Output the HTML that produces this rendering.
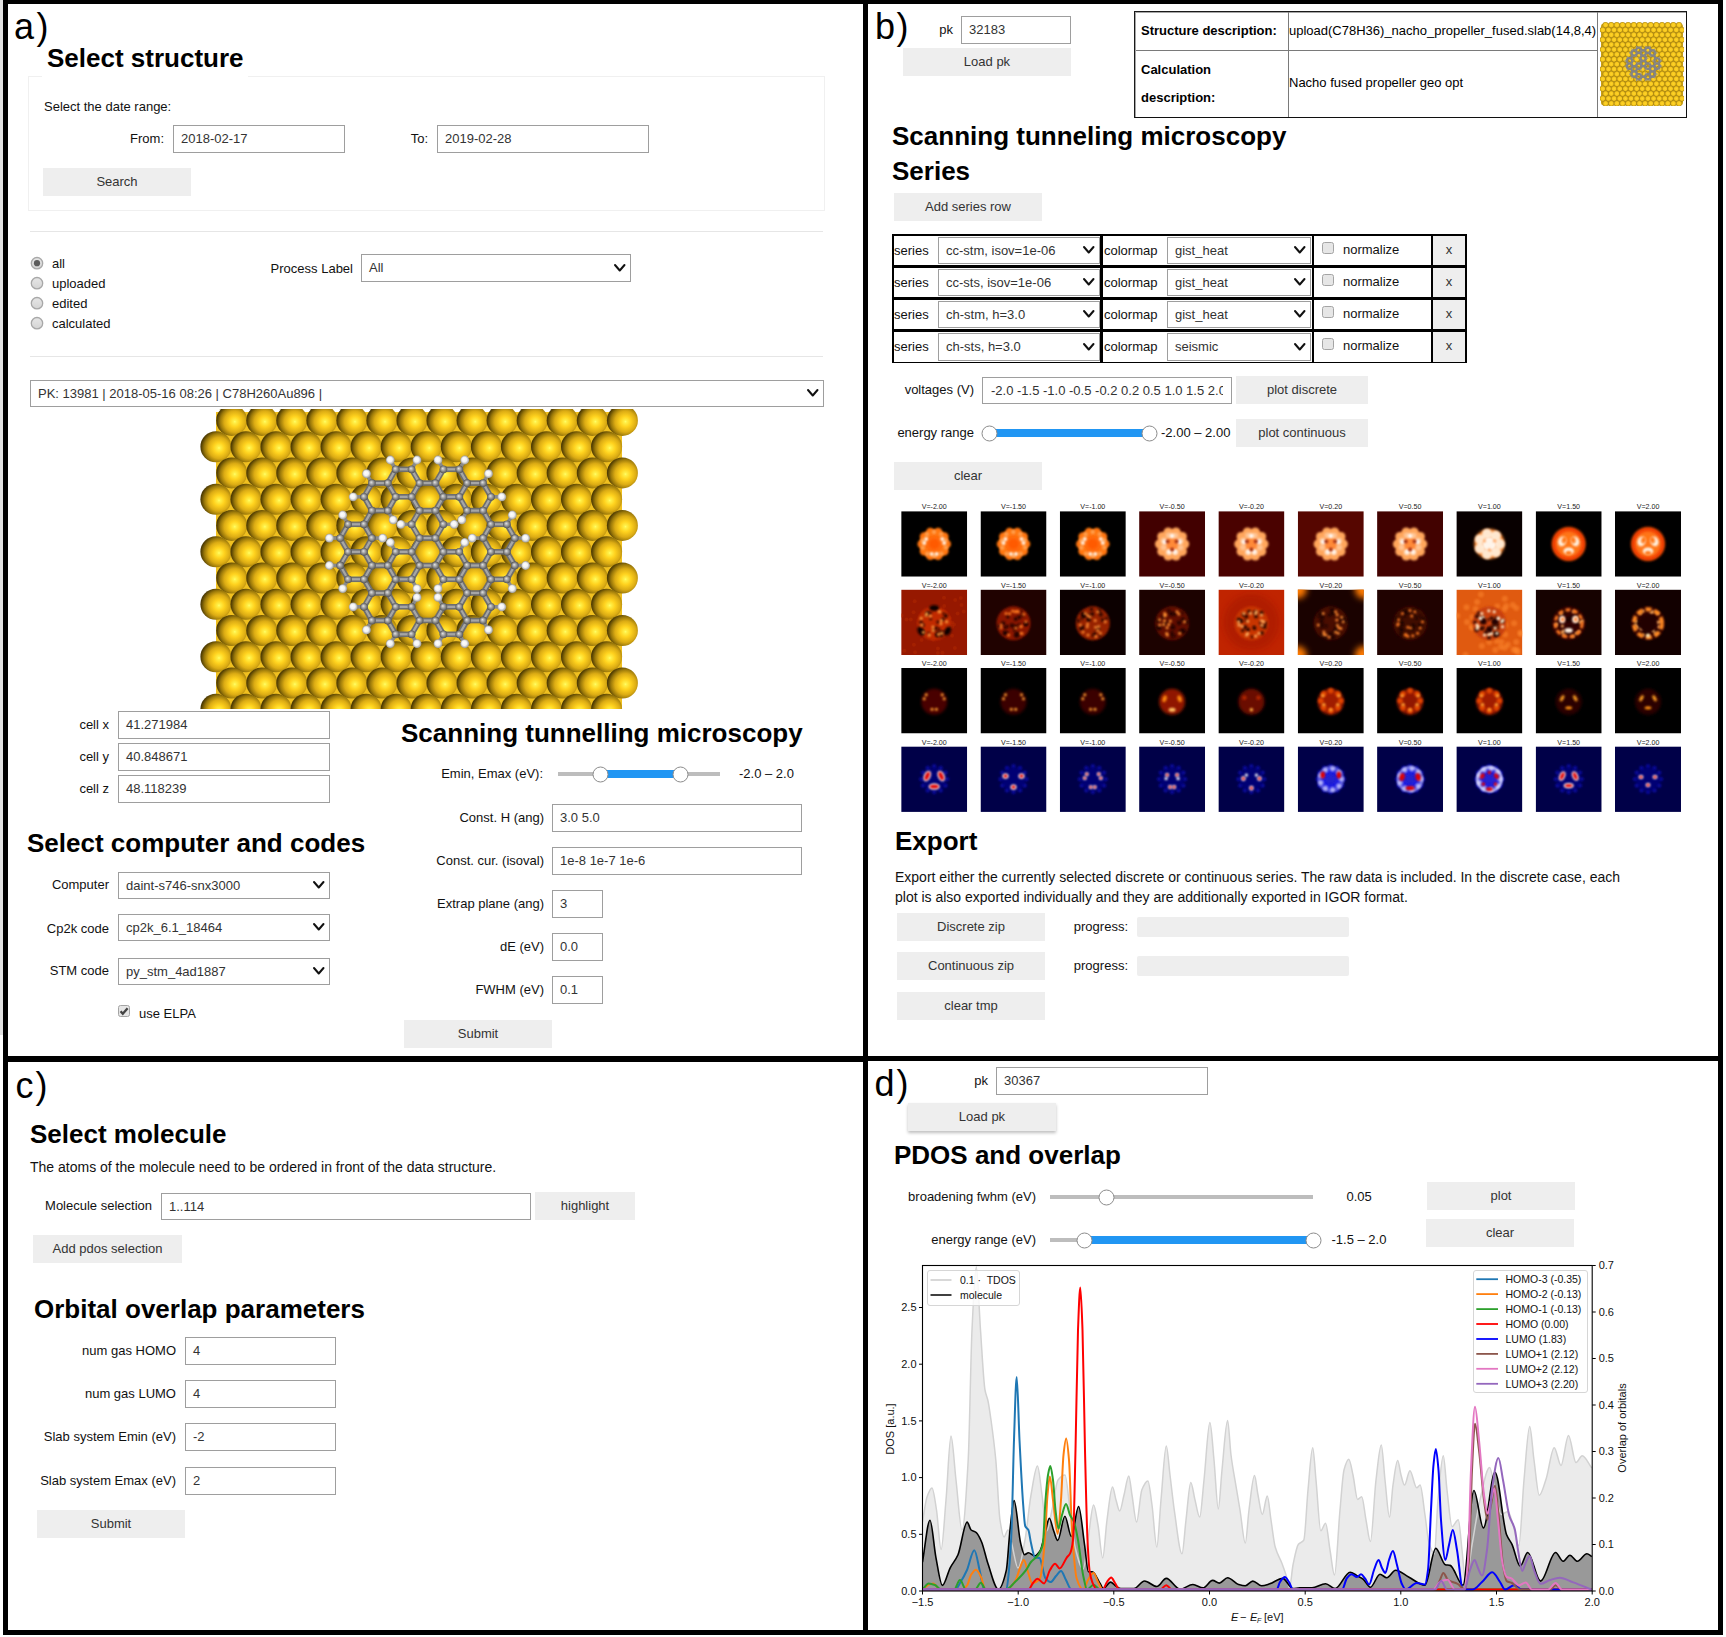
<!DOCTYPE html>
<html><head><meta charset='utf-8'><style>
html,body{margin:0;padding:0;background:#fff;}
body{width:1726px;height:1637px;position:relative;overflow:hidden;font-family:"Liberation Sans", sans-serif;}
.t{position:absolute;white-space:nowrap;line-height:1;color:#222;}
.r{position:absolute;}
</style></head><body>
<div class=t style='top:9px;font-size:36px;color:#000;left:14px;letter-spacing:2.5px;'>a)</div><div class=t style='top:45px;font-size:26px;font-weight:700;color:#000;left:47px;'>Select structure</div><div class=r style='left:28px;top:76px;width:797px;height:135px;border:1px solid #f0f0f0;box-sizing:border-box;'></div><div class=r style='left:42px;top:75px;width:206px;height:3px;background:#fff;'></div><div class=t style='top:100px;font-size:13px;color:#111;left:44px;'>Select the date range:</div><div class=t style='top:132px;font-size:13px;color:#111;right:1562px;'>From:</div><div class=r style='left:173px;top:125px;width:172px;height:28px;background:#fff;border:1px solid #9e9e9e;box-sizing:border-box;'></div><div class=t style='top:132px;font-size:13px;color:#333;left:181px;'>2018-02-17</div><div class=t style='top:132px;font-size:13px;color:#111;right:1298px;'>To:</div><div class=r style='left:437px;top:125px;width:212px;height:28px;background:#fff;border:1px solid #9e9e9e;box-sizing:border-box;'></div><div class=t style='top:132px;font-size:13px;color:#333;left:445px;'>2019-02-28</div><div class=r style='left:43px;top:168px;width:148px;height:28px;background:#eeeeee;'></div><div class=t style='left:43px;width:148px;text-align:center;top:175px;font-size:13px;color:#333'>Search</div><div class=r style='left:30px;top:231px;width:793px;height:1px;background:#e6e6e6;'></div><svg class=r style='left:30px;top:256px' width='14' height='14'><defs><linearGradient id='rg37263' x1='0' y1='0' x2='0' y2='1'><stop offset='0' stop-color='#e6e6e6'/><stop offset='1' stop-color='#d4d4d4'/></linearGradient></defs><circle cx='7' cy='7.2' r='5.7' fill='url(#rg37263)' stroke='#a8a8a8' stroke-width='1.3'/><circle cx='7' cy='7.2' r='3.1' fill='#5c5c5c'/></svg><div class=t style='top:257px;font-size:13px;color:#111;left:52px;'>all</div><svg class=r style='left:30px;top:276px' width='14' height='14'><defs><linearGradient id='rg37283' x1='0' y1='0' x2='0' y2='1'><stop offset='0' stop-color='#e6e6e6'/><stop offset='1' stop-color='#d4d4d4'/></linearGradient></defs><circle cx='7' cy='7.2' r='5.7' fill='url(#rg37283)' stroke='#a8a8a8' stroke-width='1.3'/></svg><div class=t style='top:277px;font-size:13px;color:#111;left:52px;'>uploaded</div><svg class=r style='left:30px;top:296px' width='14' height='14'><defs><linearGradient id='rg37303' x1='0' y1='0' x2='0' y2='1'><stop offset='0' stop-color='#e6e6e6'/><stop offset='1' stop-color='#d4d4d4'/></linearGradient></defs><circle cx='7' cy='7.2' r='5.7' fill='url(#rg37303)' stroke='#a8a8a8' stroke-width='1.3'/></svg><div class=t style='top:297px;font-size:13px;color:#111;left:52px;'>edited</div><svg class=r style='left:30px;top:316px' width='14' height='14'><defs><linearGradient id='rg37323' x1='0' y1='0' x2='0' y2='1'><stop offset='0' stop-color='#e6e6e6'/><stop offset='1' stop-color='#d4d4d4'/></linearGradient></defs><circle cx='7' cy='7.2' r='5.7' fill='url(#rg37323)' stroke='#a8a8a8' stroke-width='1.3'/></svg><div class=t style='top:317px;font-size:13px;color:#111;left:52px;'>calculated</div><div class=t style='top:262px;font-size:13px;color:#111;right:1373px;'>Process Label</div><div class=r style='left:361px;top:254px;width:270px;height:28px;background:#fff;border:1px solid #9e9e9e;box-sizing:border-box;'></div><div class=t style='top:261px;font-size:13px;color:#333;left:369px;'>All</div><svg class=r style='left:613.25px;top:262.95px' width='13.5' height='9.5'><polyline points='2,2 6.75,7.5 11.5,2' fill='none' stroke='#111' stroke-width='2' stroke-linecap='round' stroke-linejoin='round'/></svg><div class=r style='left:30px;top:356px;width:793px;height:1px;background:#e6e6e6;'></div><div class=r style='left:30px;top:380px;width:794px;height:27px;background:#fff;border:1px solid #9e9e9e;box-sizing:border-box;'></div><div class=t style='top:387px;font-size:13px;color:#333;left:38px;'>PK: 13981 | 2018-05-16 08:26 | C78H260Au896 |</div><svg class=r style='left:806.25px;top:388.45px' width='13.5' height='9.5'><polyline points='2,2 6.75,7.5 11.5,2' fill='none' stroke='#111' stroke-width='2' stroke-linecap='round' stroke-linejoin='round'/></svg><svg class=r style='left:198px;top:409px' width='444' height='300' viewBox='198 409 444 300'><defs>
<radialGradient id='au' cx='0.6' cy='0.54' r='0.62' fx='0.6' fy='0.54'>
<stop offset='0' stop-color='#ffff6c'/><stop offset='0.07' stop-color='#fff048'/>
<stop offset='0.28' stop-color='#ffd21e'/><stop offset='0.55' stop-color='#dcac14'/>
<stop offset='0.76' stop-color='#9a780a'/><stop offset='0.9' stop-color='#5e4804'/><stop offset='1' stop-color='#3a2c00'/></radialGradient>
<radialGradient id='cg' cx='0.5' cy='0.5' r='0.5' fx='0.4' fy='0.38'>
<stop offset='0' stop-color='#e4e4e4'/><stop offset='0.6' stop-color='#8e8e8e'/><stop offset='1' stop-color='#555'/></radialGradient>
<radialGradient id='hg' cx='0.5' cy='0.5' r='0.5' fx='0.4' fy='0.38'>
<stop offset='0' stop-color='#ffffff'/><stop offset='0.55' stop-color='#f2f2f2'/><stop offset='1' stop-color='#9a9a9a'/></radialGradient>
</defs><rect x='216' y='412' width='406' height='297' fill='#f0c020'/><ellipse cx='230.9' cy='403' rx='15.5' ry='9' fill='#8a6c06'/><ellipse cx='261.0' cy='403' rx='15.5' ry='9' fill='#8a6c06'/><ellipse cx='291.0' cy='403' rx='15.5' ry='9' fill='#8a6c06'/><ellipse cx='321.1' cy='403' rx='15.5' ry='9' fill='#8a6c06'/><ellipse cx='351.1' cy='403' rx='15.5' ry='9' fill='#8a6c06'/><ellipse cx='381.1' cy='403' rx='15.5' ry='9' fill='#8a6c06'/><ellipse cx='411.2' cy='403' rx='15.5' ry='9' fill='#8a6c06'/><ellipse cx='441.2' cy='403' rx='15.5' ry='9' fill='#8a6c06'/><ellipse cx='471.3' cy='403' rx='15.5' ry='9' fill='#8a6c06'/><ellipse cx='501.4' cy='403' rx='15.5' ry='9' fill='#8a6c06'/><ellipse cx='531.4' cy='403' rx='15.5' ry='9' fill='#8a6c06'/><ellipse cx='561.5' cy='403' rx='15.5' ry='9' fill='#8a6c06'/><ellipse cx='591.5' cy='403' rx='15.5' ry='9' fill='#8a6c06'/><ellipse cx='621.6' cy='403' rx='15.5' ry='9' fill='#8a6c06'/><circle cx='231.7' cy='420.4' r='15.5' fill='url(#au)'/><circle cx='261.8' cy='420.4' r='15.5' fill='url(#au)'/><circle cx='291.8' cy='420.4' r='15.5' fill='url(#au)'/><circle cx='321.9' cy='420.4' r='15.5' fill='url(#au)'/><circle cx='351.9' cy='420.4' r='15.5' fill='url(#au)'/><circle cx='381.9' cy='420.4' r='15.5' fill='url(#au)'/><circle cx='412.0' cy='420.4' r='15.5' fill='url(#au)'/><circle cx='442.0' cy='420.4' r='15.5' fill='url(#au)'/><circle cx='472.1' cy='420.4' r='15.5' fill='url(#au)'/><circle cx='502.1' cy='420.4' r='15.5' fill='url(#au)'/><circle cx='532.2' cy='420.4' r='15.5' fill='url(#au)'/><circle cx='562.2' cy='420.4' r='15.5' fill='url(#au)'/><circle cx='592.3' cy='420.4' r='15.5' fill='url(#au)'/><circle cx='622.4' cy='420.4' r='15.5' fill='url(#au)'/><circle cx='215.9' cy='446.7' r='15.5' fill='url(#au)'/><circle cx='246.0' cy='446.7' r='15.5' fill='url(#au)'/><circle cx='276.0' cy='446.7' r='15.5' fill='url(#au)'/><circle cx='306.1' cy='446.7' r='15.5' fill='url(#au)'/><circle cx='336.1' cy='446.7' r='15.5' fill='url(#au)'/><circle cx='366.1' cy='446.7' r='15.5' fill='url(#au)'/><circle cx='396.2' cy='446.7' r='15.5' fill='url(#au)'/><circle cx='426.2' cy='446.7' r='15.5' fill='url(#au)'/><circle cx='456.3' cy='446.7' r='15.5' fill='url(#au)'/><circle cx='486.4' cy='446.7' r='15.5' fill='url(#au)'/><circle cx='516.4' cy='446.7' r='15.5' fill='url(#au)'/><circle cx='546.5' cy='446.7' r='15.5' fill='url(#au)'/><circle cx='576.5' cy='446.7' r='15.5' fill='url(#au)'/><circle cx='606.6' cy='446.7' r='15.5' fill='url(#au)'/><circle cx='231.7' cy='472.9' r='15.5' fill='url(#au)'/><circle cx='261.8' cy='472.9' r='15.5' fill='url(#au)'/><circle cx='291.8' cy='472.9' r='15.5' fill='url(#au)'/><circle cx='321.9' cy='472.9' r='15.5' fill='url(#au)'/><circle cx='351.9' cy='472.9' r='15.5' fill='url(#au)'/><circle cx='381.9' cy='472.9' r='15.5' fill='url(#au)'/><circle cx='412.0' cy='472.9' r='15.5' fill='url(#au)'/><circle cx='442.0' cy='472.9' r='15.5' fill='url(#au)'/><circle cx='472.1' cy='472.9' r='15.5' fill='url(#au)'/><circle cx='502.1' cy='472.9' r='15.5' fill='url(#au)'/><circle cx='532.2' cy='472.9' r='15.5' fill='url(#au)'/><circle cx='562.2' cy='472.9' r='15.5' fill='url(#au)'/><circle cx='592.3' cy='472.9' r='15.5' fill='url(#au)'/><circle cx='622.4' cy='472.9' r='15.5' fill='url(#au)'/><circle cx='215.9' cy='499.2' r='15.5' fill='url(#au)'/><circle cx='246.0' cy='499.2' r='15.5' fill='url(#au)'/><circle cx='276.0' cy='499.2' r='15.5' fill='url(#au)'/><circle cx='306.1' cy='499.2' r='15.5' fill='url(#au)'/><circle cx='336.1' cy='499.2' r='15.5' fill='url(#au)'/><circle cx='366.1' cy='499.2' r='15.5' fill='url(#au)'/><circle cx='396.2' cy='499.2' r='15.5' fill='url(#au)'/><circle cx='426.2' cy='499.2' r='15.5' fill='url(#au)'/><circle cx='456.3' cy='499.2' r='15.5' fill='url(#au)'/><circle cx='486.4' cy='499.2' r='15.5' fill='url(#au)'/><circle cx='516.4' cy='499.2' r='15.5' fill='url(#au)'/><circle cx='546.5' cy='499.2' r='15.5' fill='url(#au)'/><circle cx='576.5' cy='499.2' r='15.5' fill='url(#au)'/><circle cx='606.6' cy='499.2' r='15.5' fill='url(#au)'/><circle cx='231.7' cy='525.4' r='15.5' fill='url(#au)'/><circle cx='261.8' cy='525.4' r='15.5' fill='url(#au)'/><circle cx='291.8' cy='525.4' r='15.5' fill='url(#au)'/><circle cx='321.9' cy='525.4' r='15.5' fill='url(#au)'/><circle cx='351.9' cy='525.4' r='15.5' fill='url(#au)'/><circle cx='381.9' cy='525.4' r='15.5' fill='url(#au)'/><circle cx='412.0' cy='525.4' r='15.5' fill='url(#au)'/><circle cx='442.0' cy='525.4' r='15.5' fill='url(#au)'/><circle cx='472.1' cy='525.4' r='15.5' fill='url(#au)'/><circle cx='502.1' cy='525.4' r='15.5' fill='url(#au)'/><circle cx='532.2' cy='525.4' r='15.5' fill='url(#au)'/><circle cx='562.2' cy='525.4' r='15.5' fill='url(#au)'/><circle cx='592.3' cy='525.4' r='15.5' fill='url(#au)'/><circle cx='622.4' cy='525.4' r='15.5' fill='url(#au)'/><circle cx='215.9' cy='551.7' r='15.5' fill='url(#au)'/><circle cx='246.0' cy='551.7' r='15.5' fill='url(#au)'/><circle cx='276.0' cy='551.7' r='15.5' fill='url(#au)'/><circle cx='306.1' cy='551.7' r='15.5' fill='url(#au)'/><circle cx='336.1' cy='551.7' r='15.5' fill='url(#au)'/><circle cx='366.1' cy='551.7' r='15.5' fill='url(#au)'/><circle cx='396.2' cy='551.7' r='15.5' fill='url(#au)'/><circle cx='426.2' cy='551.7' r='15.5' fill='url(#au)'/><circle cx='456.3' cy='551.7' r='15.5' fill='url(#au)'/><circle cx='486.4' cy='551.7' r='15.5' fill='url(#au)'/><circle cx='516.4' cy='551.7' r='15.5' fill='url(#au)'/><circle cx='546.5' cy='551.7' r='15.5' fill='url(#au)'/><circle cx='576.5' cy='551.7' r='15.5' fill='url(#au)'/><circle cx='606.6' cy='551.7' r='15.5' fill='url(#au)'/><circle cx='231.7' cy='578.0' r='15.5' fill='url(#au)'/><circle cx='261.8' cy='578.0' r='15.5' fill='url(#au)'/><circle cx='291.8' cy='578.0' r='15.5' fill='url(#au)'/><circle cx='321.9' cy='578.0' r='15.5' fill='url(#au)'/><circle cx='351.9' cy='578.0' r='15.5' fill='url(#au)'/><circle cx='381.9' cy='578.0' r='15.5' fill='url(#au)'/><circle cx='412.0' cy='578.0' r='15.5' fill='url(#au)'/><circle cx='442.0' cy='578.0' r='15.5' fill='url(#au)'/><circle cx='472.1' cy='578.0' r='15.5' fill='url(#au)'/><circle cx='502.1' cy='578.0' r='15.5' fill='url(#au)'/><circle cx='532.2' cy='578.0' r='15.5' fill='url(#au)'/><circle cx='562.2' cy='578.0' r='15.5' fill='url(#au)'/><circle cx='592.3' cy='578.0' r='15.5' fill='url(#au)'/><circle cx='622.4' cy='578.0' r='15.5' fill='url(#au)'/><circle cx='215.9' cy='604.2' r='15.5' fill='url(#au)'/><circle cx='246.0' cy='604.2' r='15.5' fill='url(#au)'/><circle cx='276.0' cy='604.2' r='15.5' fill='url(#au)'/><circle cx='306.1' cy='604.2' r='15.5' fill='url(#au)'/><circle cx='336.1' cy='604.2' r='15.5' fill='url(#au)'/><circle cx='366.1' cy='604.2' r='15.5' fill='url(#au)'/><circle cx='396.2' cy='604.2' r='15.5' fill='url(#au)'/><circle cx='426.2' cy='604.2' r='15.5' fill='url(#au)'/><circle cx='456.3' cy='604.2' r='15.5' fill='url(#au)'/><circle cx='486.4' cy='604.2' r='15.5' fill='url(#au)'/><circle cx='516.4' cy='604.2' r='15.5' fill='url(#au)'/><circle cx='546.5' cy='604.2' r='15.5' fill='url(#au)'/><circle cx='576.5' cy='604.2' r='15.5' fill='url(#au)'/><circle cx='606.6' cy='604.2' r='15.5' fill='url(#au)'/><circle cx='231.7' cy='630.5' r='15.5' fill='url(#au)'/><circle cx='261.8' cy='630.5' r='15.5' fill='url(#au)'/><circle cx='291.8' cy='630.5' r='15.5' fill='url(#au)'/><circle cx='321.9' cy='630.5' r='15.5' fill='url(#au)'/><circle cx='351.9' cy='630.5' r='15.5' fill='url(#au)'/><circle cx='381.9' cy='630.5' r='15.5' fill='url(#au)'/><circle cx='412.0' cy='630.5' r='15.5' fill='url(#au)'/><circle cx='442.0' cy='630.5' r='15.5' fill='url(#au)'/><circle cx='472.1' cy='630.5' r='15.5' fill='url(#au)'/><circle cx='502.1' cy='630.5' r='15.5' fill='url(#au)'/><circle cx='532.2' cy='630.5' r='15.5' fill='url(#au)'/><circle cx='562.2' cy='630.5' r='15.5' fill='url(#au)'/><circle cx='592.3' cy='630.5' r='15.5' fill='url(#au)'/><circle cx='622.4' cy='630.5' r='15.5' fill='url(#au)'/><circle cx='215.9' cy='656.7' r='15.5' fill='url(#au)'/><circle cx='246.0' cy='656.7' r='15.5' fill='url(#au)'/><circle cx='276.0' cy='656.7' r='15.5' fill='url(#au)'/><circle cx='306.1' cy='656.7' r='15.5' fill='url(#au)'/><circle cx='336.1' cy='656.7' r='15.5' fill='url(#au)'/><circle cx='366.1' cy='656.7' r='15.5' fill='url(#au)'/><circle cx='396.2' cy='656.7' r='15.5' fill='url(#au)'/><circle cx='426.2' cy='656.7' r='15.5' fill='url(#au)'/><circle cx='456.3' cy='656.7' r='15.5' fill='url(#au)'/><circle cx='486.4' cy='656.7' r='15.5' fill='url(#au)'/><circle cx='516.4' cy='656.7' r='15.5' fill='url(#au)'/><circle cx='546.5' cy='656.7' r='15.5' fill='url(#au)'/><circle cx='576.5' cy='656.7' r='15.5' fill='url(#au)'/><circle cx='606.6' cy='656.7' r='15.5' fill='url(#au)'/><circle cx='231.7' cy='683.0' r='15.5' fill='url(#au)'/><circle cx='261.8' cy='683.0' r='15.5' fill='url(#au)'/><circle cx='291.8' cy='683.0' r='15.5' fill='url(#au)'/><circle cx='321.9' cy='683.0' r='15.5' fill='url(#au)'/><circle cx='351.9' cy='683.0' r='15.5' fill='url(#au)'/><circle cx='381.9' cy='683.0' r='15.5' fill='url(#au)'/><circle cx='412.0' cy='683.0' r='15.5' fill='url(#au)'/><circle cx='442.0' cy='683.0' r='15.5' fill='url(#au)'/><circle cx='472.1' cy='683.0' r='15.5' fill='url(#au)'/><circle cx='502.1' cy='683.0' r='15.5' fill='url(#au)'/><circle cx='532.2' cy='683.0' r='15.5' fill='url(#au)'/><circle cx='562.2' cy='683.0' r='15.5' fill='url(#au)'/><circle cx='592.3' cy='683.0' r='15.5' fill='url(#au)'/><circle cx='622.4' cy='683.0' r='15.5' fill='url(#au)'/><circle cx='215.9' cy='709.3' r='15.5' fill='url(#au)'/><circle cx='246.0' cy='709.3' r='15.5' fill='url(#au)'/><circle cx='276.0' cy='709.3' r='15.5' fill='url(#au)'/><circle cx='306.1' cy='709.3' r='15.5' fill='url(#au)'/><circle cx='336.1' cy='709.3' r='15.5' fill='url(#au)'/><circle cx='366.1' cy='709.3' r='15.5' fill='url(#au)'/><circle cx='396.2' cy='709.3' r='15.5' fill='url(#au)'/><circle cx='426.2' cy='709.3' r='15.5' fill='url(#au)'/><circle cx='456.3' cy='709.3' r='15.5' fill='url(#au)'/><circle cx='486.4' cy='709.3' r='15.5' fill='url(#au)'/><circle cx='516.4' cy='709.3' r='15.5' fill='url(#au)'/><circle cx='546.5' cy='709.3' r='15.5' fill='url(#au)'/><circle cx='576.5' cy='709.3' r='15.5' fill='url(#au)'/><circle cx='606.6' cy='709.3' r='15.5' fill='url(#au)'/><line x1='395.7' y1='469.3' x2='390.3' y2='460.0' stroke='#8a8a8a' stroke-width='3.6'/><line x1='411.6' y1='469.3' x2='417.0' y2='460.0' stroke='#8a8a8a' stroke-width='3.6'/><line x1='443.4' y1='469.3' x2='438.0' y2='460.0' stroke='#8a8a8a' stroke-width='3.6'/><line x1='459.3' y1='469.3' x2='464.7' y2='460.0' stroke='#8a8a8a' stroke-width='3.6'/><line x1='371.9' y1='483.1' x2='366.5' y2='473.7' stroke='#8a8a8a' stroke-width='3.6'/><line x1='483.1' y1='483.1' x2='488.5' y2='473.7' stroke='#8a8a8a' stroke-width='3.6'/><line x1='364.0' y1='496.8' x2='353.2' y2='496.8' stroke='#8a8a8a' stroke-width='3.6'/><line x1='491.0' y1='496.8' x2='501.8' y2='496.8' stroke='#8a8a8a' stroke-width='3.6'/><line x1='387.8' y1='510.6' x2='393.2' y2='519.9' stroke='#8a8a8a' stroke-width='3.6'/><line x1='467.2' y1='510.6' x2='461.8' y2='519.9' stroke='#8a8a8a' stroke-width='3.6'/><line x1='348.1' y1='524.3' x2='342.7' y2='515.0' stroke='#8a8a8a' stroke-width='3.6'/><line x1='411.6' y1='524.3' x2='400.8' y2='524.3' stroke='#8a8a8a' stroke-width='3.6'/><line x1='443.4' y1='524.3' x2='454.2' y2='524.3' stroke='#8a8a8a' stroke-width='3.6'/><line x1='506.9' y1='524.3' x2='512.3' y2='515.0' stroke='#8a8a8a' stroke-width='3.6'/><line x1='340.2' y1='538.1' x2='329.4' y2='538.1' stroke='#8a8a8a' stroke-width='3.6'/><line x1='371.9' y1='538.1' x2='382.7' y2='538.1' stroke='#8a8a8a' stroke-width='3.6'/><line x1='483.1' y1='538.1' x2='472.3' y2='538.1' stroke='#8a8a8a' stroke-width='3.6'/><line x1='514.8' y1='538.1' x2='525.6' y2='538.1' stroke='#8a8a8a' stroke-width='3.6'/><line x1='395.7' y1='551.8' x2='390.3' y2='542.5' stroke='#8a8a8a' stroke-width='3.6'/><line x1='459.3' y1='551.8' x2='464.7' y2='542.5' stroke='#8a8a8a' stroke-width='3.6'/><line x1='340.2' y1='565.5' x2='329.4' y2='565.5' stroke='#8a8a8a' stroke-width='3.6'/><line x1='514.8' y1='565.5' x2='525.6' y2='565.5' stroke='#8a8a8a' stroke-width='3.6'/><line x1='348.1' y1='579.3' x2='342.7' y2='588.6' stroke='#8a8a8a' stroke-width='3.6'/><line x1='411.6' y1='579.3' x2='417.0' y2='588.6' stroke='#8a8a8a' stroke-width='3.6'/><line x1='443.4' y1='579.3' x2='438.0' y2='588.6' stroke='#8a8a8a' stroke-width='3.6'/><line x1='506.9' y1='579.3' x2='512.3' y2='588.6' stroke='#8a8a8a' stroke-width='3.6'/><line x1='364.0' y1='606.8' x2='353.2' y2='606.8' stroke='#8a8a8a' stroke-width='3.6'/><line x1='411.6' y1='606.8' x2='417.0' y2='597.4' stroke='#8a8a8a' stroke-width='3.6'/><line x1='443.4' y1='606.8' x2='438.0' y2='597.4' stroke='#8a8a8a' stroke-width='3.6'/><line x1='491.0' y1='606.8' x2='501.8' y2='606.8' stroke='#8a8a8a' stroke-width='3.6'/><line x1='371.9' y1='620.5' x2='366.5' y2='629.9' stroke='#8a8a8a' stroke-width='3.6'/><line x1='483.1' y1='620.5' x2='488.5' y2='629.9' stroke='#8a8a8a' stroke-width='3.6'/><line x1='395.7' y1='634.3' x2='390.3' y2='643.6' stroke='#8a8a8a' stroke-width='3.6'/><line x1='411.6' y1='634.3' x2='417.0' y2='643.6' stroke='#8a8a8a' stroke-width='3.6'/><line x1='443.4' y1='634.3' x2='438.0' y2='643.6' stroke='#8a8a8a' stroke-width='3.6'/><line x1='459.3' y1='634.3' x2='464.7' y2='643.6' stroke='#8a8a8a' stroke-width='3.6'/><line x1='395.7' y1='469.3' x2='411.6' y2='469.3' stroke='#6e6e6e' stroke-width='5.6'/><line x1='395.7' y1='469.3' x2='387.8' y2='483.1' stroke='#6e6e6e' stroke-width='5.6'/><line x1='411.6' y1='469.3' x2='419.6' y2='483.1' stroke='#6e6e6e' stroke-width='5.6'/><line x1='443.4' y1='469.3' x2='459.3' y2='469.3' stroke='#6e6e6e' stroke-width='5.6'/><line x1='443.4' y1='469.3' x2='435.4' y2='483.1' stroke='#6e6e6e' stroke-width='5.6'/><line x1='459.3' y1='469.3' x2='467.2' y2='483.1' stroke='#6e6e6e' stroke-width='5.6'/><line x1='371.9' y1='483.1' x2='387.8' y2='483.1' stroke='#6e6e6e' stroke-width='5.6'/><line x1='371.9' y1='483.1' x2='364.0' y2='496.8' stroke='#6e6e6e' stroke-width='5.6'/><line x1='387.8' y1='483.1' x2='395.7' y2='496.8' stroke='#6e6e6e' stroke-width='5.6'/><line x1='419.6' y1='483.1' x2='435.4' y2='483.1' stroke='#6e6e6e' stroke-width='5.6'/><line x1='419.6' y1='483.1' x2='411.6' y2='496.8' stroke='#6e6e6e' stroke-width='5.6'/><line x1='435.4' y1='483.1' x2='443.4' y2='496.8' stroke='#6e6e6e' stroke-width='5.6'/><line x1='467.2' y1='483.1' x2='483.1' y2='483.1' stroke='#6e6e6e' stroke-width='5.6'/><line x1='467.2' y1='483.1' x2='459.3' y2='496.8' stroke='#6e6e6e' stroke-width='5.6'/><line x1='483.1' y1='483.1' x2='491.0' y2='496.8' stroke='#6e6e6e' stroke-width='5.6'/><line x1='364.0' y1='496.8' x2='371.9' y2='510.6' stroke='#6e6e6e' stroke-width='5.6'/><line x1='395.7' y1='496.8' x2='411.6' y2='496.8' stroke='#6e6e6e' stroke-width='5.6'/><line x1='395.7' y1='496.8' x2='387.8' y2='510.6' stroke='#6e6e6e' stroke-width='5.6'/><line x1='411.6' y1='496.8' x2='419.6' y2='510.6' stroke='#6e6e6e' stroke-width='5.6'/><line x1='443.4' y1='496.8' x2='459.3' y2='496.8' stroke='#6e6e6e' stroke-width='5.6'/><line x1='443.4' y1='496.8' x2='435.4' y2='510.6' stroke='#6e6e6e' stroke-width='5.6'/><line x1='459.3' y1='496.8' x2='467.2' y2='510.6' stroke='#6e6e6e' stroke-width='5.6'/><line x1='491.0' y1='496.8' x2='483.1' y2='510.6' stroke='#6e6e6e' stroke-width='5.6'/><line x1='371.9' y1='510.6' x2='387.8' y2='510.6' stroke='#6e6e6e' stroke-width='5.6'/><line x1='371.9' y1='510.6' x2='364.0' y2='524.3' stroke='#6e6e6e' stroke-width='5.6'/><line x1='419.6' y1='510.6' x2='435.4' y2='510.6' stroke='#6e6e6e' stroke-width='5.6'/><line x1='419.6' y1='510.6' x2='411.6' y2='524.3' stroke='#6e6e6e' stroke-width='5.6'/><line x1='435.4' y1='510.6' x2='443.4' y2='524.3' stroke='#6e6e6e' stroke-width='5.6'/><line x1='467.2' y1='510.6' x2='483.1' y2='510.6' stroke='#6e6e6e' stroke-width='5.6'/><line x1='483.1' y1='510.6' x2='491.0' y2='524.3' stroke='#6e6e6e' stroke-width='5.6'/><line x1='348.1' y1='524.3' x2='364.0' y2='524.3' stroke='#6e6e6e' stroke-width='5.6'/><line x1='348.1' y1='524.3' x2='340.2' y2='538.1' stroke='#6e6e6e' stroke-width='5.6'/><line x1='364.0' y1='524.3' x2='371.9' y2='538.1' stroke='#6e6e6e' stroke-width='5.6'/><line x1='411.6' y1='524.3' x2='419.6' y2='538.1' stroke='#6e6e6e' stroke-width='5.6'/><line x1='443.4' y1='524.3' x2='435.4' y2='538.1' stroke='#6e6e6e' stroke-width='5.6'/><line x1='491.0' y1='524.3' x2='506.9' y2='524.3' stroke='#6e6e6e' stroke-width='5.6'/><line x1='491.0' y1='524.3' x2='483.1' y2='538.1' stroke='#6e6e6e' stroke-width='5.6'/><line x1='506.9' y1='524.3' x2='514.8' y2='538.1' stroke='#6e6e6e' stroke-width='5.6'/><line x1='340.2' y1='538.1' x2='348.1' y2='551.8' stroke='#6e6e6e' stroke-width='5.6'/><line x1='371.9' y1='538.1' x2='364.0' y2='551.8' stroke='#6e6e6e' stroke-width='5.6'/><line x1='419.6' y1='538.1' x2='435.4' y2='538.1' stroke='#6e6e6e' stroke-width='5.6'/><line x1='419.6' y1='538.1' x2='411.6' y2='551.8' stroke='#6e6e6e' stroke-width='5.6'/><line x1='435.4' y1='538.1' x2='443.4' y2='551.8' stroke='#6e6e6e' stroke-width='5.6'/><line x1='483.1' y1='538.1' x2='491.0' y2='551.8' stroke='#6e6e6e' stroke-width='5.6'/><line x1='514.8' y1='538.1' x2='506.9' y2='551.8' stroke='#6e6e6e' stroke-width='5.6'/><line x1='348.1' y1='551.8' x2='364.0' y2='551.8' stroke='#6e6e6e' stroke-width='5.6'/><line x1='348.1' y1='551.8' x2='340.2' y2='565.5' stroke='#6e6e6e' stroke-width='5.6'/><line x1='364.0' y1='551.8' x2='371.9' y2='565.5' stroke='#6e6e6e' stroke-width='5.6'/><line x1='395.7' y1='551.8' x2='411.6' y2='551.8' stroke='#6e6e6e' stroke-width='5.6'/><line x1='395.7' y1='551.8' x2='387.8' y2='565.5' stroke='#6e6e6e' stroke-width='5.6'/><line x1='411.6' y1='551.8' x2='419.6' y2='565.5' stroke='#6e6e6e' stroke-width='5.6'/><line x1='443.4' y1='551.8' x2='459.3' y2='551.8' stroke='#6e6e6e' stroke-width='5.6'/><line x1='443.4' y1='551.8' x2='435.4' y2='565.5' stroke='#6e6e6e' stroke-width='5.6'/><line x1='459.3' y1='551.8' x2='467.2' y2='565.5' stroke='#6e6e6e' stroke-width='5.6'/><line x1='491.0' y1='551.8' x2='506.9' y2='551.8' stroke='#6e6e6e' stroke-width='5.6'/><line x1='491.0' y1='551.8' x2='483.1' y2='565.5' stroke='#6e6e6e' stroke-width='5.6'/><line x1='506.9' y1='551.8' x2='514.8' y2='565.5' stroke='#6e6e6e' stroke-width='5.6'/><line x1='340.2' y1='565.5' x2='348.1' y2='579.3' stroke='#6e6e6e' stroke-width='5.6'/><line x1='371.9' y1='565.5' x2='387.8' y2='565.5' stroke='#6e6e6e' stroke-width='5.6'/><line x1='371.9' y1='565.5' x2='364.0' y2='579.3' stroke='#6e6e6e' stroke-width='5.6'/><line x1='387.8' y1='565.5' x2='395.7' y2='579.3' stroke='#6e6e6e' stroke-width='5.6'/><line x1='419.6' y1='565.5' x2='435.4' y2='565.5' stroke='#6e6e6e' stroke-width='5.6'/><line x1='419.6' y1='565.5' x2='411.6' y2='579.3' stroke='#6e6e6e' stroke-width='5.6'/><line x1='435.4' y1='565.5' x2='443.4' y2='579.3' stroke='#6e6e6e' stroke-width='5.6'/><line x1='467.2' y1='565.5' x2='483.1' y2='565.5' stroke='#6e6e6e' stroke-width='5.6'/><line x1='467.2' y1='565.5' x2='459.3' y2='579.3' stroke='#6e6e6e' stroke-width='5.6'/><line x1='483.1' y1='565.5' x2='491.0' y2='579.3' stroke='#6e6e6e' stroke-width='5.6'/><line x1='514.8' y1='565.5' x2='506.9' y2='579.3' stroke='#6e6e6e' stroke-width='5.6'/><line x1='348.1' y1='579.3' x2='364.0' y2='579.3' stroke='#6e6e6e' stroke-width='5.6'/><line x1='364.0' y1='579.3' x2='371.9' y2='593.0' stroke='#6e6e6e' stroke-width='5.6'/><line x1='395.7' y1='579.3' x2='411.6' y2='579.3' stroke='#6e6e6e' stroke-width='5.6'/><line x1='395.7' y1='579.3' x2='387.8' y2='593.0' stroke='#6e6e6e' stroke-width='5.6'/><line x1='443.4' y1='579.3' x2='459.3' y2='579.3' stroke='#6e6e6e' stroke-width='5.6'/><line x1='459.3' y1='579.3' x2='467.2' y2='593.0' stroke='#6e6e6e' stroke-width='5.6'/><line x1='491.0' y1='579.3' x2='506.9' y2='579.3' stroke='#6e6e6e' stroke-width='5.6'/><line x1='491.0' y1='579.3' x2='483.1' y2='593.0' stroke='#6e6e6e' stroke-width='5.6'/><line x1='371.9' y1='593.0' x2='387.8' y2='593.0' stroke='#6e6e6e' stroke-width='5.6'/><line x1='371.9' y1='593.0' x2='364.0' y2='606.8' stroke='#6e6e6e' stroke-width='5.6'/><line x1='387.8' y1='593.0' x2='395.7' y2='606.8' stroke='#6e6e6e' stroke-width='5.6'/><line x1='467.2' y1='593.0' x2='483.1' y2='593.0' stroke='#6e6e6e' stroke-width='5.6'/><line x1='467.2' y1='593.0' x2='459.3' y2='606.8' stroke='#6e6e6e' stroke-width='5.6'/><line x1='483.1' y1='593.0' x2='491.0' y2='606.8' stroke='#6e6e6e' stroke-width='5.6'/><line x1='364.0' y1='606.8' x2='371.9' y2='620.5' stroke='#6e6e6e' stroke-width='5.6'/><line x1='395.7' y1='606.8' x2='411.6' y2='606.8' stroke='#6e6e6e' stroke-width='5.6'/><line x1='395.7' y1='606.8' x2='387.8' y2='620.5' stroke='#6e6e6e' stroke-width='5.6'/><line x1='411.6' y1='606.8' x2='419.6' y2='620.5' stroke='#6e6e6e' stroke-width='5.6'/><line x1='443.4' y1='606.8' x2='459.3' y2='606.8' stroke='#6e6e6e' stroke-width='5.6'/><line x1='443.4' y1='606.8' x2='435.4' y2='620.5' stroke='#6e6e6e' stroke-width='5.6'/><line x1='459.3' y1='606.8' x2='467.2' y2='620.5' stroke='#6e6e6e' stroke-width='5.6'/><line x1='491.0' y1='606.8' x2='483.1' y2='620.5' stroke='#6e6e6e' stroke-width='5.6'/><line x1='371.9' y1='620.5' x2='387.8' y2='620.5' stroke='#6e6e6e' stroke-width='5.6'/><line x1='387.8' y1='620.5' x2='395.7' y2='634.3' stroke='#6e6e6e' stroke-width='5.6'/><line x1='419.6' y1='620.5' x2='435.4' y2='620.5' stroke='#6e6e6e' stroke-width='5.6'/><line x1='419.6' y1='620.5' x2='411.6' y2='634.3' stroke='#6e6e6e' stroke-width='5.6'/><line x1='435.4' y1='620.5' x2='443.4' y2='634.3' stroke='#6e6e6e' stroke-width='5.6'/><line x1='467.2' y1='620.5' x2='483.1' y2='620.5' stroke='#6e6e6e' stroke-width='5.6'/><line x1='467.2' y1='620.5' x2='459.3' y2='634.3' stroke='#6e6e6e' stroke-width='5.6'/><line x1='395.7' y1='634.3' x2='411.6' y2='634.3' stroke='#6e6e6e' stroke-width='5.6'/><line x1='443.4' y1='634.3' x2='459.3' y2='634.3' stroke='#6e6e6e' stroke-width='5.6'/><line x1='395.7' y1='469.3' x2='411.6' y2='469.3' stroke='#a6a6a6' stroke-width='2.3'/><line x1='395.7' y1='469.3' x2='387.8' y2='483.1' stroke='#a6a6a6' stroke-width='2.3'/><line x1='411.6' y1='469.3' x2='419.6' y2='483.1' stroke='#a6a6a6' stroke-width='2.3'/><line x1='443.4' y1='469.3' x2='459.3' y2='469.3' stroke='#a6a6a6' stroke-width='2.3'/><line x1='443.4' y1='469.3' x2='435.4' y2='483.1' stroke='#a6a6a6' stroke-width='2.3'/><line x1='459.3' y1='469.3' x2='467.2' y2='483.1' stroke='#a6a6a6' stroke-width='2.3'/><line x1='371.9' y1='483.1' x2='387.8' y2='483.1' stroke='#a6a6a6' stroke-width='2.3'/><line x1='371.9' y1='483.1' x2='364.0' y2='496.8' stroke='#a6a6a6' stroke-width='2.3'/><line x1='387.8' y1='483.1' x2='395.7' y2='496.8' stroke='#a6a6a6' stroke-width='2.3'/><line x1='419.6' y1='483.1' x2='435.4' y2='483.1' stroke='#a6a6a6' stroke-width='2.3'/><line x1='419.6' y1='483.1' x2='411.6' y2='496.8' stroke='#a6a6a6' stroke-width='2.3'/><line x1='435.4' y1='483.1' x2='443.4' y2='496.8' stroke='#a6a6a6' stroke-width='2.3'/><line x1='467.2' y1='483.1' x2='483.1' y2='483.1' stroke='#a6a6a6' stroke-width='2.3'/><line x1='467.2' y1='483.1' x2='459.3' y2='496.8' stroke='#a6a6a6' stroke-width='2.3'/><line x1='483.1' y1='483.1' x2='491.0' y2='496.8' stroke='#a6a6a6' stroke-width='2.3'/><line x1='364.0' y1='496.8' x2='371.9' y2='510.6' stroke='#a6a6a6' stroke-width='2.3'/><line x1='395.7' y1='496.8' x2='411.6' y2='496.8' stroke='#a6a6a6' stroke-width='2.3'/><line x1='395.7' y1='496.8' x2='387.8' y2='510.6' stroke='#a6a6a6' stroke-width='2.3'/><line x1='411.6' y1='496.8' x2='419.6' y2='510.6' stroke='#a6a6a6' stroke-width='2.3'/><line x1='443.4' y1='496.8' x2='459.3' y2='496.8' stroke='#a6a6a6' stroke-width='2.3'/><line x1='443.4' y1='496.8' x2='435.4' y2='510.6' stroke='#a6a6a6' stroke-width='2.3'/><line x1='459.3' y1='496.8' x2='467.2' y2='510.6' stroke='#a6a6a6' stroke-width='2.3'/><line x1='491.0' y1='496.8' x2='483.1' y2='510.6' stroke='#a6a6a6' stroke-width='2.3'/><line x1='371.9' y1='510.6' x2='387.8' y2='510.6' stroke='#a6a6a6' stroke-width='2.3'/><line x1='371.9' y1='510.6' x2='364.0' y2='524.3' stroke='#a6a6a6' stroke-width='2.3'/><line x1='419.6' y1='510.6' x2='435.4' y2='510.6' stroke='#a6a6a6' stroke-width='2.3'/><line x1='419.6' y1='510.6' x2='411.6' y2='524.3' stroke='#a6a6a6' stroke-width='2.3'/><line x1='435.4' y1='510.6' x2='443.4' y2='524.3' stroke='#a6a6a6' stroke-width='2.3'/><line x1='467.2' y1='510.6' x2='483.1' y2='510.6' stroke='#a6a6a6' stroke-width='2.3'/><line x1='483.1' y1='510.6' x2='491.0' y2='524.3' stroke='#a6a6a6' stroke-width='2.3'/><line x1='348.1' y1='524.3' x2='364.0' y2='524.3' stroke='#a6a6a6' stroke-width='2.3'/><line x1='348.1' y1='524.3' x2='340.2' y2='538.1' stroke='#a6a6a6' stroke-width='2.3'/><line x1='364.0' y1='524.3' x2='371.9' y2='538.1' stroke='#a6a6a6' stroke-width='2.3'/><line x1='411.6' y1='524.3' x2='419.6' y2='538.1' stroke='#a6a6a6' stroke-width='2.3'/><line x1='443.4' y1='524.3' x2='435.4' y2='538.1' stroke='#a6a6a6' stroke-width='2.3'/><line x1='491.0' y1='524.3' x2='506.9' y2='524.3' stroke='#a6a6a6' stroke-width='2.3'/><line x1='491.0' y1='524.3' x2='483.1' y2='538.1' stroke='#a6a6a6' stroke-width='2.3'/><line x1='506.9' y1='524.3' x2='514.8' y2='538.1' stroke='#a6a6a6' stroke-width='2.3'/><line x1='340.2' y1='538.1' x2='348.1' y2='551.8' stroke='#a6a6a6' stroke-width='2.3'/><line x1='371.9' y1='538.1' x2='364.0' y2='551.8' stroke='#a6a6a6' stroke-width='2.3'/><line x1='419.6' y1='538.1' x2='435.4' y2='538.1' stroke='#a6a6a6' stroke-width='2.3'/><line x1='419.6' y1='538.1' x2='411.6' y2='551.8' stroke='#a6a6a6' stroke-width='2.3'/><line x1='435.4' y1='538.1' x2='443.4' y2='551.8' stroke='#a6a6a6' stroke-width='2.3'/><line x1='483.1' y1='538.1' x2='491.0' y2='551.8' stroke='#a6a6a6' stroke-width='2.3'/><line x1='514.8' y1='538.1' x2='506.9' y2='551.8' stroke='#a6a6a6' stroke-width='2.3'/><line x1='348.1' y1='551.8' x2='364.0' y2='551.8' stroke='#a6a6a6' stroke-width='2.3'/><line x1='348.1' y1='551.8' x2='340.2' y2='565.5' stroke='#a6a6a6' stroke-width='2.3'/><line x1='364.0' y1='551.8' x2='371.9' y2='565.5' stroke='#a6a6a6' stroke-width='2.3'/><line x1='395.7' y1='551.8' x2='411.6' y2='551.8' stroke='#a6a6a6' stroke-width='2.3'/><line x1='395.7' y1='551.8' x2='387.8' y2='565.5' stroke='#a6a6a6' stroke-width='2.3'/><line x1='411.6' y1='551.8' x2='419.6' y2='565.5' stroke='#a6a6a6' stroke-width='2.3'/><line x1='443.4' y1='551.8' x2='459.3' y2='551.8' stroke='#a6a6a6' stroke-width='2.3'/><line x1='443.4' y1='551.8' x2='435.4' y2='565.5' stroke='#a6a6a6' stroke-width='2.3'/><line x1='459.3' y1='551.8' x2='467.2' y2='565.5' stroke='#a6a6a6' stroke-width='2.3'/><line x1='491.0' y1='551.8' x2='506.9' y2='551.8' stroke='#a6a6a6' stroke-width='2.3'/><line x1='491.0' y1='551.8' x2='483.1' y2='565.5' stroke='#a6a6a6' stroke-width='2.3'/><line x1='506.9' y1='551.8' x2='514.8' y2='565.5' stroke='#a6a6a6' stroke-width='2.3'/><line x1='340.2' y1='565.5' x2='348.1' y2='579.3' stroke='#a6a6a6' stroke-width='2.3'/><line x1='371.9' y1='565.5' x2='387.8' y2='565.5' stroke='#a6a6a6' stroke-width='2.3'/><line x1='371.9' y1='565.5' x2='364.0' y2='579.3' stroke='#a6a6a6' stroke-width='2.3'/><line x1='387.8' y1='565.5' x2='395.7' y2='579.3' stroke='#a6a6a6' stroke-width='2.3'/><line x1='419.6' y1='565.5' x2='435.4' y2='565.5' stroke='#a6a6a6' stroke-width='2.3'/><line x1='419.6' y1='565.5' x2='411.6' y2='579.3' stroke='#a6a6a6' stroke-width='2.3'/><line x1='435.4' y1='565.5' x2='443.4' y2='579.3' stroke='#a6a6a6' stroke-width='2.3'/><line x1='467.2' y1='565.5' x2='483.1' y2='565.5' stroke='#a6a6a6' stroke-width='2.3'/><line x1='467.2' y1='565.5' x2='459.3' y2='579.3' stroke='#a6a6a6' stroke-width='2.3'/><line x1='483.1' y1='565.5' x2='491.0' y2='579.3' stroke='#a6a6a6' stroke-width='2.3'/><line x1='514.8' y1='565.5' x2='506.9' y2='579.3' stroke='#a6a6a6' stroke-width='2.3'/><line x1='348.1' y1='579.3' x2='364.0' y2='579.3' stroke='#a6a6a6' stroke-width='2.3'/><line x1='364.0' y1='579.3' x2='371.9' y2='593.0' stroke='#a6a6a6' stroke-width='2.3'/><line x1='395.7' y1='579.3' x2='411.6' y2='579.3' stroke='#a6a6a6' stroke-width='2.3'/><line x1='395.7' y1='579.3' x2='387.8' y2='593.0' stroke='#a6a6a6' stroke-width='2.3'/><line x1='443.4' y1='579.3' x2='459.3' y2='579.3' stroke='#a6a6a6' stroke-width='2.3'/><line x1='459.3' y1='579.3' x2='467.2' y2='593.0' stroke='#a6a6a6' stroke-width='2.3'/><line x1='491.0' y1='579.3' x2='506.9' y2='579.3' stroke='#a6a6a6' stroke-width='2.3'/><line x1='491.0' y1='579.3' x2='483.1' y2='593.0' stroke='#a6a6a6' stroke-width='2.3'/><line x1='371.9' y1='593.0' x2='387.8' y2='593.0' stroke='#a6a6a6' stroke-width='2.3'/><line x1='371.9' y1='593.0' x2='364.0' y2='606.8' stroke='#a6a6a6' stroke-width='2.3'/><line x1='387.8' y1='593.0' x2='395.7' y2='606.8' stroke='#a6a6a6' stroke-width='2.3'/><line x1='467.2' y1='593.0' x2='483.1' y2='593.0' stroke='#a6a6a6' stroke-width='2.3'/><line x1='467.2' y1='593.0' x2='459.3' y2='606.8' stroke='#a6a6a6' stroke-width='2.3'/><line x1='483.1' y1='593.0' x2='491.0' y2='606.8' stroke='#a6a6a6' stroke-width='2.3'/><line x1='364.0' y1='606.8' x2='371.9' y2='620.5' stroke='#a6a6a6' stroke-width='2.3'/><line x1='395.7' y1='606.8' x2='411.6' y2='606.8' stroke='#a6a6a6' stroke-width='2.3'/><line x1='395.7' y1='606.8' x2='387.8' y2='620.5' stroke='#a6a6a6' stroke-width='2.3'/><line x1='411.6' y1='606.8' x2='419.6' y2='620.5' stroke='#a6a6a6' stroke-width='2.3'/><line x1='443.4' y1='606.8' x2='459.3' y2='606.8' stroke='#a6a6a6' stroke-width='2.3'/><line x1='443.4' y1='606.8' x2='435.4' y2='620.5' stroke='#a6a6a6' stroke-width='2.3'/><line x1='459.3' y1='606.8' x2='467.2' y2='620.5' stroke='#a6a6a6' stroke-width='2.3'/><line x1='491.0' y1='606.8' x2='483.1' y2='620.5' stroke='#a6a6a6' stroke-width='2.3'/><line x1='371.9' y1='620.5' x2='387.8' y2='620.5' stroke='#a6a6a6' stroke-width='2.3'/><line x1='387.8' y1='620.5' x2='395.7' y2='634.3' stroke='#a6a6a6' stroke-width='2.3'/><line x1='419.6' y1='620.5' x2='435.4' y2='620.5' stroke='#a6a6a6' stroke-width='2.3'/><line x1='419.6' y1='620.5' x2='411.6' y2='634.3' stroke='#a6a6a6' stroke-width='2.3'/><line x1='435.4' y1='620.5' x2='443.4' y2='634.3' stroke='#a6a6a6' stroke-width='2.3'/><line x1='467.2' y1='620.5' x2='483.1' y2='620.5' stroke='#a6a6a6' stroke-width='2.3'/><line x1='467.2' y1='620.5' x2='459.3' y2='634.3' stroke='#a6a6a6' stroke-width='2.3'/><line x1='395.7' y1='634.3' x2='411.6' y2='634.3' stroke='#a6a6a6' stroke-width='2.3'/><line x1='443.4' y1='634.3' x2='459.3' y2='634.3' stroke='#a6a6a6' stroke-width='2.3'/><circle cx='395.7' cy='469.3' r='3.9' fill='url(#cg)'/><circle cx='411.6' cy='469.3' r='3.9' fill='url(#cg)'/><circle cx='443.4' cy='469.3' r='3.9' fill='url(#cg)'/><circle cx='459.3' cy='469.3' r='3.9' fill='url(#cg)'/><circle cx='371.9' cy='483.1' r='3.9' fill='url(#cg)'/><circle cx='387.8' cy='483.1' r='3.9' fill='url(#cg)'/><circle cx='419.6' cy='483.1' r='3.9' fill='url(#cg)'/><circle cx='435.4' cy='483.1' r='3.9' fill='url(#cg)'/><circle cx='467.2' cy='483.1' r='3.9' fill='url(#cg)'/><circle cx='483.1' cy='483.1' r='3.9' fill='url(#cg)'/><circle cx='364.0' cy='496.8' r='3.9' fill='url(#cg)'/><circle cx='395.7' cy='496.8' r='3.9' fill='url(#cg)'/><circle cx='411.6' cy='496.8' r='3.9' fill='url(#cg)'/><circle cx='443.4' cy='496.8' r='3.9' fill='url(#cg)'/><circle cx='459.3' cy='496.8' r='3.9' fill='url(#cg)'/><circle cx='491.0' cy='496.8' r='3.9' fill='url(#cg)'/><circle cx='371.9' cy='510.6' r='3.9' fill='url(#cg)'/><circle cx='387.8' cy='510.6' r='3.9' fill='url(#cg)'/><circle cx='419.6' cy='510.6' r='3.9' fill='url(#cg)'/><circle cx='435.4' cy='510.6' r='3.9' fill='url(#cg)'/><circle cx='467.2' cy='510.6' r='3.9' fill='url(#cg)'/><circle cx='483.1' cy='510.6' r='3.9' fill='url(#cg)'/><circle cx='348.1' cy='524.3' r='3.9' fill='url(#cg)'/><circle cx='364.0' cy='524.3' r='3.9' fill='url(#cg)'/><circle cx='411.6' cy='524.3' r='3.9' fill='url(#cg)'/><circle cx='443.4' cy='524.3' r='3.9' fill='url(#cg)'/><circle cx='491.0' cy='524.3' r='3.9' fill='url(#cg)'/><circle cx='506.9' cy='524.3' r='3.9' fill='url(#cg)'/><circle cx='340.2' cy='538.1' r='3.9' fill='url(#cg)'/><circle cx='371.9' cy='538.1' r='3.9' fill='url(#cg)'/><circle cx='419.6' cy='538.1' r='3.9' fill='url(#cg)'/><circle cx='435.4' cy='538.1' r='3.9' fill='url(#cg)'/><circle cx='483.1' cy='538.1' r='3.9' fill='url(#cg)'/><circle cx='514.8' cy='538.1' r='3.9' fill='url(#cg)'/><circle cx='348.1' cy='551.8' r='3.9' fill='url(#cg)'/><circle cx='364.0' cy='551.8' r='3.9' fill='url(#cg)'/><circle cx='395.7' cy='551.8' r='3.9' fill='url(#cg)'/><circle cx='411.6' cy='551.8' r='3.9' fill='url(#cg)'/><circle cx='443.4' cy='551.8' r='3.9' fill='url(#cg)'/><circle cx='459.3' cy='551.8' r='3.9' fill='url(#cg)'/><circle cx='491.0' cy='551.8' r='3.9' fill='url(#cg)'/><circle cx='506.9' cy='551.8' r='3.9' fill='url(#cg)'/><circle cx='340.2' cy='565.5' r='3.9' fill='url(#cg)'/><circle cx='371.9' cy='565.5' r='3.9' fill='url(#cg)'/><circle cx='387.8' cy='565.5' r='3.9' fill='url(#cg)'/><circle cx='419.6' cy='565.5' r='3.9' fill='url(#cg)'/><circle cx='435.4' cy='565.5' r='3.9' fill='url(#cg)'/><circle cx='467.2' cy='565.5' r='3.9' fill='url(#cg)'/><circle cx='483.1' cy='565.5' r='3.9' fill='url(#cg)'/><circle cx='514.8' cy='565.5' r='3.9' fill='url(#cg)'/><circle cx='348.1' cy='579.3' r='3.9' fill='url(#cg)'/><circle cx='364.0' cy='579.3' r='3.9' fill='url(#cg)'/><circle cx='395.7' cy='579.3' r='3.9' fill='url(#cg)'/><circle cx='411.6' cy='579.3' r='3.9' fill='url(#cg)'/><circle cx='443.4' cy='579.3' r='3.9' fill='url(#cg)'/><circle cx='459.3' cy='579.3' r='3.9' fill='url(#cg)'/><circle cx='491.0' cy='579.3' r='3.9' fill='url(#cg)'/><circle cx='506.9' cy='579.3' r='3.9' fill='url(#cg)'/><circle cx='371.9' cy='593.0' r='3.9' fill='url(#cg)'/><circle cx='387.8' cy='593.0' r='3.9' fill='url(#cg)'/><circle cx='467.2' cy='593.0' r='3.9' fill='url(#cg)'/><circle cx='483.1' cy='593.0' r='3.9' fill='url(#cg)'/><circle cx='364.0' cy='606.8' r='3.9' fill='url(#cg)'/><circle cx='395.7' cy='606.8' r='3.9' fill='url(#cg)'/><circle cx='411.6' cy='606.8' r='3.9' fill='url(#cg)'/><circle cx='443.4' cy='606.8' r='3.9' fill='url(#cg)'/><circle cx='459.3' cy='606.8' r='3.9' fill='url(#cg)'/><circle cx='491.0' cy='606.8' r='3.9' fill='url(#cg)'/><circle cx='371.9' cy='620.5' r='3.9' fill='url(#cg)'/><circle cx='387.8' cy='620.5' r='3.9' fill='url(#cg)'/><circle cx='419.6' cy='620.5' r='3.9' fill='url(#cg)'/><circle cx='435.4' cy='620.5' r='3.9' fill='url(#cg)'/><circle cx='467.2' cy='620.5' r='3.9' fill='url(#cg)'/><circle cx='483.1' cy='620.5' r='3.9' fill='url(#cg)'/><circle cx='395.7' cy='634.3' r='3.9' fill='url(#cg)'/><circle cx='411.6' cy='634.3' r='3.9' fill='url(#cg)'/><circle cx='443.4' cy='634.3' r='3.9' fill='url(#cg)'/><circle cx='459.3' cy='634.3' r='3.9' fill='url(#cg)'/><circle cx='390.3' cy='460.0' r='4.4' fill='url(#hg)'/><circle cx='417.0' cy='460.0' r='4.4' fill='url(#hg)'/><circle cx='438.0' cy='460.0' r='4.4' fill='url(#hg)'/><circle cx='464.7' cy='460.0' r='4.4' fill='url(#hg)'/><circle cx='366.5' cy='473.7' r='4.4' fill='url(#hg)'/><circle cx='488.5' cy='473.7' r='4.4' fill='url(#hg)'/><circle cx='353.2' cy='496.8' r='4.4' fill='url(#hg)'/><circle cx='501.8' cy='496.8' r='4.4' fill='url(#hg)'/><circle cx='393.2' cy='519.9' r='4.4' fill='url(#hg)'/><circle cx='461.8' cy='519.9' r='4.4' fill='url(#hg)'/><circle cx='342.7' cy='515.0' r='4.4' fill='url(#hg)'/><circle cx='400.8' cy='524.3' r='4.4' fill='url(#hg)'/><circle cx='454.2' cy='524.3' r='4.4' fill='url(#hg)'/><circle cx='512.3' cy='515.0' r='4.4' fill='url(#hg)'/><circle cx='329.4' cy='538.1' r='4.4' fill='url(#hg)'/><circle cx='382.7' cy='538.1' r='4.4' fill='url(#hg)'/><circle cx='472.3' cy='538.1' r='4.4' fill='url(#hg)'/><circle cx='525.6' cy='538.1' r='4.4' fill='url(#hg)'/><circle cx='390.3' cy='542.5' r='4.4' fill='url(#hg)'/><circle cx='464.7' cy='542.5' r='4.4' fill='url(#hg)'/><circle cx='329.4' cy='565.5' r='4.4' fill='url(#hg)'/><circle cx='525.6' cy='565.5' r='4.4' fill='url(#hg)'/><circle cx='342.7' cy='588.6' r='4.4' fill='url(#hg)'/><circle cx='417.0' cy='588.6' r='4.4' fill='url(#hg)'/><circle cx='438.0' cy='588.6' r='4.4' fill='url(#hg)'/><circle cx='512.3' cy='588.6' r='4.4' fill='url(#hg)'/><circle cx='353.2' cy='606.8' r='4.4' fill='url(#hg)'/><circle cx='417.0' cy='597.4' r='4.4' fill='url(#hg)'/><circle cx='438.0' cy='597.4' r='4.4' fill='url(#hg)'/><circle cx='501.8' cy='606.8' r='4.4' fill='url(#hg)'/><circle cx='366.5' cy='629.9' r='4.4' fill='url(#hg)'/><circle cx='488.5' cy='629.9' r='4.4' fill='url(#hg)'/><circle cx='390.3' cy='643.6' r='4.4' fill='url(#hg)'/><circle cx='417.0' cy='643.6' r='4.4' fill='url(#hg)'/><circle cx='438.0' cy='643.6' r='4.4' fill='url(#hg)'/><circle cx='464.7' cy='643.6' r='4.4' fill='url(#hg)'/></svg><div class=t style='top:718px;font-size:13px;color:#111;right:1617px;'>cell x</div><div class=r style='left:118px;top:711px;width:212px;height:28px;background:#fff;border:1px solid #9e9e9e;box-sizing:border-box;'></div><div class=t style='top:718px;font-size:13px;color:#333;left:126px;'>41.271984</div><div class=t style='top:750px;font-size:13px;color:#111;right:1617px;'>cell y</div><div class=r style='left:118px;top:743px;width:212px;height:28px;background:#fff;border:1px solid #9e9e9e;box-sizing:border-box;'></div><div class=t style='top:750px;font-size:13px;color:#333;left:126px;'>40.848671</div><div class=t style='top:782px;font-size:13px;color:#111;right:1617px;'>cell z</div><div class=r style='left:118px;top:775px;width:212px;height:28px;background:#fff;border:1px solid #9e9e9e;box-sizing:border-box;'></div><div class=t style='top:782px;font-size:13px;color:#333;left:126px;'>48.118239</div><div class=t style='top:830px;font-size:26px;font-weight:700;color:#000;left:27px;'>Select computer and codes</div><div class=t style='top:878px;font-size:13px;color:#111;right:1617px;'>Computer</div><div class=r style='left:118px;top:872px;width:212px;height:27px;background:#fff;border:1px solid #9e9e9e;box-sizing:border-box;'></div><div class=t style='top:879px;font-size:13px;color:#333;left:126px;'>daint-s746-snx3000</div><svg class=r style='left:312.25px;top:880.45px' width='13.5' height='9.5'><polyline points='2,2 6.75,7.5 11.5,2' fill='none' stroke='#111' stroke-width='2' stroke-linecap='round' stroke-linejoin='round'/></svg><div class=t style='top:922px;font-size:13px;color:#111;right:1617px;'>Cp2k code</div><div class=r style='left:118px;top:914px;width:212px;height:27px;background:#fff;border:1px solid #9e9e9e;box-sizing:border-box;'></div><div class=t style='top:921px;font-size:13px;color:#333;left:126px;'>cp2k_6.1_18464</div><svg class=r style='left:312.25px;top:922.45px' width='13.5' height='9.5'><polyline points='2,2 6.75,7.5 11.5,2' fill='none' stroke='#111' stroke-width='2' stroke-linecap='round' stroke-linejoin='round'/></svg><div class=t style='top:964px;font-size:13px;color:#111;right:1617px;'>STM code</div><div class=r style='left:118px;top:958px;width:212px;height:27px;background:#fff;border:1px solid #9e9e9e;box-sizing:border-box;'></div><div class=t style='top:965px;font-size:13px;color:#333;left:126px;'>py_stm_4ad1887</div><svg class=r style='left:312.25px;top:966.45px' width='13.5' height='9.5'><polyline points='2,2 6.75,7.5 11.5,2' fill='none' stroke='#111' stroke-width='2' stroke-linecap='round' stroke-linejoin='round'/></svg><svg class=r style='left:118px;top:1005px' width='12' height='12'><rect x='0.5' y='0.5' width='11' height='11' rx='2' fill='#e6e6e6' stroke='#a4a4a4'/><polyline points='2.6,6.2 4.8,8.8 9.6,3.2' fill='none' stroke='#444' stroke-width='2.3'/></svg><div class=t style='top:1007px;font-size:13px;color:#111;left:139px;'>use ELPA</div><div class=t style='top:720px;font-size:26px;font-weight:700;color:#000;left:401px;'>Scanning tunnelling microscopy</div><div class=t style='top:767px;font-size:13px;color:#111;right:1183px;'>Emin, Emax (eV):</div><div class=r style='left:558px;top:772px;width:162px;height:4px;background:#bdbdbd;'></div><div class=r style='left:600px;top:770px;width:80px;height:8px;background:#2196f3;'></div><svg class=r style='left:591.5px;top:765.5px' width='17' height='17'><circle cx='8.5' cy='8.5' r='7.5' fill='#fff' stroke='#8c8c8c' stroke-width='1'/></svg><svg class=r style='left:671.5px;top:765.5px' width='17' height='17'><circle cx='8.5' cy='8.5' r='7.5' fill='#fff' stroke='#8c8c8c' stroke-width='1'/></svg><div class=t style='top:767px;font-size:13px;color:#111;left:739px;'>-2.0 – 2.0</div><div class=t style='top:811px;font-size:13px;color:#111;right:1182px;'>Const. H (ang)</div><div class=r style='left:552px;top:804px;width:250px;height:28px;background:#fff;border:1px solid #9e9e9e;box-sizing:border-box;'></div><div class=t style='top:811px;font-size:13px;color:#333;left:560px;'>3.0 5.0</div><div class=t style='top:854px;font-size:13px;color:#111;right:1182px;'>Const. cur. (isoval)</div><div class=r style='left:552px;top:847px;width:250px;height:28px;background:#fff;border:1px solid #9e9e9e;box-sizing:border-box;'></div><div class=t style='top:854px;font-size:13px;color:#333;left:560px;'>1e-8 1e-7 1e-6</div><div class=t style='top:897px;font-size:13px;color:#111;right:1182px;'>Extrap plane (ang)</div><div class=r style='left:552px;top:890px;width:51px;height:28px;background:#fff;border:1px solid #9e9e9e;box-sizing:border-box;'></div><div class=t style='top:897px;font-size:13px;color:#333;left:560px;'>3</div><div class=t style='top:940px;font-size:13px;color:#111;right:1182px;'>dE (eV)</div><div class=r style='left:552px;top:933px;width:51px;height:28px;background:#fff;border:1px solid #9e9e9e;box-sizing:border-box;'></div><div class=t style='top:940px;font-size:13px;color:#333;left:560px;'>0.0</div><div class=t style='top:983px;font-size:13px;color:#111;right:1182px;'>FWHM (eV)</div><div class=r style='left:552px;top:976px;width:51px;height:28px;background:#fff;border:1px solid #9e9e9e;box-sizing:border-box;'></div><div class=t style='top:983px;font-size:13px;color:#333;left:560px;'>0.1</div><div class=r style='left:404px;top:1020px;width:148px;height:28px;background:#eeeeee;'></div><div class=t style='left:404px;width:148px;text-align:center;top:1027px;font-size:13px;color:#333'>Submit</div><div class=t style='top:9px;font-size:36px;color:#000;left:875px;letter-spacing:1.5px;'>b)</div><div class=t style='top:23px;font-size:13px;color:#111;right:773px;'>pk</div><div class=r style='left:961px;top:16px;width:110px;height:28px;background:#fff;border:1px solid #9e9e9e;box-sizing:border-box;'></div><div class=t style='top:23px;font-size:13px;color:#333;left:969px;'>32183</div><div class=r style='left:903px;top:48px;width:168px;height:28px;background:#eeeeee;'></div><div class=t style='left:903px;width:168px;text-align:center;top:55px;font-size:13px;color:#333'>Load pk</div><div class=r style='left:1134px;top:11px;width:553px;height:107px;border:1px solid #1a1a1a;box-sizing:border-box;'></div><div class=r style='left:1134.5px;top:11.5px;width:552.0px;height:106.0px;border:1px solid rgba(0,0,0,0.35);box-sizing:border-box;'></div><div class=r style='left:1288px;top:12px;width:1px;height:105px;background:#7a7a7a;'></div><div class=r style='left:1597px;top:12px;width:1px;height:105px;background:#7a7a7a;'></div><div class=r style='left:1136px;top:50px;width:461px;height:1px;background:#7a7a7a;'></div><div class=t style='top:24px;font-size:13px;font-weight:700;color:#000;left:1141px;'>Structure description:</div><div class=t style='top:63px;font-size:13px;font-weight:700;color:#000;left:1141px;'>Calculation</div><div class=t style='top:91px;font-size:13px;font-weight:700;color:#000;left:1141px;'>description:</div><div class=t style='top:24px;font-size:13px;color:#000;left:1289px;'>upload(C78H36)_nacho_propeller_fused.slab(14,8,4)</div><div class=t style='top:76px;font-size:13px;color:#000;left:1289px;'>Nacho fused propeller geo opt</div><svg class=r style='left:1600px;top:21.5px' width='84' height='84.5' viewBox='1600 21.5 84 84.5'><defs><radialGradient id='au2' cx='0.5' cy='0.5' r='0.5' fx='0.55' fy='0.5'><stop offset='0' stop-color='#ffd52a'/><stop offset='0.6' stop-color='#f7c81e'/><stop offset='1' stop-color='#a88410'/></radialGradient></defs><rect x='1601' y='23' width='82' height='82' rx='3' fill='#c9a014'/><circle cx='1605.5' cy='24.5' r='3.0' fill='url(#au2)'/><circle cx='1611.2' cy='24.5' r='3.0' fill='url(#au2)'/><circle cx='1616.8' cy='24.5' r='3.0' fill='url(#au2)'/><circle cx='1622.5' cy='24.5' r='3.0' fill='url(#au2)'/><circle cx='1628.1' cy='24.5' r='3.0' fill='url(#au2)'/><circle cx='1633.8' cy='24.5' r='3.0' fill='url(#au2)'/><circle cx='1639.4' cy='24.5' r='3.0' fill='url(#au2)'/><circle cx='1645.0' cy='24.5' r='3.0' fill='url(#au2)'/><circle cx='1650.7' cy='24.5' r='3.0' fill='url(#au2)'/><circle cx='1656.3' cy='24.5' r='3.0' fill='url(#au2)'/><circle cx='1662.0' cy='24.5' r='3.0' fill='url(#au2)'/><circle cx='1667.7' cy='24.5' r='3.0' fill='url(#au2)'/><circle cx='1673.3' cy='24.5' r='3.0' fill='url(#au2)'/><circle cx='1679.0' cy='24.5' r='3.0' fill='url(#au2)'/><circle cx='1602.7' cy='29.4' r='3.0' fill='url(#au2)'/><circle cx='1608.4' cy='29.4' r='3.0' fill='url(#au2)'/><circle cx='1614.0' cy='29.4' r='3.0' fill='url(#au2)'/><circle cx='1619.7' cy='29.4' r='3.0' fill='url(#au2)'/><circle cx='1625.3' cy='29.4' r='3.0' fill='url(#au2)'/><circle cx='1631.0' cy='29.4' r='3.0' fill='url(#au2)'/><circle cx='1636.6' cy='29.4' r='3.0' fill='url(#au2)'/><circle cx='1642.2' cy='29.4' r='3.0' fill='url(#au2)'/><circle cx='1647.9' cy='29.4' r='3.0' fill='url(#au2)'/><circle cx='1653.5' cy='29.4' r='3.0' fill='url(#au2)'/><circle cx='1659.2' cy='29.4' r='3.0' fill='url(#au2)'/><circle cx='1664.9' cy='29.4' r='3.0' fill='url(#au2)'/><circle cx='1670.5' cy='29.4' r='3.0' fill='url(#au2)'/><circle cx='1676.2' cy='29.4' r='3.0' fill='url(#au2)'/><circle cx='1681.8' cy='29.4' r='3.0' fill='url(#au2)'/><circle cx='1605.5' cy='34.3' r='3.0' fill='url(#au2)'/><circle cx='1611.2' cy='34.3' r='3.0' fill='url(#au2)'/><circle cx='1616.8' cy='34.3' r='3.0' fill='url(#au2)'/><circle cx='1622.5' cy='34.3' r='3.0' fill='url(#au2)'/><circle cx='1628.1' cy='34.3' r='3.0' fill='url(#au2)'/><circle cx='1633.8' cy='34.3' r='3.0' fill='url(#au2)'/><circle cx='1639.4' cy='34.3' r='3.0' fill='url(#au2)'/><circle cx='1645.0' cy='34.3' r='3.0' fill='url(#au2)'/><circle cx='1650.7' cy='34.3' r='3.0' fill='url(#au2)'/><circle cx='1656.3' cy='34.3' r='3.0' fill='url(#au2)'/><circle cx='1662.0' cy='34.3' r='3.0' fill='url(#au2)'/><circle cx='1667.7' cy='34.3' r='3.0' fill='url(#au2)'/><circle cx='1673.3' cy='34.3' r='3.0' fill='url(#au2)'/><circle cx='1679.0' cy='34.3' r='3.0' fill='url(#au2)'/><circle cx='1602.7' cy='39.2' r='3.0' fill='url(#au2)'/><circle cx='1608.4' cy='39.2' r='3.0' fill='url(#au2)'/><circle cx='1614.0' cy='39.2' r='3.0' fill='url(#au2)'/><circle cx='1619.7' cy='39.2' r='3.0' fill='url(#au2)'/><circle cx='1625.3' cy='39.2' r='3.0' fill='url(#au2)'/><circle cx='1631.0' cy='39.2' r='3.0' fill='url(#au2)'/><circle cx='1636.6' cy='39.2' r='3.0' fill='url(#au2)'/><circle cx='1642.2' cy='39.2' r='3.0' fill='url(#au2)'/><circle cx='1647.9' cy='39.2' r='3.0' fill='url(#au2)'/><circle cx='1653.5' cy='39.2' r='3.0' fill='url(#au2)'/><circle cx='1659.2' cy='39.2' r='3.0' fill='url(#au2)'/><circle cx='1664.9' cy='39.2' r='3.0' fill='url(#au2)'/><circle cx='1670.5' cy='39.2' r='3.0' fill='url(#au2)'/><circle cx='1676.2' cy='39.2' r='3.0' fill='url(#au2)'/><circle cx='1681.8' cy='39.2' r='3.0' fill='url(#au2)'/><circle cx='1605.5' cy='44.1' r='3.0' fill='url(#au2)'/><circle cx='1611.2' cy='44.1' r='3.0' fill='url(#au2)'/><circle cx='1616.8' cy='44.1' r='3.0' fill='url(#au2)'/><circle cx='1622.5' cy='44.1' r='3.0' fill='url(#au2)'/><circle cx='1628.1' cy='44.1' r='3.0' fill='url(#au2)'/><circle cx='1633.8' cy='44.1' r='3.0' fill='url(#au2)'/><circle cx='1639.4' cy='44.1' r='3.0' fill='url(#au2)'/><circle cx='1645.0' cy='44.1' r='3.0' fill='url(#au2)'/><circle cx='1650.7' cy='44.1' r='3.0' fill='url(#au2)'/><circle cx='1656.3' cy='44.1' r='3.0' fill='url(#au2)'/><circle cx='1662.0' cy='44.1' r='3.0' fill='url(#au2)'/><circle cx='1667.7' cy='44.1' r='3.0' fill='url(#au2)'/><circle cx='1673.3' cy='44.1' r='3.0' fill='url(#au2)'/><circle cx='1679.0' cy='44.1' r='3.0' fill='url(#au2)'/><circle cx='1602.7' cy='49.0' r='3.0' fill='url(#au2)'/><circle cx='1608.4' cy='49.0' r='3.0' fill='url(#au2)'/><circle cx='1614.0' cy='49.0' r='3.0' fill='url(#au2)'/><circle cx='1619.7' cy='49.0' r='3.0' fill='url(#au2)'/><circle cx='1625.3' cy='49.0' r='3.0' fill='url(#au2)'/><circle cx='1631.0' cy='49.0' r='3.0' fill='url(#au2)'/><circle cx='1636.6' cy='49.0' r='3.0' fill='url(#au2)'/><circle cx='1642.2' cy='49.0' r='3.0' fill='url(#au2)'/><circle cx='1647.9' cy='49.0' r='3.0' fill='url(#au2)'/><circle cx='1653.5' cy='49.0' r='3.0' fill='url(#au2)'/><circle cx='1659.2' cy='49.0' r='3.0' fill='url(#au2)'/><circle cx='1664.9' cy='49.0' r='3.0' fill='url(#au2)'/><circle cx='1670.5' cy='49.0' r='3.0' fill='url(#au2)'/><circle cx='1676.2' cy='49.0' r='3.0' fill='url(#au2)'/><circle cx='1681.8' cy='49.0' r='3.0' fill='url(#au2)'/><circle cx='1605.5' cy='53.9' r='3.0' fill='url(#au2)'/><circle cx='1611.2' cy='53.9' r='3.0' fill='url(#au2)'/><circle cx='1616.8' cy='53.9' r='3.0' fill='url(#au2)'/><circle cx='1622.5' cy='53.9' r='3.0' fill='url(#au2)'/><circle cx='1628.1' cy='53.9' r='3.0' fill='url(#au2)'/><circle cx='1633.8' cy='53.9' r='3.0' fill='url(#au2)'/><circle cx='1639.4' cy='53.9' r='3.0' fill='url(#au2)'/><circle cx='1645.0' cy='53.9' r='3.0' fill='url(#au2)'/><circle cx='1650.7' cy='53.9' r='3.0' fill='url(#au2)'/><circle cx='1656.3' cy='53.9' r='3.0' fill='url(#au2)'/><circle cx='1662.0' cy='53.9' r='3.0' fill='url(#au2)'/><circle cx='1667.7' cy='53.9' r='3.0' fill='url(#au2)'/><circle cx='1673.3' cy='53.9' r='3.0' fill='url(#au2)'/><circle cx='1679.0' cy='53.9' r='3.0' fill='url(#au2)'/><circle cx='1602.7' cy='58.8' r='3.0' fill='url(#au2)'/><circle cx='1608.4' cy='58.8' r='3.0' fill='url(#au2)'/><circle cx='1614.0' cy='58.8' r='3.0' fill='url(#au2)'/><circle cx='1619.7' cy='58.8' r='3.0' fill='url(#au2)'/><circle cx='1625.3' cy='58.8' r='3.0' fill='url(#au2)'/><circle cx='1631.0' cy='58.8' r='3.0' fill='url(#au2)'/><circle cx='1636.6' cy='58.8' r='3.0' fill='url(#au2)'/><circle cx='1642.2' cy='58.8' r='3.0' fill='url(#au2)'/><circle cx='1647.9' cy='58.8' r='3.0' fill='url(#au2)'/><circle cx='1653.5' cy='58.8' r='3.0' fill='url(#au2)'/><circle cx='1659.2' cy='58.8' r='3.0' fill='url(#au2)'/><circle cx='1664.9' cy='58.8' r='3.0' fill='url(#au2)'/><circle cx='1670.5' cy='58.8' r='3.0' fill='url(#au2)'/><circle cx='1676.2' cy='58.8' r='3.0' fill='url(#au2)'/><circle cx='1681.8' cy='58.8' r='3.0' fill='url(#au2)'/><circle cx='1605.5' cy='63.7' r='3.0' fill='url(#au2)'/><circle cx='1611.2' cy='63.7' r='3.0' fill='url(#au2)'/><circle cx='1616.8' cy='63.7' r='3.0' fill='url(#au2)'/><circle cx='1622.5' cy='63.7' r='3.0' fill='url(#au2)'/><circle cx='1628.1' cy='63.7' r='3.0' fill='url(#au2)'/><circle cx='1633.8' cy='63.7' r='3.0' fill='url(#au2)'/><circle cx='1639.4' cy='63.7' r='3.0' fill='url(#au2)'/><circle cx='1645.0' cy='63.7' r='3.0' fill='url(#au2)'/><circle cx='1650.7' cy='63.7' r='3.0' fill='url(#au2)'/><circle cx='1656.3' cy='63.7' r='3.0' fill='url(#au2)'/><circle cx='1662.0' cy='63.7' r='3.0' fill='url(#au2)'/><circle cx='1667.7' cy='63.7' r='3.0' fill='url(#au2)'/><circle cx='1673.3' cy='63.7' r='3.0' fill='url(#au2)'/><circle cx='1679.0' cy='63.7' r='3.0' fill='url(#au2)'/><circle cx='1602.7' cy='68.6' r='3.0' fill='url(#au2)'/><circle cx='1608.4' cy='68.6' r='3.0' fill='url(#au2)'/><circle cx='1614.0' cy='68.6' r='3.0' fill='url(#au2)'/><circle cx='1619.7' cy='68.6' r='3.0' fill='url(#au2)'/><circle cx='1625.3' cy='68.6' r='3.0' fill='url(#au2)'/><circle cx='1631.0' cy='68.6' r='3.0' fill='url(#au2)'/><circle cx='1636.6' cy='68.6' r='3.0' fill='url(#au2)'/><circle cx='1642.2' cy='68.6' r='3.0' fill='url(#au2)'/><circle cx='1647.9' cy='68.6' r='3.0' fill='url(#au2)'/><circle cx='1653.5' cy='68.6' r='3.0' fill='url(#au2)'/><circle cx='1659.2' cy='68.6' r='3.0' fill='url(#au2)'/><circle cx='1664.9' cy='68.6' r='3.0' fill='url(#au2)'/><circle cx='1670.5' cy='68.6' r='3.0' fill='url(#au2)'/><circle cx='1676.2' cy='68.6' r='3.0' fill='url(#au2)'/><circle cx='1681.8' cy='68.6' r='3.0' fill='url(#au2)'/><circle cx='1605.5' cy='73.5' r='3.0' fill='url(#au2)'/><circle cx='1611.2' cy='73.5' r='3.0' fill='url(#au2)'/><circle cx='1616.8' cy='73.5' r='3.0' fill='url(#au2)'/><circle cx='1622.5' cy='73.5' r='3.0' fill='url(#au2)'/><circle cx='1628.1' cy='73.5' r='3.0' fill='url(#au2)'/><circle cx='1633.8' cy='73.5' r='3.0' fill='url(#au2)'/><circle cx='1639.4' cy='73.5' r='3.0' fill='url(#au2)'/><circle cx='1645.0' cy='73.5' r='3.0' fill='url(#au2)'/><circle cx='1650.7' cy='73.5' r='3.0' fill='url(#au2)'/><circle cx='1656.3' cy='73.5' r='3.0' fill='url(#au2)'/><circle cx='1662.0' cy='73.5' r='3.0' fill='url(#au2)'/><circle cx='1667.7' cy='73.5' r='3.0' fill='url(#au2)'/><circle cx='1673.3' cy='73.5' r='3.0' fill='url(#au2)'/><circle cx='1679.0' cy='73.5' r='3.0' fill='url(#au2)'/><circle cx='1602.7' cy='78.4' r='3.0' fill='url(#au2)'/><circle cx='1608.4' cy='78.4' r='3.0' fill='url(#au2)'/><circle cx='1614.0' cy='78.4' r='3.0' fill='url(#au2)'/><circle cx='1619.7' cy='78.4' r='3.0' fill='url(#au2)'/><circle cx='1625.3' cy='78.4' r='3.0' fill='url(#au2)'/><circle cx='1631.0' cy='78.4' r='3.0' fill='url(#au2)'/><circle cx='1636.6' cy='78.4' r='3.0' fill='url(#au2)'/><circle cx='1642.2' cy='78.4' r='3.0' fill='url(#au2)'/><circle cx='1647.9' cy='78.4' r='3.0' fill='url(#au2)'/><circle cx='1653.5' cy='78.4' r='3.0' fill='url(#au2)'/><circle cx='1659.2' cy='78.4' r='3.0' fill='url(#au2)'/><circle cx='1664.9' cy='78.4' r='3.0' fill='url(#au2)'/><circle cx='1670.5' cy='78.4' r='3.0' fill='url(#au2)'/><circle cx='1676.2' cy='78.4' r='3.0' fill='url(#au2)'/><circle cx='1681.8' cy='78.4' r='3.0' fill='url(#au2)'/><circle cx='1605.5' cy='83.3' r='3.0' fill='url(#au2)'/><circle cx='1611.2' cy='83.3' r='3.0' fill='url(#au2)'/><circle cx='1616.8' cy='83.3' r='3.0' fill='url(#au2)'/><circle cx='1622.5' cy='83.3' r='3.0' fill='url(#au2)'/><circle cx='1628.1' cy='83.3' r='3.0' fill='url(#au2)'/><circle cx='1633.8' cy='83.3' r='3.0' fill='url(#au2)'/><circle cx='1639.4' cy='83.3' r='3.0' fill='url(#au2)'/><circle cx='1645.0' cy='83.3' r='3.0' fill='url(#au2)'/><circle cx='1650.7' cy='83.3' r='3.0' fill='url(#au2)'/><circle cx='1656.3' cy='83.3' r='3.0' fill='url(#au2)'/><circle cx='1662.0' cy='83.3' r='3.0' fill='url(#au2)'/><circle cx='1667.7' cy='83.3' r='3.0' fill='url(#au2)'/><circle cx='1673.3' cy='83.3' r='3.0' fill='url(#au2)'/><circle cx='1679.0' cy='83.3' r='3.0' fill='url(#au2)'/><circle cx='1602.7' cy='88.2' r='3.0' fill='url(#au2)'/><circle cx='1608.4' cy='88.2' r='3.0' fill='url(#au2)'/><circle cx='1614.0' cy='88.2' r='3.0' fill='url(#au2)'/><circle cx='1619.7' cy='88.2' r='3.0' fill='url(#au2)'/><circle cx='1625.3' cy='88.2' r='3.0' fill='url(#au2)'/><circle cx='1631.0' cy='88.2' r='3.0' fill='url(#au2)'/><circle cx='1636.6' cy='88.2' r='3.0' fill='url(#au2)'/><circle cx='1642.2' cy='88.2' r='3.0' fill='url(#au2)'/><circle cx='1647.9' cy='88.2' r='3.0' fill='url(#au2)'/><circle cx='1653.5' cy='88.2' r='3.0' fill='url(#au2)'/><circle cx='1659.2' cy='88.2' r='3.0' fill='url(#au2)'/><circle cx='1664.9' cy='88.2' r='3.0' fill='url(#au2)'/><circle cx='1670.5' cy='88.2' r='3.0' fill='url(#au2)'/><circle cx='1676.2' cy='88.2' r='3.0' fill='url(#au2)'/><circle cx='1681.8' cy='88.2' r='3.0' fill='url(#au2)'/><circle cx='1605.5' cy='93.1' r='3.0' fill='url(#au2)'/><circle cx='1611.2' cy='93.1' r='3.0' fill='url(#au2)'/><circle cx='1616.8' cy='93.1' r='3.0' fill='url(#au2)'/><circle cx='1622.5' cy='93.1' r='3.0' fill='url(#au2)'/><circle cx='1628.1' cy='93.1' r='3.0' fill='url(#au2)'/><circle cx='1633.8' cy='93.1' r='3.0' fill='url(#au2)'/><circle cx='1639.4' cy='93.1' r='3.0' fill='url(#au2)'/><circle cx='1645.0' cy='93.1' r='3.0' fill='url(#au2)'/><circle cx='1650.7' cy='93.1' r='3.0' fill='url(#au2)'/><circle cx='1656.3' cy='93.1' r='3.0' fill='url(#au2)'/><circle cx='1662.0' cy='93.1' r='3.0' fill='url(#au2)'/><circle cx='1667.7' cy='93.1' r='3.0' fill='url(#au2)'/><circle cx='1673.3' cy='93.1' r='3.0' fill='url(#au2)'/><circle cx='1679.0' cy='93.1' r='3.0' fill='url(#au2)'/><circle cx='1602.7' cy='98.0' r='3.0' fill='url(#au2)'/><circle cx='1608.4' cy='98.0' r='3.0' fill='url(#au2)'/><circle cx='1614.0' cy='98.0' r='3.0' fill='url(#au2)'/><circle cx='1619.7' cy='98.0' r='3.0' fill='url(#au2)'/><circle cx='1625.3' cy='98.0' r='3.0' fill='url(#au2)'/><circle cx='1631.0' cy='98.0' r='3.0' fill='url(#au2)'/><circle cx='1636.6' cy='98.0' r='3.0' fill='url(#au2)'/><circle cx='1642.2' cy='98.0' r='3.0' fill='url(#au2)'/><circle cx='1647.9' cy='98.0' r='3.0' fill='url(#au2)'/><circle cx='1653.5' cy='98.0' r='3.0' fill='url(#au2)'/><circle cx='1659.2' cy='98.0' r='3.0' fill='url(#au2)'/><circle cx='1664.9' cy='98.0' r='3.0' fill='url(#au2)'/><circle cx='1670.5' cy='98.0' r='3.0' fill='url(#au2)'/><circle cx='1676.2' cy='98.0' r='3.0' fill='url(#au2)'/><circle cx='1681.8' cy='98.0' r='3.0' fill='url(#au2)'/><circle cx='1605.5' cy='102.9' r='3.0' fill='url(#au2)'/><circle cx='1611.2' cy='102.9' r='3.0' fill='url(#au2)'/><circle cx='1616.8' cy='102.9' r='3.0' fill='url(#au2)'/><circle cx='1622.5' cy='102.9' r='3.0' fill='url(#au2)'/><circle cx='1628.1' cy='102.9' r='3.0' fill='url(#au2)'/><circle cx='1633.8' cy='102.9' r='3.0' fill='url(#au2)'/><circle cx='1639.4' cy='102.9' r='3.0' fill='url(#au2)'/><circle cx='1645.0' cy='102.9' r='3.0' fill='url(#au2)'/><circle cx='1650.7' cy='102.9' r='3.0' fill='url(#au2)'/><circle cx='1656.3' cy='102.9' r='3.0' fill='url(#au2)'/><circle cx='1662.0' cy='102.9' r='3.0' fill='url(#au2)'/><circle cx='1667.7' cy='102.9' r='3.0' fill='url(#au2)'/><circle cx='1673.3' cy='102.9' r='3.0' fill='url(#au2)'/><circle cx='1679.0' cy='102.9' r='3.0' fill='url(#au2)'/><line x1='1637.2' y1='47.2' x2='1640.2' y2='47.2' stroke='#838385' stroke-width='2.4'/><line x1='1637.2' y1='47.2' x2='1635.7' y2='49.8' stroke='#838385' stroke-width='2.4'/><line x1='1640.2' y1='47.2' x2='1641.8' y2='49.8' stroke='#838385' stroke-width='2.4'/><line x1='1646.3' y1='47.2' x2='1649.4' y2='47.2' stroke='#838385' stroke-width='2.4'/><line x1='1646.3' y1='47.2' x2='1644.8' y2='49.8' stroke='#838385' stroke-width='2.4'/><line x1='1649.4' y1='47.2' x2='1650.9' y2='49.8' stroke='#838385' stroke-width='2.4'/><line x1='1632.6' y1='49.8' x2='1635.7' y2='49.8' stroke='#838385' stroke-width='2.4'/><line x1='1632.6' y1='49.8' x2='1631.1' y2='52.4' stroke='#838385' stroke-width='2.4'/><line x1='1635.7' y1='49.8' x2='1637.2' y2='52.4' stroke='#838385' stroke-width='2.4'/><line x1='1641.8' y1='49.8' x2='1644.8' y2='49.8' stroke='#838385' stroke-width='2.4'/><line x1='1641.8' y1='49.8' x2='1640.2' y2='52.4' stroke='#838385' stroke-width='2.4'/><line x1='1644.8' y1='49.8' x2='1646.3' y2='52.4' stroke='#838385' stroke-width='2.4'/><line x1='1650.9' y1='49.8' x2='1654.0' y2='49.8' stroke='#838385' stroke-width='2.4'/><line x1='1650.9' y1='49.8' x2='1649.4' y2='52.4' stroke='#838385' stroke-width='2.4'/><line x1='1654.0' y1='49.8' x2='1655.5' y2='52.4' stroke='#838385' stroke-width='2.4'/><line x1='1631.1' y1='52.4' x2='1632.6' y2='55.1' stroke='#838385' stroke-width='2.4'/><line x1='1637.2' y1='52.4' x2='1640.2' y2='52.4' stroke='#838385' stroke-width='2.4'/><line x1='1637.2' y1='52.4' x2='1635.7' y2='55.1' stroke='#838385' stroke-width='2.4'/><line x1='1640.2' y1='52.4' x2='1641.8' y2='55.1' stroke='#838385' stroke-width='2.4'/><line x1='1646.3' y1='52.4' x2='1649.4' y2='52.4' stroke='#838385' stroke-width='2.4'/><line x1='1646.3' y1='52.4' x2='1644.8' y2='55.1' stroke='#838385' stroke-width='2.4'/><line x1='1649.4' y1='52.4' x2='1650.9' y2='55.1' stroke='#838385' stroke-width='2.4'/><line x1='1655.5' y1='52.4' x2='1654.0' y2='55.1' stroke='#838385' stroke-width='2.4'/><line x1='1632.6' y1='55.1' x2='1635.7' y2='55.1' stroke='#838385' stroke-width='2.4'/><line x1='1632.6' y1='55.1' x2='1631.1' y2='57.7' stroke='#838385' stroke-width='2.4'/><line x1='1641.8' y1='55.1' x2='1644.8' y2='55.1' stroke='#838385' stroke-width='2.4'/><line x1='1641.8' y1='55.1' x2='1640.2' y2='57.7' stroke='#838385' stroke-width='2.4'/><line x1='1644.8' y1='55.1' x2='1646.3' y2='57.7' stroke='#838385' stroke-width='2.4'/><line x1='1650.9' y1='55.1' x2='1654.0' y2='55.1' stroke='#838385' stroke-width='2.4'/><line x1='1654.0' y1='55.1' x2='1655.5' y2='57.7' stroke='#838385' stroke-width='2.4'/><line x1='1628.0' y1='57.7' x2='1631.1' y2='57.7' stroke='#838385' stroke-width='2.4'/><line x1='1628.0' y1='57.7' x2='1626.5' y2='60.4' stroke='#838385' stroke-width='2.4'/><line x1='1631.1' y1='57.7' x2='1632.6' y2='60.4' stroke='#838385' stroke-width='2.4'/><line x1='1640.2' y1='57.7' x2='1641.8' y2='60.4' stroke='#838385' stroke-width='2.4'/><line x1='1646.3' y1='57.7' x2='1644.8' y2='60.4' stroke='#838385' stroke-width='2.4'/><line x1='1655.5' y1='57.7' x2='1658.5' y2='57.7' stroke='#838385' stroke-width='2.4'/><line x1='1655.5' y1='57.7' x2='1654.0' y2='60.4' stroke='#838385' stroke-width='2.4'/><line x1='1658.5' y1='57.7' x2='1660.1' y2='60.4' stroke='#838385' stroke-width='2.4'/><line x1='1626.5' y1='60.4' x2='1628.0' y2='63.0' stroke='#838385' stroke-width='2.4'/><line x1='1632.6' y1='60.4' x2='1631.1' y2='63.0' stroke='#838385' stroke-width='2.4'/><line x1='1641.8' y1='60.4' x2='1644.8' y2='60.4' stroke='#838385' stroke-width='2.4'/><line x1='1641.8' y1='60.4' x2='1640.2' y2='63.0' stroke='#838385' stroke-width='2.4'/><line x1='1644.8' y1='60.4' x2='1646.3' y2='63.0' stroke='#838385' stroke-width='2.4'/><line x1='1654.0' y1='60.4' x2='1655.5' y2='63.0' stroke='#838385' stroke-width='2.4'/><line x1='1660.1' y1='60.4' x2='1658.5' y2='63.0' stroke='#838385' stroke-width='2.4'/><line x1='1628.0' y1='63.0' x2='1631.1' y2='63.0' stroke='#838385' stroke-width='2.4'/><line x1='1628.0' y1='63.0' x2='1626.5' y2='65.6' stroke='#838385' stroke-width='2.4'/><line x1='1631.1' y1='63.0' x2='1632.6' y2='65.6' stroke='#838385' stroke-width='2.4'/><line x1='1637.2' y1='63.0' x2='1640.2' y2='63.0' stroke='#838385' stroke-width='2.4'/><line x1='1637.2' y1='63.0' x2='1635.7' y2='65.6' stroke='#838385' stroke-width='2.4'/><line x1='1640.2' y1='63.0' x2='1641.8' y2='65.6' stroke='#838385' stroke-width='2.4'/><line x1='1646.3' y1='63.0' x2='1649.4' y2='63.0' stroke='#838385' stroke-width='2.4'/><line x1='1646.3' y1='63.0' x2='1644.8' y2='65.6' stroke='#838385' stroke-width='2.4'/><line x1='1649.4' y1='63.0' x2='1650.9' y2='65.6' stroke='#838385' stroke-width='2.4'/><line x1='1655.5' y1='63.0' x2='1658.5' y2='63.0' stroke='#838385' stroke-width='2.4'/><line x1='1655.5' y1='63.0' x2='1654.0' y2='65.6' stroke='#838385' stroke-width='2.4'/><line x1='1658.5' y1='63.0' x2='1660.1' y2='65.6' stroke='#838385' stroke-width='2.4'/><line x1='1626.5' y1='65.6' x2='1628.0' y2='68.3' stroke='#838385' stroke-width='2.4'/><line x1='1632.6' y1='65.6' x2='1635.7' y2='65.6' stroke='#838385' stroke-width='2.4'/><line x1='1632.6' y1='65.6' x2='1631.1' y2='68.3' stroke='#838385' stroke-width='2.4'/><line x1='1635.7' y1='65.6' x2='1637.2' y2='68.3' stroke='#838385' stroke-width='2.4'/><line x1='1641.8' y1='65.6' x2='1644.8' y2='65.6' stroke='#838385' stroke-width='2.4'/><line x1='1641.8' y1='65.6' x2='1640.2' y2='68.3' stroke='#838385' stroke-width='2.4'/><line x1='1644.8' y1='65.6' x2='1646.3' y2='68.3' stroke='#838385' stroke-width='2.4'/><line x1='1650.9' y1='65.6' x2='1654.0' y2='65.6' stroke='#838385' stroke-width='2.4'/><line x1='1650.9' y1='65.6' x2='1649.4' y2='68.3' stroke='#838385' stroke-width='2.4'/><line x1='1654.0' y1='65.6' x2='1655.5' y2='68.3' stroke='#838385' stroke-width='2.4'/><line x1='1660.1' y1='65.6' x2='1658.5' y2='68.3' stroke='#838385' stroke-width='2.4'/><line x1='1628.0' y1='68.3' x2='1631.1' y2='68.3' stroke='#838385' stroke-width='2.4'/><line x1='1631.1' y1='68.3' x2='1632.6' y2='70.9' stroke='#838385' stroke-width='2.4'/><line x1='1637.2' y1='68.3' x2='1640.2' y2='68.3' stroke='#838385' stroke-width='2.4'/><line x1='1637.2' y1='68.3' x2='1635.7' y2='70.9' stroke='#838385' stroke-width='2.4'/><line x1='1646.3' y1='68.3' x2='1649.4' y2='68.3' stroke='#838385' stroke-width='2.4'/><line x1='1649.4' y1='68.3' x2='1650.9' y2='70.9' stroke='#838385' stroke-width='2.4'/><line x1='1655.5' y1='68.3' x2='1658.5' y2='68.3' stroke='#838385' stroke-width='2.4'/><line x1='1655.5' y1='68.3' x2='1654.0' y2='70.9' stroke='#838385' stroke-width='2.4'/><line x1='1632.6' y1='70.9' x2='1635.7' y2='70.9' stroke='#838385' stroke-width='2.4'/><line x1='1632.6' y1='70.9' x2='1631.1' y2='73.6' stroke='#838385' stroke-width='2.4'/><line x1='1635.7' y1='70.9' x2='1637.2' y2='73.6' stroke='#838385' stroke-width='2.4'/><line x1='1650.9' y1='70.9' x2='1654.0' y2='70.9' stroke='#838385' stroke-width='2.4'/><line x1='1650.9' y1='70.9' x2='1649.4' y2='73.6' stroke='#838385' stroke-width='2.4'/><line x1='1654.0' y1='70.9' x2='1655.5' y2='73.6' stroke='#838385' stroke-width='2.4'/><line x1='1631.1' y1='73.6' x2='1632.6' y2='76.2' stroke='#838385' stroke-width='2.4'/><line x1='1637.2' y1='73.6' x2='1640.2' y2='73.6' stroke='#838385' stroke-width='2.4'/><line x1='1637.2' y1='73.6' x2='1635.7' y2='76.2' stroke='#838385' stroke-width='2.4'/><line x1='1640.2' y1='73.6' x2='1641.8' y2='76.2' stroke='#838385' stroke-width='2.4'/><line x1='1646.3' y1='73.6' x2='1649.4' y2='73.6' stroke='#838385' stroke-width='2.4'/><line x1='1646.3' y1='73.6' x2='1644.8' y2='76.2' stroke='#838385' stroke-width='2.4'/><line x1='1649.4' y1='73.6' x2='1650.9' y2='76.2' stroke='#838385' stroke-width='2.4'/><line x1='1655.5' y1='73.6' x2='1654.0' y2='76.2' stroke='#838385' stroke-width='2.4'/><line x1='1632.6' y1='76.2' x2='1635.7' y2='76.2' stroke='#838385' stroke-width='2.4'/><line x1='1635.7' y1='76.2' x2='1637.2' y2='78.8' stroke='#838385' stroke-width='2.4'/><line x1='1641.8' y1='76.2' x2='1644.8' y2='76.2' stroke='#838385' stroke-width='2.4'/><line x1='1641.8' y1='76.2' x2='1640.2' y2='78.8' stroke='#838385' stroke-width='2.4'/><line x1='1644.8' y1='76.2' x2='1646.3' y2='78.8' stroke='#838385' stroke-width='2.4'/><line x1='1650.9' y1='76.2' x2='1654.0' y2='76.2' stroke='#838385' stroke-width='2.4'/><line x1='1650.9' y1='76.2' x2='1649.4' y2='78.8' stroke='#838385' stroke-width='2.4'/><line x1='1637.2' y1='78.8' x2='1640.2' y2='78.8' stroke='#838385' stroke-width='2.4'/><line x1='1646.3' y1='78.8' x2='1649.4' y2='78.8' stroke='#838385' stroke-width='2.4'/><line x1='1637.2' y1='47.2' x2='1636.2' y2='45.4' stroke='#909090' stroke-width='1'/><line x1='1640.2' y1='47.2' x2='1641.3' y2='45.4' stroke='#909090' stroke-width='1'/><line x1='1646.3' y1='47.2' x2='1645.3' y2='45.4' stroke='#909090' stroke-width='1'/><line x1='1649.4' y1='47.2' x2='1650.4' y2='45.4' stroke='#909090' stroke-width='1'/><line x1='1632.6' y1='49.8' x2='1631.6' y2='48.0' stroke='#909090' stroke-width='1'/><line x1='1654.0' y1='49.8' x2='1655.0' y2='48.0' stroke='#909090' stroke-width='1'/><line x1='1631.1' y1='52.4' x2='1629.0' y2='52.4' stroke='#909090' stroke-width='1'/><line x1='1655.5' y1='52.4' x2='1657.6' y2='52.4' stroke='#909090' stroke-width='1'/><line x1='1635.7' y1='55.1' x2='1636.7' y2='56.9' stroke='#909090' stroke-width='1'/><line x1='1650.9' y1='55.1' x2='1649.9' y2='56.9' stroke='#909090' stroke-width='1'/><line x1='1628.0' y1='57.7' x2='1627.0' y2='55.9' stroke='#909090' stroke-width='1'/><line x1='1640.2' y1='57.7' x2='1638.2' y2='57.7' stroke='#909090' stroke-width='1'/><line x1='1646.3' y1='57.7' x2='1648.4' y2='57.7' stroke='#909090' stroke-width='1'/><line x1='1658.5' y1='57.7' x2='1659.6' y2='55.9' stroke='#909090' stroke-width='1'/><line x1='1626.5' y1='60.4' x2='1624.5' y2='60.4' stroke='#909090' stroke-width='1'/><line x1='1632.6' y1='60.4' x2='1634.7' y2='60.4' stroke='#909090' stroke-width='1'/><line x1='1654.0' y1='60.4' x2='1651.9' y2='60.4' stroke='#909090' stroke-width='1'/><line x1='1660.1' y1='60.4' x2='1662.1' y2='60.4' stroke='#909090' stroke-width='1'/><line x1='1637.2' y1='63.0' x2='1636.2' y2='61.2' stroke='#909090' stroke-width='1'/><line x1='1649.4' y1='63.0' x2='1650.4' y2='61.2' stroke='#909090' stroke-width='1'/><line x1='1626.5' y1='65.6' x2='1624.5' y2='65.6' stroke='#909090' stroke-width='1'/><line x1='1660.1' y1='65.6' x2='1662.1' y2='65.6' stroke='#909090' stroke-width='1'/><line x1='1628.0' y1='68.3' x2='1627.0' y2='70.1' stroke='#909090' stroke-width='1'/><line x1='1640.2' y1='68.3' x2='1641.3' y2='70.1' stroke='#909090' stroke-width='1'/><line x1='1646.3' y1='68.3' x2='1645.3' y2='70.1' stroke='#909090' stroke-width='1'/><line x1='1658.5' y1='68.3' x2='1659.6' y2='70.1' stroke='#909090' stroke-width='1'/><line x1='1631.1' y1='73.6' x2='1629.0' y2='73.6' stroke='#909090' stroke-width='1'/><line x1='1640.2' y1='73.6' x2='1641.3' y2='71.8' stroke='#909090' stroke-width='1'/><line x1='1646.3' y1='73.6' x2='1645.3' y2='71.8' stroke='#909090' stroke-width='1'/><line x1='1655.5' y1='73.6' x2='1657.6' y2='73.6' stroke='#909090' stroke-width='1'/><line x1='1632.6' y1='76.2' x2='1631.6' y2='78.0' stroke='#909090' stroke-width='1'/><line x1='1654.0' y1='76.2' x2='1655.0' y2='78.0' stroke='#909090' stroke-width='1'/><line x1='1637.2' y1='78.8' x2='1636.2' y2='80.6' stroke='#909090' stroke-width='1'/><line x1='1640.2' y1='78.8' x2='1641.3' y2='80.6' stroke='#909090' stroke-width='1'/><line x1='1646.3' y1='78.8' x2='1645.3' y2='80.6' stroke='#909090' stroke-width='1'/><line x1='1649.4' y1='78.8' x2='1650.4' y2='80.6' stroke='#909090' stroke-width='1'/></svg><div class=t style='top:123px;font-size:26px;font-weight:700;color:#000;left:892px;'>Scanning tunneling microscopy</div><div class=t style='top:158px;font-size:26px;font-weight:700;color:#000;left:892px;'>Series</div><div class=r style='left:894px;top:193px;width:148px;height:28px;background:#eeeeee;'></div><div class=t style='left:894px;width:148px;text-align:center;top:200px;font-size:13px;color:#333'>Add series row</div><div class=r style='left:1433px;top:235.5px;width:32px;height:29.0px;background:#eeeeee;'></div><div class=t style='top:244px;font-size:13px;color:#111;left:894px;'>series</div><div class=r style='left:937.5px;top:236.5px;width:162.20000000000005px;height:27.5px;background:#fff;border:1px solid #9e9e9e;box-sizing:border-box;'></div><div class=t style='top:244px;font-size:13px;color:#333;left:946px;'>cc-stm, isov=1e-06</div><svg class=r style='left:1081.95px;top:245.2px' width='13.5' height='9.5'><polyline points='2,2 6.75,7.5 11.5,2' fill='none' stroke='#111' stroke-width='2' stroke-linecap='round' stroke-linejoin='round'/></svg><div class=t style='top:244px;font-size:13px;color:#111;left:1104px;'>colormap</div><div class=r style='left:1166.5px;top:236.5px;width:144.0px;height:27.5px;background:#fff;border:1px solid #9e9e9e;box-sizing:border-box;'></div><div class=t style='top:244px;font-size:13px;color:#333;left:1175px;'>gist_heat</div><svg class=r style='left:1292.75px;top:245.2px' width='13.5' height='9.5'><polyline points='2,2 6.75,7.5 11.5,2' fill='none' stroke='#111' stroke-width='2' stroke-linecap='round' stroke-linejoin='round'/></svg><svg class=r style='left:1322px;top:242px' width='12' height='12'><rect x='0.5' y='0.5' width='11' height='11' rx='2' fill='#e6e6e6' stroke='#a4a4a4'/></svg><div class=t style='top:243px;font-size:13px;color:#111;left:1343px;'>normalize</div><div class=t style='top:243px;font-size:13px;color:#333;left:1149px;width:600px;text-align:center;'>x</div><div class=r style='left:1433px;top:267.5px;width:32px;height:29.0px;background:#eeeeee;'></div><div class=t style='top:276px;font-size:13px;color:#111;left:894px;'>series</div><div class=r style='left:937.5px;top:268.5px;width:162.20000000000005px;height:27.5px;background:#fff;border:1px solid #9e9e9e;box-sizing:border-box;'></div><div class=t style='top:276px;font-size:13px;color:#333;left:946px;'>cc-sts, isov=1e-06</div><svg class=r style='left:1081.95px;top:277.2px' width='13.5' height='9.5'><polyline points='2,2 6.75,7.5 11.5,2' fill='none' stroke='#111' stroke-width='2' stroke-linecap='round' stroke-linejoin='round'/></svg><div class=t style='top:276px;font-size:13px;color:#111;left:1104px;'>colormap</div><div class=r style='left:1166.5px;top:268.5px;width:144.0px;height:27.5px;background:#fff;border:1px solid #9e9e9e;box-sizing:border-box;'></div><div class=t style='top:276px;font-size:13px;color:#333;left:1175px;'>gist_heat</div><svg class=r style='left:1292.75px;top:277.2px' width='13.5' height='9.5'><polyline points='2,2 6.75,7.5 11.5,2' fill='none' stroke='#111' stroke-width='2' stroke-linecap='round' stroke-linejoin='round'/></svg><svg class=r style='left:1322px;top:274px' width='12' height='12'><rect x='0.5' y='0.5' width='11' height='11' rx='2' fill='#e6e6e6' stroke='#a4a4a4'/></svg><div class=t style='top:275px;font-size:13px;color:#111;left:1343px;'>normalize</div><div class=t style='top:275px;font-size:13px;color:#333;left:1149px;width:600px;text-align:center;'>x</div><div class=r style='left:1433px;top:299.5px;width:32px;height:29.0px;background:#eeeeee;'></div><div class=t style='top:308px;font-size:13px;color:#111;left:894px;'>series</div><div class=r style='left:937.5px;top:300.5px;width:162.20000000000005px;height:27.5px;background:#fff;border:1px solid #9e9e9e;box-sizing:border-box;'></div><div class=t style='top:308px;font-size:13px;color:#333;left:946px;'>ch-stm, h=3.0</div><svg class=r style='left:1081.95px;top:309.2px' width='13.5' height='9.5'><polyline points='2,2 6.75,7.5 11.5,2' fill='none' stroke='#111' stroke-width='2' stroke-linecap='round' stroke-linejoin='round'/></svg><div class=t style='top:308px;font-size:13px;color:#111;left:1104px;'>colormap</div><div class=r style='left:1166.5px;top:300.5px;width:144.0px;height:27.5px;background:#fff;border:1px solid #9e9e9e;box-sizing:border-box;'></div><div class=t style='top:308px;font-size:13px;color:#333;left:1175px;'>gist_heat</div><svg class=r style='left:1292.75px;top:309.2px' width='13.5' height='9.5'><polyline points='2,2 6.75,7.5 11.5,2' fill='none' stroke='#111' stroke-width='2' stroke-linecap='round' stroke-linejoin='round'/></svg><svg class=r style='left:1322px;top:306px' width='12' height='12'><rect x='0.5' y='0.5' width='11' height='11' rx='2' fill='#e6e6e6' stroke='#a4a4a4'/></svg><div class=t style='top:307px;font-size:13px;color:#111;left:1343px;'>normalize</div><div class=t style='top:307px;font-size:13px;color:#333;left:1149px;width:600px;text-align:center;'>x</div><div class=r style='left:1433px;top:331.5px;width:32px;height:30.0px;background:#eeeeee;'></div><div class=t style='top:340px;font-size:13px;color:#111;left:894px;'>series</div><div class=r style='left:937.5px;top:332.5px;width:162.20000000000005px;height:28.5px;background:#fff;border:1px solid #9e9e9e;box-sizing:border-box;'></div><div class=t style='top:340px;font-size:13px;color:#333;left:946px;'>ch-sts, h=3.0</div><svg class=r style='left:1081.95px;top:341.7px' width='13.5' height='9.5'><polyline points='2,2 6.75,7.5 11.5,2' fill='none' stroke='#111' stroke-width='2' stroke-linecap='round' stroke-linejoin='round'/></svg><div class=t style='top:340px;font-size:13px;color:#111;left:1104px;'>colormap</div><div class=r style='left:1166.5px;top:332.5px;width:144.0px;height:28.5px;background:#fff;border:1px solid #9e9e9e;box-sizing:border-box;'></div><div class=t style='top:340px;font-size:13px;color:#333;left:1175px;'>seismic</div><svg class=r style='left:1292.75px;top:341.7px' width='13.5' height='9.5'><polyline points='2,2 6.75,7.5 11.5,2' fill='none' stroke='#111' stroke-width='2' stroke-linecap='round' stroke-linejoin='round'/></svg><svg class=r style='left:1322px;top:338px' width='12' height='12'><rect x='0.5' y='0.5' width='11' height='11' rx='2' fill='#e6e6e6' stroke='#a4a4a4'/></svg><div class=t style='top:339px;font-size:13px;color:#111;left:1343px;'>normalize</div><div class=t style='top:339px;font-size:13px;color:#333;left:1149px;width:600px;text-align:center;'>x</div><div class=r style='left:892px;top:234px;width:575px;height:1.5px;background:#000'></div><div class=r style='left:892px;top:264.5px;width:575px;height:3px;background:#000'></div><div class=r style='left:892px;top:296.5px;width:575px;height:3px;background:#000'></div><div class=r style='left:892px;top:328.5px;width:575px;height:3px;background:#000'></div><div class=r style='left:892px;top:361.5px;width:575px;height:1.5px;background:#000'></div><div class=r style='left:892px;top:234px;width:1.5px;height:129px;background:#000'></div><div class=r style='left:1099.7px;top:234px;width:3px;height:129px;background:#000'></div><div class=r style='left:1311.5px;top:234px;width:2.5px;height:129px;background:#000'></div><div class=r style='left:1430.5px;top:234px;width:2.5px;height:129px;background:#000'></div><div class=r style='left:1465px;top:234px;width:1.5px;height:129px;background:#000'></div><div class=t style='top:383px;font-size:13px;color:#111;right:752px;'>voltages (V)</div><div class=r style='left:982px;top:377px;width:250px;height:27px;background:#fff;border:1px solid #9e9e9e;box-sizing:border-box;'></div><div class=t style='top:384px;font-size:13px;color:#333;left:991px;'>-2.0 -1.5 -1.0 -0.5 -0.2 0.2 0.5 1.0 1.5 2.0</div><div class=r style='left:1223px;top:378px;width:8px;height:25px;background:#fff;'></div><div class=r style='left:1236px;top:376px;width:132px;height:28px;background:#eeeeee;'></div><div class=t style='left:1236px;width:132px;text-align:center;top:383px;font-size:13px;color:#333'>plot discrete</div><div class=t style='top:426px;font-size:13px;color:#111;right:752px;'>energy range</div><div class=r style='left:989.5px;top:431px;width:160.0px;height:4px;background:#bdbdbd;'></div><div class=r style='left:989.5px;top:429px;width:160.0px;height:8px;background:#2196f3;'></div><svg class=r style='left:981.0px;top:424.5px' width='17' height='17'><circle cx='8.5' cy='8.5' r='7.5' fill='#fff' stroke='#8c8c8c' stroke-width='1'/></svg><svg class=r style='left:1141.0px;top:424.5px' width='17' height='17'><circle cx='8.5' cy='8.5' r='7.5' fill='#fff' stroke='#8c8c8c' stroke-width='1'/></svg><div class=t style='top:426px;font-size:13px;color:#111;left:1161px;'>-2.00 – 2.00</div><div class=r style='left:1236px;top:419px;width:132px;height:28px;background:#eeeeee;'></div><div class=t style='left:1236px;width:132px;text-align:center;top:426px;font-size:13px;color:#333'>plot continuous</div><div class=r style='left:894px;top:462px;width:148px;height:28px;background:#eeeeee;'></div><div class=t style='left:894px;width:148px;text-align:center;top:469px;font-size:13px;color:#333'>clear</div><svg class=r style='left:895px;top:500px' width='795' height='315' viewBox='895 500 795 315'><defs>
<filter id='bl1' x='-50%' y='-50%' width='200%' height='200%'><feGaussianBlur stdDeviation='1.6'/></filter>
<filter id='bl2' x='-50%' y='-50%' width='200%' height='200%'><feGaussianBlur stdDeviation='0.9'/></filter>
<filter id='bl3' x='-50%' y='-50%' width='200%' height='200%'><feGaussianBlur stdDeviation='3'/></filter>
<radialGradient id='vign' cx='0.5' cy='0.5' r='0.7'><stop offset='0.4' stop-color='#000' stop-opacity='1'/><stop offset='1' stop-color='#000' stop-opacity='0'/></radialGradient>
</defs><g font-family='Liberation Sans, sans-serif' font-size='7.1' fill='#222' text-anchor='middle'><text x='934.2' y='509.4'>V=-2.00</text><text x='1013.5' y='509.4'>V=-1.50</text><text x='1092.8' y='509.4'>V=-1.00</text><text x='1172.1' y='509.4'>V=-0.50</text><text x='1251.4' y='509.4'>V=-0.20</text><text x='1330.8' y='509.4'>V=0.20</text><text x='1410.1' y='509.4'>V=0.50</text><text x='1489.4' y='509.4'>V=1.00</text><text x='1568.7' y='509.4'>V=1.50</text><text x='1648.0' y='509.4'>V=2.00</text><text x='934.2' y='587.8'>V=-2.00</text><text x='1013.5' y='587.8'>V=-1.50</text><text x='1092.8' y='587.8'>V=-1.00</text><text x='1172.1' y='587.8'>V=-0.50</text><text x='1251.4' y='587.8'>V=-0.20</text><text x='1330.8' y='587.8'>V=0.20</text><text x='1410.1' y='587.8'>V=0.50</text><text x='1489.4' y='587.8'>V=1.00</text><text x='1568.7' y='587.8'>V=1.50</text><text x='1648.0' y='587.8'>V=2.00</text><text x='934.2' y='666.2'>V=-2.00</text><text x='1013.5' y='666.2'>V=-1.50</text><text x='1092.8' y='666.2'>V=-1.00</text><text x='1172.1' y='666.2'>V=-0.50</text><text x='1251.4' y='666.2'>V=-0.20</text><text x='1330.8' y='666.2'>V=0.20</text><text x='1410.1' y='666.2'>V=0.50</text><text x='1489.4' y='666.2'>V=1.00</text><text x='1568.7' y='666.2'>V=1.50</text><text x='1648.0' y='666.2'>V=2.00</text><text x='934.2' y='744.6'>V=-2.00</text><text x='1013.5' y='744.6'>V=-1.50</text><text x='1092.8' y='744.6'>V=-1.00</text><text x='1172.1' y='744.6'>V=-0.50</text><text x='1251.4' y='744.6'>V=-0.20</text><text x='1330.8' y='744.6'>V=0.20</text><text x='1410.1' y='744.6'>V=0.50</text><text x='1489.4' y='744.6'>V=1.00</text><text x='1568.7' y='744.6'>V=1.50</text><text x='1648.0' y='744.6'>V=2.00</text></g><svg x='901.2' y='511.2' width='66' height='65.5' viewBox='901.2 511.2 66 65.5'><rect x='901.2' y='511.2' width='66' height='65.5' fill='#000'/><circle cx='934.2' cy='543.95' r='13.5' fill='#ff6a08' filter='url(#bl1)'/><g filter='url(#bl2)' opacity='1'><circle cx='946.7' cy='544.0' r='4.3' fill='#ff7410'/><circle cx='944.3' cy='551.3' r='4.3' fill='#ff7410'/><circle cx='938.1' cy='555.8' r='4.3' fill='#ff7410'/><circle cx='930.3' cy='555.8' r='4.3' fill='#ff7410'/><circle cx='924.1' cy='551.3' r='4.3' fill='#ff7410'/><circle cx='921.7' cy='544.0' r='4.3' fill='#ff7410'/><circle cx='924.1' cy='536.6' r='4.3' fill='#ff7410'/><circle cx='930.3' cy='532.1' r='4.3' fill='#ff7410'/><circle cx='938.1' cy='532.1' r='4.3' fill='#ff7410'/><circle cx='944.3' cy='536.6' r='4.3' fill='#ff7410'/></g><g filter='url(#bl2)' opacity='1'><circle cx='945.7' cy='547.5' r='2.2' fill='#ffa050'/><circle cx='941.4' cy='553.6' r='2.2' fill='#ffa050'/><circle cx='934.4' cy='555.9' r='2.2' fill='#ffa050'/><circle cx='927.3' cy='553.8' r='2.2' fill='#ffa050'/><circle cx='922.8' cy='547.8' r='2.2' fill='#ffa050'/><circle cx='922.7' cy='540.4' r='2.2' fill='#ffa050'/><circle cx='927.0' cy='534.3' r='2.2' fill='#ffa050'/><circle cx='934.0' cy='532.0' r='2.2' fill='#ffa050'/><circle cx='941.1' cy='534.1' r='2.2' fill='#ffa050'/><circle cx='945.6' cy='540.1' r='2.2' fill='#ffa050'/></g><g filter='url(#bl2)'><circle cx='926.2' cy='539.0' r='2.0' fill='#fff4e8'/><circle cx='942.2' cy='539.0' r='2.0' fill='#fff4e8'/><circle cx='924.2' cy='543.0' r='2.0' fill='#fff4e8'/><circle cx='944.2' cy='543.0' r='2.0' fill='#fff4e8'/><circle cx='931.7' cy='554.0' r='2.0' fill='#fff4e8'/><circle cx='936.7' cy='554.0' r='2.0' fill='#fff4e8'/></g><circle cx='934.2' cy='543.95' r='5' fill='#ff5a00' filter='url(#bl2)'/></svg><svg x='980.5' y='511.2' width='66' height='65.5' viewBox='980.5 511.2 66 65.5'><rect x='980.51' y='511.2' width='66' height='65.5' fill='#000'/><circle cx='1013.51' cy='543.95' r='13.5' fill='#ff6a08' filter='url(#bl1)'/><g filter='url(#bl2)' opacity='1'><circle cx='1026.0' cy='544.0' r='4.3' fill='#ff7410'/><circle cx='1023.6' cy='551.3' r='4.3' fill='#ff7410'/><circle cx='1017.4' cy='555.8' r='4.3' fill='#ff7410'/><circle cx='1009.6' cy='555.8' r='4.3' fill='#ff7410'/><circle cx='1003.4' cy='551.3' r='4.3' fill='#ff7410'/><circle cx='1001.0' cy='544.0' r='4.3' fill='#ff7410'/><circle cx='1003.4' cy='536.6' r='4.3' fill='#ff7410'/><circle cx='1009.6' cy='532.1' r='4.3' fill='#ff7410'/><circle cx='1017.4' cy='532.1' r='4.3' fill='#ff7410'/><circle cx='1023.6' cy='536.6' r='4.3' fill='#ff7410'/></g><g filter='url(#bl2)' opacity='1'><circle cx='1025.0' cy='547.5' r='2.2' fill='#ffa050'/><circle cx='1020.7' cy='553.6' r='2.2' fill='#ffa050'/><circle cx='1013.7' cy='555.9' r='2.2' fill='#ffa050'/><circle cx='1006.6' cy='553.8' r='2.2' fill='#ffa050'/><circle cx='1002.2' cy='547.8' r='2.2' fill='#ffa050'/><circle cx='1002.0' cy='540.4' r='2.2' fill='#ffa050'/><circle cx='1006.3' cy='534.3' r='2.2' fill='#ffa050'/><circle cx='1013.3' cy='532.0' r='2.2' fill='#ffa050'/><circle cx='1020.4' cy='534.1' r='2.2' fill='#ffa050'/><circle cx='1024.9' cy='540.1' r='2.2' fill='#ffa050'/></g><g filter='url(#bl2)'><circle cx='1005.5' cy='539.0' r='2.0' fill='#fff4e8'/><circle cx='1021.5' cy='539.0' r='2.0' fill='#fff4e8'/><circle cx='1003.5' cy='543.0' r='2.0' fill='#fff4e8'/><circle cx='1023.5' cy='543.0' r='2.0' fill='#fff4e8'/><circle cx='1011.0' cy='554.0' r='2.0' fill='#fff4e8'/><circle cx='1016.0' cy='554.0' r='2.0' fill='#fff4e8'/></g><circle cx='1013.51' cy='543.95' r='5' fill='#ff5a00' filter='url(#bl2)'/></svg><svg x='1059.8' y='511.2' width='66' height='65.5' viewBox='1059.8 511.2 66 65.5'><rect x='1059.8200000000002' y='511.2' width='66' height='65.5' fill='#000'/><circle cx='1092.8200000000002' cy='543.95' r='13.5' fill='#ff6a08' filter='url(#bl1)'/><g filter='url(#bl2)' opacity='1'><circle cx='1105.3' cy='544.0' r='4.3' fill='#ff7410'/><circle cx='1102.9' cy='551.3' r='4.3' fill='#ff7410'/><circle cx='1096.7' cy='555.8' r='4.3' fill='#ff7410'/><circle cx='1089.0' cy='555.8' r='4.3' fill='#ff7410'/><circle cx='1082.7' cy='551.3' r='4.3' fill='#ff7410'/><circle cx='1080.3' cy='544.0' r='4.3' fill='#ff7410'/><circle cx='1082.7' cy='536.6' r='4.3' fill='#ff7410'/><circle cx='1089.0' cy='532.1' r='4.3' fill='#ff7410'/><circle cx='1096.7' cy='532.1' r='4.3' fill='#ff7410'/><circle cx='1102.9' cy='536.6' r='4.3' fill='#ff7410'/></g><g filter='url(#bl2)' opacity='1'><circle cx='1104.3' cy='547.5' r='2.2' fill='#ffa050'/><circle cx='1100.0' cy='553.6' r='2.2' fill='#ffa050'/><circle cx='1093.0' cy='555.9' r='2.2' fill='#ffa050'/><circle cx='1085.9' cy='553.8' r='2.2' fill='#ffa050'/><circle cx='1081.5' cy='547.8' r='2.2' fill='#ffa050'/><circle cx='1081.4' cy='540.4' r='2.2' fill='#ffa050'/><circle cx='1085.6' cy='534.3' r='2.2' fill='#ffa050'/><circle cx='1092.7' cy='532.0' r='2.2' fill='#ffa050'/><circle cx='1099.7' cy='534.1' r='2.2' fill='#ffa050'/><circle cx='1104.2' cy='540.1' r='2.2' fill='#ffa050'/></g><g filter='url(#bl2)'><circle cx='1084.8' cy='539.0' r='2.0' fill='#fff4e8'/><circle cx='1100.8' cy='539.0' r='2.0' fill='#fff4e8'/><circle cx='1082.8' cy='543.0' r='2.0' fill='#fff4e8'/><circle cx='1102.8' cy='543.0' r='2.0' fill='#fff4e8'/><circle cx='1090.3' cy='554.0' r='2.0' fill='#fff4e8'/><circle cx='1095.3' cy='554.0' r='2.0' fill='#fff4e8'/></g><circle cx='1092.8200000000002' cy='543.95' r='5' fill='#ff5a00' filter='url(#bl2)'/></svg><svg x='1139.1' y='511.2' width='66' height='65.5' viewBox='1139.1 511.2 66 65.5'><rect x='1139.13' y='511.2' width='66' height='65.5' fill='#420000'/><circle cx='1172.13' cy='543.95' r='13.5' fill='#ff8a38' filter='url(#bl1)'/><g filter='url(#bl2)' opacity='1'><circle cx='1184.7' cy='544.0' r='4.6' fill='#ffa65c'/><circle cx='1182.3' cy='551.4' r='4.6' fill='#ffa65c'/><circle cx='1176.0' cy='555.9' r='4.6' fill='#ffa65c'/><circle cx='1168.2' cy='555.9' r='4.6' fill='#ffa65c'/><circle cx='1161.9' cy='551.4' r='4.6' fill='#ffa65c'/><circle cx='1159.5' cy='544.0' r='4.6' fill='#ffa65c'/><circle cx='1161.9' cy='536.5' r='4.6' fill='#ffa65c'/><circle cx='1168.2' cy='532.0' r='4.6' fill='#ffa65c'/><circle cx='1176.0' cy='532.0' r='4.6' fill='#ffa65c'/><circle cx='1182.3' cy='536.5' r='4.6' fill='#ffa65c'/></g><g filter='url(#bl2)' opacity='0.9'><circle cx='1180.4' cy='547.5' r='3' fill='#ffc89a'/><circle cx='1175.5' cy='552.3' r='3' fill='#ffc89a'/><circle cx='1168.6' cy='552.2' r='3' fill='#ffc89a'/><circle cx='1163.8' cy='547.3' r='3' fill='#ffc89a'/><circle cx='1163.8' cy='540.4' r='3' fill='#ffc89a'/><circle cx='1168.7' cy='535.6' r='3' fill='#ffc89a'/><circle cx='1175.6' cy='535.7' r='3' fill='#ffc89a'/><circle cx='1180.5' cy='540.6' r='3' fill='#ffc89a'/></g><g filter='url(#bl2)'><circle cx='1164.6' cy='542.0' r='2.4' fill='#fff6ee'/><circle cx='1179.6' cy='542.0' r='2.4' fill='#fff6ee'/><circle cx='1169.1' cy='552.0' r='2.4' fill='#fff6ee'/><circle cx='1175.1' cy='552.0' r='2.4' fill='#fff6ee'/><circle cx='1172.1' cy='536.0' r='2.4' fill='#fff6ee'/></g><g filter='url(#bl2)'><circle cx='1167.6' cy='541.5' r='1.7' fill='#8a1000'/><circle cx='1176.6' cy='541.5' r='1.7' fill='#8a1000'/><circle cx='1172.1' cy='549.5' r='1.7' fill='#8a1000'/></g></svg><svg x='1218.4' y='511.2' width='66' height='65.5' viewBox='1218.4 511.2 66 65.5'><rect x='1218.44' y='511.2' width='66' height='65.5' fill='#4a0200'/><circle cx='1251.44' cy='543.95' r='13.5' fill='#ff8a38' filter='url(#bl1)'/><g filter='url(#bl2)' opacity='1'><circle cx='1264.0' cy='544.0' r='4.6' fill='#ffa65c'/><circle cx='1261.6' cy='551.4' r='4.6' fill='#ffa65c'/><circle cx='1255.3' cy='555.9' r='4.6' fill='#ffa65c'/><circle cx='1247.5' cy='555.9' r='4.6' fill='#ffa65c'/><circle cx='1241.2' cy='551.4' r='4.6' fill='#ffa65c'/><circle cx='1238.8' cy='544.0' r='4.6' fill='#ffa65c'/><circle cx='1241.2' cy='536.5' r='4.6' fill='#ffa65c'/><circle cx='1247.5' cy='532.0' r='4.6' fill='#ffa65c'/><circle cx='1255.3' cy='532.0' r='4.6' fill='#ffa65c'/><circle cx='1261.6' cy='536.5' r='4.6' fill='#ffa65c'/></g><g filter='url(#bl2)' opacity='0.9'><circle cx='1259.7' cy='547.5' r='3' fill='#ffc89a'/><circle cx='1254.8' cy='552.3' r='3' fill='#ffc89a'/><circle cx='1247.9' cy='552.2' r='3' fill='#ffc89a'/><circle cx='1243.1' cy='547.3' r='3' fill='#ffc89a'/><circle cx='1243.2' cy='540.4' r='3' fill='#ffc89a'/><circle cx='1248.1' cy='535.6' r='3' fill='#ffc89a'/><circle cx='1254.9' cy='535.7' r='3' fill='#ffc89a'/><circle cx='1259.8' cy='540.6' r='3' fill='#ffc89a'/></g><g filter='url(#bl2)'><circle cx='1243.9' cy='542.0' r='2.4' fill='#fff6ee'/><circle cx='1258.9' cy='542.0' r='2.4' fill='#fff6ee'/><circle cx='1248.4' cy='552.0' r='2.4' fill='#fff6ee'/><circle cx='1254.4' cy='552.0' r='2.4' fill='#fff6ee'/><circle cx='1251.4' cy='536.0' r='2.4' fill='#fff6ee'/></g><g filter='url(#bl2)'><circle cx='1246.9' cy='541.5' r='1.7' fill='#8a1000'/><circle cx='1255.9' cy='541.5' r='1.7' fill='#8a1000'/><circle cx='1251.4' cy='549.5' r='1.7' fill='#8a1000'/></g></svg><svg x='1297.8' y='511.2' width='66' height='65.5' viewBox='1297.8 511.2 66 65.5'><rect x='1297.75' y='511.2' width='66' height='65.5' fill='#560600'/><circle cx='1330.75' cy='543.95' r='13.5' fill='#ff8a38' filter='url(#bl1)'/><g filter='url(#bl2)' opacity='1'><circle cx='1343.3' cy='544.0' r='4.6' fill='#ffa65c'/><circle cx='1340.9' cy='551.4' r='4.6' fill='#ffa65c'/><circle cx='1334.6' cy='555.9' r='4.6' fill='#ffa65c'/><circle cx='1326.9' cy='555.9' r='4.6' fill='#ffa65c'/><circle cx='1320.6' cy='551.4' r='4.6' fill='#ffa65c'/><circle cx='1318.2' cy='544.0' r='4.6' fill='#ffa65c'/><circle cx='1320.6' cy='536.5' r='4.6' fill='#ffa65c'/><circle cx='1326.9' cy='532.0' r='4.6' fill='#ffa65c'/><circle cx='1334.6' cy='532.0' r='4.6' fill='#ffa65c'/><circle cx='1340.9' cy='536.5' r='4.6' fill='#ffa65c'/></g><g filter='url(#bl2)' opacity='0.9'><circle cx='1339.0' cy='547.5' r='3' fill='#ffc89a'/><circle cx='1334.1' cy='552.3' r='3' fill='#ffc89a'/><circle cx='1327.2' cy='552.2' r='3' fill='#ffc89a'/><circle cx='1322.4' cy='547.3' r='3' fill='#ffc89a'/><circle cx='1322.5' cy='540.4' r='3' fill='#ffc89a'/><circle cx='1327.4' cy='535.6' r='3' fill='#ffc89a'/><circle cx='1334.3' cy='535.7' r='3' fill='#ffc89a'/><circle cx='1339.1' cy='540.6' r='3' fill='#ffc89a'/></g><g filter='url(#bl2)'><circle cx='1323.2' cy='542.0' r='2.4' fill='#fff6ee'/><circle cx='1338.2' cy='542.0' r='2.4' fill='#fff6ee'/><circle cx='1327.8' cy='552.0' r='2.4' fill='#fff6ee'/><circle cx='1333.8' cy='552.0' r='2.4' fill='#fff6ee'/><circle cx='1330.8' cy='536.0' r='2.4' fill='#fff6ee'/></g><g filter='url(#bl2)'><circle cx='1326.2' cy='541.5' r='1.7' fill='#8a1000'/><circle cx='1335.2' cy='541.5' r='1.7' fill='#8a1000'/><circle cx='1330.8' cy='549.5' r='1.7' fill='#8a1000'/></g></svg><svg x='1377.1' y='511.2' width='66' height='65.5' viewBox='1377.1 511.2 66 65.5'><rect x='1377.06' y='511.2' width='66' height='65.5' fill='#420200'/><circle cx='1410.06' cy='543.95' r='13.5' fill='#ff8a38' filter='url(#bl1)'/><g filter='url(#bl2)' opacity='1'><circle cx='1422.7' cy='544.0' r='4.6' fill='#ffa65c'/><circle cx='1420.3' cy='551.4' r='4.6' fill='#ffa65c'/><circle cx='1414.0' cy='555.9' r='4.6' fill='#ffa65c'/><circle cx='1406.2' cy='555.9' r='4.6' fill='#ffa65c'/><circle cx='1399.9' cy='551.4' r='4.6' fill='#ffa65c'/><circle cx='1397.5' cy='544.0' r='4.6' fill='#ffa65c'/><circle cx='1399.9' cy='536.5' r='4.6' fill='#ffa65c'/><circle cx='1406.2' cy='532.0' r='4.6' fill='#ffa65c'/><circle cx='1414.0' cy='532.0' r='4.6' fill='#ffa65c'/><circle cx='1420.3' cy='536.5' r='4.6' fill='#ffa65c'/></g><g filter='url(#bl2)' opacity='0.9'><circle cx='1418.3' cy='547.5' r='3' fill='#ffc89a'/><circle cx='1413.4' cy='552.3' r='3' fill='#ffc89a'/><circle cx='1406.6' cy='552.2' r='3' fill='#ffc89a'/><circle cx='1401.7' cy='547.3' r='3' fill='#ffc89a'/><circle cx='1401.8' cy='540.4' r='3' fill='#ffc89a'/><circle cx='1406.7' cy='535.6' r='3' fill='#ffc89a'/><circle cx='1413.6' cy='535.7' r='3' fill='#ffc89a'/><circle cx='1418.4' cy='540.6' r='3' fill='#ffc89a'/></g><g filter='url(#bl2)'><circle cx='1402.6' cy='542.0' r='2.4' fill='#fff6ee'/><circle cx='1417.6' cy='542.0' r='2.4' fill='#fff6ee'/><circle cx='1407.1' cy='552.0' r='2.4' fill='#fff6ee'/><circle cx='1413.1' cy='552.0' r='2.4' fill='#fff6ee'/><circle cx='1410.1' cy='536.0' r='2.4' fill='#fff6ee'/></g><g filter='url(#bl2)'><circle cx='1405.6' cy='541.5' r='1.7' fill='#8a1000'/><circle cx='1414.6' cy='541.5' r='1.7' fill='#8a1000'/><circle cx='1410.1' cy='549.5' r='1.7' fill='#8a1000'/></g></svg><svg x='1456.4' y='511.2' width='66' height='65.5' viewBox='1456.4 511.2 66 65.5'><rect x='1456.3700000000001' y='511.2' width='66' height='65.5' fill='#080000'/><circle cx='1489.3700000000001' cy='543.95' r='15' fill='#ff8a30' filter='url(#bl1)'/><g filter='url(#bl2)' opacity='1'><circle cx='1499.9' cy='544.0' r='5' fill='#ffe8d0'/><circle cx='1495.9' cy='552.2' r='5' fill='#ffe8d0'/><circle cx='1487.0' cy='554.2' r='5' fill='#ffe8d0'/><circle cx='1479.9' cy='548.5' r='5' fill='#ffe8d0'/><circle cx='1479.9' cy='539.4' r='5' fill='#ffe8d0'/><circle cx='1487.0' cy='533.7' r='5' fill='#ffe8d0'/><circle cx='1495.9' cy='535.7' r='5' fill='#ffe8d0'/></g><circle cx='1489.3700000000001' cy='543.95' r='7' fill='#fff4ea' filter='url(#bl2)'/><g filter='url(#bl2)'><circle cx='1484.4' cy='541.0' r='1.4' fill='#ff9a50'/><circle cx='1494.4' cy='541.0' r='1.4' fill='#ff9a50'/><circle cx='1489.4' cy='550.0' r='1.4' fill='#ff9a50'/></g></svg><svg x='1535.7' y='511.2' width='66' height='65.5' viewBox='1535.7 511.2 66 65.5'><rect x='1535.68' y='511.2' width='66' height='65.5' fill='#000'/><circle cx='1568.68' cy='543.95' r='16' fill='#ff6a10' filter='url(#bl1)'/><circle cx='1568.68' cy='543.95' r='11' fill='#ff7a20' filter='url(#bl2)'/><circle cx='1568.68' cy='543.95' r='16.5' fill='#f03800' filter='url(#bl1)'/><circle cx='1568.68' cy='543.95' r='13' fill='#ff7414' filter='url(#bl1)'/><ellipse cx='1562.2' cy='541.4' rx='3.9' ry='5.0' transform='rotate(20 1562.2 541.4)' fill='#fff6ea' filter='url(#bl2)'/><ellipse cx='1564.3' cy='540.0' rx='2.5' ry='3.6' transform='rotate(20 1564.3 540.0)' fill='#ff7a1c' filter='url(#bl2)'/><ellipse cx='1575.2' cy='541.4' rx='3.9' ry='5.0' transform='rotate(-20 1575.2 541.4)' fill='#fff6ea' filter='url(#bl2)'/><ellipse cx='1573.1' cy='540.0' rx='2.5' ry='3.6' transform='rotate(-20 1573.1 540.0)' fill='#ff7a1c' filter='url(#bl2)'/><ellipse cx='1568.7' cy='551.0' rx='5.2' ry='3.6' transform='rotate(0 1568.7 551.0)' fill='#fff6ea' filter='url(#bl2)'/><ellipse cx='1568.7' cy='553.0' rx='3.0' ry='2.2' transform='rotate(0 1568.7 553.0)' fill='#ff7a1c' filter='url(#bl2)'/></svg><svg x='1615.0' y='511.2' width='66' height='65.5' viewBox='1615.0 511.2 66 65.5'><rect x='1614.99' y='511.2' width='66' height='65.5' fill='#000'/><circle cx='1647.99' cy='543.95' r='16' fill='#ff6a10' filter='url(#bl1)'/><circle cx='1647.99' cy='543.95' r='11' fill='#ff7a20' filter='url(#bl2)'/><circle cx='1647.99' cy='543.95' r='16.5' fill='#f03800' filter='url(#bl1)'/><circle cx='1647.99' cy='543.95' r='13' fill='#ff7414' filter='url(#bl1)'/><ellipse cx='1641.5' cy='541.4' rx='3.9' ry='5.0' transform='rotate(20 1641.5 541.4)' fill='#fff6ea' filter='url(#bl2)'/><ellipse cx='1643.6' cy='540.0' rx='2.5' ry='3.6' transform='rotate(20 1643.6 540.0)' fill='#ff7a1c' filter='url(#bl2)'/><ellipse cx='1654.5' cy='541.4' rx='3.9' ry='5.0' transform='rotate(-20 1654.5 541.4)' fill='#fff6ea' filter='url(#bl2)'/><ellipse cx='1652.4' cy='540.0' rx='2.5' ry='3.6' transform='rotate(-20 1652.4 540.0)' fill='#ff7a1c' filter='url(#bl2)'/><ellipse cx='1648.0' cy='551.0' rx='5.2' ry='3.6' transform='rotate(0 1648.0 551.0)' fill='#fff6ea' filter='url(#bl2)'/><ellipse cx='1648.0' cy='553.0' rx='3.0' ry='2.2' transform='rotate(0 1648.0 553.0)' fill='#ff7a1c' filter='url(#bl2)'/></svg><svg x='901.2' y='589.6' width='66' height='65.5' viewBox='901.2 589.6 66 65.5'><rect x='901.2' y='589.6' width='66' height='65.5' fill='#961800'/><circle cx='910.8' cy='619.4' r='2' fill='#b02800' opacity='0.5'/><circle cx='952.1' cy='635.8' r='2' fill='#b02800' opacity='0.5'/><circle cx='949.5' cy='618.0' r='2' fill='#b02800' opacity='0.5'/><circle cx='954.0' cy='624.5' r='2' fill='#b02800' opacity='0.5'/><circle cx='906.5' cy='619.5' r='2' fill='#b02800' opacity='0.5'/><circle cx='904.4' cy='650.7' r='2' fill='#b02800' opacity='0.5'/><circle cx='963.7' cy='611.6' r='2' fill='#b02800' opacity='0.5'/><circle cx='921.6' cy='639.9' r='2' fill='#b02800' opacity='0.5'/><circle cx='914.7' cy='601.3' r='2' fill='#b02800' opacity='0.5'/><circle cx='913.6' cy='612.3' r='2' fill='#b02800' opacity='0.5'/><circle cx='942.5' cy='652.7' r='2' fill='#b02800' opacity='0.5'/><circle cx='915.1' cy='652.2' r='2' fill='#b02800' opacity='0.5'/><circle cx='937.9' cy='648.6' r='2' fill='#b02800' opacity='0.5'/><circle cx='955.2' cy='600.1' r='2' fill='#b02800' opacity='0.5'/><circle cx='944.0' cy='597.7' r='2' fill='#b02800' opacity='0.5'/><circle cx='901.6' cy='615.5' r='2' fill='#b02800' opacity='0.5'/><circle cx='952.3' cy='626.7' r='2' fill='#b02800' opacity='0.5'/><circle cx='913.9' cy='644.7' r='2' fill='#b02800' opacity='0.5'/><circle cx='961.5' cy='605.1' r='2' fill='#b02800' opacity='0.5'/><circle cx='930.8' cy='631.4' r='2' fill='#b02800' opacity='0.5'/><circle cx='960.8' cy='597.9' r='2' fill='#b02800' opacity='0.5'/><circle cx='937.8' cy='653.0' r='2' fill='#b02800' opacity='0.5'/><circle cx='941.4' cy='636.6' r='2' fill='#b02800' opacity='0.5'/><circle cx='952.3' cy='622.8' r='2' fill='#b02800' opacity='0.5'/><circle cx='920.3' cy='628.3' r='2' fill='#b02800' opacity='0.5'/><circle cx='936.1' cy='612.1' r='2' fill='#b02800' opacity='0.5'/><circle cx='957.6' cy='613.4' r='2' fill='#b02800' opacity='0.5'/><circle cx='933.1' cy='639.5' r='2' fill='#b02800' opacity='0.5'/><circle cx='954.9' cy='647.9' r='2' fill='#b02800' opacity='0.5'/><circle cx='944.2' cy='606.1' r='2' fill='#b02800' opacity='0.5'/><circle cx='934.2' cy='623.35' r='17' fill='#c02c00' filter='url(#bl2)'/><ellipse cx='934.2' cy='607.9' rx='5' ry='3' transform='rotate(360 934.2 607.9)' fill='#100000' filter='url(#bl2)'/><ellipse cx='920.8' cy='631.1' rx='5' ry='3' transform='rotate(240 920.8 631.1)' fill='#100000' filter='url(#bl2)'/><ellipse cx='947.6' cy='631.1' rx='5' ry='3' transform='rotate(120 947.6 631.1)' fill='#100000' filter='url(#bl2)'/><circle cx='945.8' cy='615.9' r='2.1' fill='#140000' opacity='0.8' filter='url(#bl2)'/><circle cx='921.1' cy='622.2' r='1.8' fill='#140000' opacity='0.8' filter='url(#bl2)'/><circle cx='941.1' cy='632.5' r='2.0' fill='#140000' opacity='0.8' filter='url(#bl2)'/><circle cx='941.3' cy='635.3' r='2.1' fill='#140000' opacity='0.8' filter='url(#bl2)'/><circle cx='943.3' cy='632.0' r='1.3' fill='#140000' opacity='0.8' filter='url(#bl2)'/><circle cx='936.4' cy='634.7' r='1.6' fill='#140000' opacity='0.8' filter='url(#bl2)'/><circle cx='927.3' cy='613.7' r='2.1' fill='#140000' opacity='0.8' filter='url(#bl2)'/><circle cx='928.5' cy='633.1' r='1.2' fill='#140000' opacity='0.8' filter='url(#bl2)'/><circle cx='936.0' cy='628.1' r='1.8' fill='#140000' opacity='0.8' filter='url(#bl2)'/><circle cx='937.4' cy='635.7' r='1.7' fill='#140000' opacity='0.8' filter='url(#bl2)'/><circle cx='922.4' cy='631.8' r='2.1' fill='#140000' opacity='0.8' filter='url(#bl2)'/><circle cx='927.9' cy='613.4' r='1.8' fill='#140000' opacity='0.8' filter='url(#bl2)'/><circle cx='930.8' cy='612.8' r='1.4' fill='#140000' opacity='0.8' filter='url(#bl2)'/><circle cx='943.6' cy='613.7' r='1.3' fill='#140000' opacity='0.8' filter='url(#bl2)'/><circle cx='934.3' cy='630.0' r='1.3' fill='#140000' opacity='0.8' filter='url(#bl2)'/><circle cx='930.7' cy='619.0' r='1.3' fill='#140000' opacity='0.8' filter='url(#bl2)'/><circle cx='937.9' cy='622.1' r='1.7' fill='#140000' opacity='0.8' filter='url(#bl2)'/><circle cx='923.3' cy='625.1' r='1.6' fill='#140000' opacity='0.8' filter='url(#bl2)'/><circle cx='937.7' cy='632.8' r='1.9' fill='#140000' opacity='0.8' filter='url(#bl2)'/><circle cx='938.8' cy='629.3' r='1.5' fill='#140000' opacity='0.8' filter='url(#bl2)'/><circle cx='942.9' cy='619.3' r='1.9' fill='#140000' opacity='0.8' filter='url(#bl2)'/><circle cx='922.1' cy='632.0' r='1.5' fill='#140000' opacity='0.8' filter='url(#bl2)'/><g filter='url(#bl2)'><circle cx='939.1' cy='611.8' r='1.5' fill='#ffa040'/><circle cx='946.6' cy='621.8' r='1.5' fill='#ffa040'/><circle cx='941.7' cy='633.3' r='1.5' fill='#ffa040'/><circle cx='929.3' cy='634.9' r='1.5' fill='#ffa040'/><circle cx='921.8' cy='624.9' r='1.5' fill='#ffa040'/><circle cx='926.7' cy='613.4' r='1.5' fill='#ffa040'/><circle cx='938.5' cy='634.3' r='1.5' fill='#ffa040'/><circle cx='923.4' cy='632.2' r='1.5' fill='#ffa040'/><circle cx='933.2' cy='630.6' r='1.5' fill='#ffa040'/><circle cx='941.3' cy='620.4' r='1.5' fill='#ffa040'/><circle cx='921.2' cy='618.3' r='1.5' fill='#ffa040'/><circle cx='940.9' cy='623.8' r='1.5' fill='#ffa040'/><circle cx='933.0' cy='627.1' r='1.5' fill='#ffa040'/><circle cx='926.3' cy='615.3' r='1.5' fill='#ffa040'/><circle cx='939.8' cy='611.7' r='1.5' fill='#ffa040'/><circle cx='930.4' cy='616.0' r='1.5' fill='#ffa040'/></g></svg><svg x='980.5' y='589.6' width='66' height='65.5' viewBox='980.5 589.6 66 65.5'><rect x='980.51' y='589.6' width='66' height='65.5' fill='#200200'/><circle cx='1013.51' cy='623.35' r='17' fill='#8a1800' filter='url(#bl2)'/><circle cx='1017.4' cy='634.1' r='2.4' fill='#140000' opacity='0.8' filter='url(#bl2)'/><circle cx='999.4' cy='626.3' r='2.0' fill='#140000' opacity='0.8' filter='url(#bl2)'/><circle cx='1014.7' cy='630.2' r='1.5' fill='#140000' opacity='0.8' filter='url(#bl2)'/><circle cx='1016.4' cy='635.5' r='2.4' fill='#140000' opacity='0.8' filter='url(#bl2)'/><circle cx='1014.9' cy='627.1' r='1.3' fill='#140000' opacity='0.8' filter='url(#bl2)'/><circle cx='1004.7' cy='633.1' r='1.8' fill='#140000' opacity='0.8' filter='url(#bl2)'/><circle cx='1007.9' cy='616.8' r='1.7' fill='#140000' opacity='0.8' filter='url(#bl2)'/><circle cx='1007.3' cy='626.3' r='1.6' fill='#140000' opacity='0.8' filter='url(#bl2)'/><circle cx='1015.7' cy='618.9' r='2.0' fill='#140000' opacity='0.8' filter='url(#bl2)'/><circle cx='1022.6' cy='615.1' r='1.7' fill='#140000' opacity='0.8' filter='url(#bl2)'/><circle cx='1005.3' cy='627.6' r='1.7' fill='#140000' opacity='0.8' filter='url(#bl2)'/><circle cx='1025.8' cy='623.9' r='1.8' fill='#140000' opacity='0.8' filter='url(#bl2)'/><circle cx='1007.3' cy='632.4' r='1.2' fill='#140000' opacity='0.8' filter='url(#bl2)'/><circle cx='1026.1' cy='624.1' r='1.9' fill='#140000' opacity='0.8' filter='url(#bl2)'/><circle cx='1019.2' cy='624.6' r='1.4' fill='#140000' opacity='0.8' filter='url(#bl2)'/><circle cx='1015.8' cy='626.5' r='2.0' fill='#140000' opacity='0.8' filter='url(#bl2)'/><circle cx='1005.2' cy='633.1' r='2.0' fill='#140000' opacity='0.8' filter='url(#bl2)'/><circle cx='1003.2' cy='623.5' r='2.3' fill='#140000' opacity='0.8' filter='url(#bl2)'/><circle cx='1019.2' cy='617.2' r='2.0' fill='#140000' opacity='0.8' filter='url(#bl2)'/><circle cx='1025.9' cy='623.8' r='1.3' fill='#140000' opacity='0.8' filter='url(#bl2)'/><circle cx='1012.0' cy='625.6' r='2.3' fill='#140000' opacity='0.8' filter='url(#bl2)'/><circle cx='1020.9' cy='611.4' r='1.3' fill='#140000' opacity='0.8' filter='url(#bl2)'/><g filter='url(#bl2)'><circle cx='1018.4' cy='611.8' r='1.5' fill='#ff7a20'/><circle cx='1025.9' cy='621.8' r='1.5' fill='#ff7a20'/><circle cx='1021.0' cy='633.3' r='1.5' fill='#ff7a20'/><circle cx='1008.6' cy='634.9' r='1.5' fill='#ff7a20'/><circle cx='1001.1' cy='624.9' r='1.5' fill='#ff7a20'/><circle cx='1006.0' cy='613.4' r='1.5' fill='#ff7a20'/><circle cx='1015.3' cy='611.7' r='1.5' fill='#ff7a20'/><circle cx='1016.8' cy='611.2' r='1.5' fill='#ff7a20'/><circle cx='1015.8' cy='628.1' r='1.5' fill='#ff7a20'/><circle cx='1012.6' cy='610.9' r='1.5' fill='#ff7a20'/><circle cx='1001.0' cy='627.7' r='1.5' fill='#ff7a20'/><circle cx='1022.0' cy='633.5' r='1.5' fill='#ff7a20'/><circle cx='1023.8' cy='614.3' r='1.5' fill='#ff7a20'/><circle cx='1020.9' cy='626.7' r='1.5' fill='#ff7a20'/><circle cx='1009.6' cy='613.7' r='1.5' fill='#ff7a20'/><circle cx='1021.3' cy='626.3' r='1.5' fill='#ff7a20'/></g></svg><svg x='1059.8' y='589.6' width='66' height='65.5' viewBox='1059.8 589.6 66 65.5'><rect x='1059.8200000000002' y='589.6' width='66' height='65.5' fill='#0c0000'/><circle cx='1092.8200000000002' cy='623.35' r='17' fill='#962000' filter='url(#bl2)'/><circle cx='1088.5' cy='619.5' r='1.4' fill='#140000' opacity='0.8' filter='url(#bl2)'/><circle cx='1083.0' cy='615.4' r='1.7' fill='#140000' opacity='0.8' filter='url(#bl2)'/><circle cx='1082.0' cy='618.6' r='1.3' fill='#140000' opacity='0.8' filter='url(#bl2)'/><circle cx='1084.8' cy='615.9' r='1.8' fill='#140000' opacity='0.8' filter='url(#bl2)'/><circle cx='1091.5' cy='609.3' r='1.7' fill='#140000' opacity='0.8' filter='url(#bl2)'/><circle cx='1097.8' cy='628.5' r='2.2' fill='#140000' opacity='0.8' filter='url(#bl2)'/><circle cx='1083.2' cy='615.5' r='1.7' fill='#140000' opacity='0.8' filter='url(#bl2)'/><circle cx='1094.7' cy='633.8' r='1.8' fill='#140000' opacity='0.8' filter='url(#bl2)'/><circle cx='1088.7' cy='619.4' r='2.0' fill='#140000' opacity='0.8' filter='url(#bl2)'/><circle cx='1093.1' cy='635.6' r='1.3' fill='#140000' opacity='0.8' filter='url(#bl2)'/><circle cx='1089.5' cy='615.4' r='1.8' fill='#140000' opacity='0.8' filter='url(#bl2)'/><circle cx='1081.0' cy='628.8' r='1.7' fill='#140000' opacity='0.8' filter='url(#bl2)'/><circle cx='1099.9' cy='635.7' r='1.4' fill='#140000' opacity='0.8' filter='url(#bl2)'/><circle cx='1085.0' cy='614.9' r='1.7' fill='#140000' opacity='0.8' filter='url(#bl2)'/><circle cx='1082.4' cy='627.4' r='2.0' fill='#140000' opacity='0.8' filter='url(#bl2)'/><circle cx='1099.2' cy='610.8' r='2.0' fill='#140000' opacity='0.8' filter='url(#bl2)'/><circle cx='1102.6' cy='620.0' r='1.7' fill='#140000' opacity='0.8' filter='url(#bl2)'/><circle cx='1100.9' cy='614.6' r='2.0' fill='#140000' opacity='0.8' filter='url(#bl2)'/><circle cx='1092.4' cy='614.0' r='1.9' fill='#140000' opacity='0.8' filter='url(#bl2)'/><circle cx='1082.6' cy='613.3' r='1.8' fill='#140000' opacity='0.8' filter='url(#bl2)'/><circle cx='1078.2' cy='620.8' r='1.7' fill='#140000' opacity='0.8' filter='url(#bl2)'/><circle cx='1106.5' cy='618.4' r='1.4' fill='#140000' opacity='0.8' filter='url(#bl2)'/><g filter='url(#bl2)'><circle cx='1097.7' cy='611.8' r='1.5' fill='#ff8a30'/><circle cx='1105.2' cy='621.8' r='1.5' fill='#ff8a30'/><circle cx='1100.4' cy='633.3' r='1.5' fill='#ff8a30'/><circle cx='1088.0' cy='634.9' r='1.5' fill='#ff8a30'/><circle cx='1080.4' cy='624.9' r='1.5' fill='#ff8a30'/><circle cx='1085.3' cy='613.4' r='1.5' fill='#ff8a30'/><circle cx='1095.2' cy='620.4' r='1.5' fill='#ff8a30'/><circle cx='1083.0' cy='632.1' r='1.5' fill='#ff8a30'/><circle cx='1090.0' cy='616.9' r='1.5' fill='#ff8a30'/><circle cx='1095.9' cy='636.6' r='1.5' fill='#ff8a30'/><circle cx='1087.9' cy='615.4' r='1.5' fill='#ff8a30'/><circle cx='1087.2' cy='626.7' r='1.5' fill='#ff8a30'/><circle cx='1087.6' cy='624.0' r='1.5' fill='#ff8a30'/><circle cx='1098.7' cy='626.6' r='1.5' fill='#ff8a30'/><circle cx='1097.9' cy='630.4' r='1.5' fill='#ff8a30'/><circle cx='1095.6' cy='627.3' r='1.5' fill='#ff8a30'/></g></svg><svg x='1139.1' y='589.6' width='66' height='65.5' viewBox='1139.1 589.6 66 65.5'><rect x='1139.13' y='589.6' width='66' height='65.5' fill='#1c0200'/><circle cx='1172.13' cy='623.35' r='17' fill='#601000' filter='url(#bl2)'/><circle cx='1157.8' cy='627.4' r='2.1' fill='#140000' opacity='0.8' filter='url(#bl2)'/><circle cx='1174.9' cy='635.9' r='1.3' fill='#140000' opacity='0.8' filter='url(#bl2)'/><circle cx='1180.5' cy='631.4' r='1.7' fill='#140000' opacity='0.8' filter='url(#bl2)'/><circle cx='1182.0' cy='613.2' r='1.3' fill='#140000' opacity='0.8' filter='url(#bl2)'/><circle cx='1172.9' cy='627.6' r='2.2' fill='#140000' opacity='0.8' filter='url(#bl2)'/><circle cx='1172.5' cy='625.7' r='1.3' fill='#140000' opacity='0.8' filter='url(#bl2)'/><circle cx='1166.8' cy='622.6' r='1.4' fill='#140000' opacity='0.8' filter='url(#bl2)'/><circle cx='1171.1' cy='613.8' r='2.1' fill='#140000' opacity='0.8' filter='url(#bl2)'/><circle cx='1174.3' cy='613.9' r='1.9' fill='#140000' opacity='0.8' filter='url(#bl2)'/><circle cx='1172.2' cy='637.0' r='1.6' fill='#140000' opacity='0.8' filter='url(#bl2)'/><circle cx='1182.9' cy='619.5' r='1.9' fill='#140000' opacity='0.8' filter='url(#bl2)'/><circle cx='1172.1' cy='633.7' r='1.5' fill='#140000' opacity='0.8' filter='url(#bl2)'/><circle cx='1179.1' cy='622.8' r='2.3' fill='#140000' opacity='0.8' filter='url(#bl2)'/><circle cx='1158.2' cy='620.8' r='2.1' fill='#140000' opacity='0.8' filter='url(#bl2)'/><circle cx='1164.0' cy='624.3' r='1.4' fill='#140000' opacity='0.8' filter='url(#bl2)'/><circle cx='1172.0' cy='633.1' r='1.3' fill='#140000' opacity='0.8' filter='url(#bl2)'/><circle cx='1183.9' cy='631.6' r='2.2' fill='#140000' opacity='0.8' filter='url(#bl2)'/><circle cx='1182.7' cy='630.1' r='1.8' fill='#140000' opacity='0.8' filter='url(#bl2)'/><circle cx='1187.0' cy='622.1' r='1.9' fill='#140000' opacity='0.8' filter='url(#bl2)'/><circle cx='1168.7' cy='610.6' r='1.6' fill='#140000' opacity='0.8' filter='url(#bl2)'/><circle cx='1163.0' cy='617.0' r='1.7' fill='#140000' opacity='0.8' filter='url(#bl2)'/><circle cx='1159.4' cy='628.0' r='2.1' fill='#140000' opacity='0.8' filter='url(#bl2)'/><g filter='url(#bl2)'><circle cx='1177.0' cy='611.8' r='1.5' fill='#ff9030'/><circle cx='1184.5' cy='621.8' r='1.5' fill='#ff9030'/><circle cx='1179.7' cy='633.3' r='1.5' fill='#ff9030'/><circle cx='1167.3' cy='634.9' r='1.5' fill='#ff9030'/><circle cx='1159.7' cy='624.9' r='1.5' fill='#ff9030'/><circle cx='1164.6' cy='613.4' r='1.5' fill='#ff9030'/><circle cx='1168.8' cy='624.6' r='1.5' fill='#ff9030'/><circle cx='1170.3' cy='621.0' r='1.5' fill='#ff9030'/><circle cx='1159.5' cy='619.8' r='1.5' fill='#ff9030'/><circle cx='1164.6' cy='616.0' r='1.5' fill='#ff9030'/><circle cx='1167.1' cy='627.7' r='1.5' fill='#ff9030'/><circle cx='1165.7' cy='614.9' r='1.5' fill='#ff9030'/><circle cx='1163.6' cy='624.6' r='1.5' fill='#ff9030'/><circle cx='1164.5' cy='620.7' r='1.5' fill='#ff9030'/><circle cx='1166.7' cy='633.5' r='1.5' fill='#ff9030'/><circle cx='1178.9' cy='613.9' r='1.5' fill='#ff9030'/></g></svg><svg x='1218.4' y='589.6' width='66' height='65.5' viewBox='1218.4 589.6 66 65.5'><rect x='1218.44' y='589.6' width='66' height='65.5' fill='#c02400'/><circle cx='1251.44' cy='622.35' r='28' fill='#a01800' opacity='0.5' filter='url(#bl3)'/><circle cx='1251.44' cy='623.35' r='17' fill='#c83400' filter='url(#bl2)'/><circle cx='1261.6' cy='612.8' r='2.1' fill='#140000' opacity='0.8' filter='url(#bl2)'/><circle cx='1248.0' cy='629.6' r='2.1' fill='#140000' opacity='0.8' filter='url(#bl2)'/><circle cx='1264.8' cy='624.8' r='1.4' fill='#140000' opacity='0.8' filter='url(#bl2)'/><circle cx='1261.9' cy='632.9' r='2.0' fill='#140000' opacity='0.8' filter='url(#bl2)'/><circle cx='1246.2' cy='616.5' r='2.2' fill='#140000' opacity='0.8' filter='url(#bl2)'/><circle cx='1242.6' cy='630.6' r='1.6' fill='#140000' opacity='0.8' filter='url(#bl2)'/><circle cx='1243.3' cy='614.8' r='1.7' fill='#140000' opacity='0.8' filter='url(#bl2)'/><circle cx='1241.5' cy='621.0' r='1.5' fill='#140000' opacity='0.8' filter='url(#bl2)'/><circle cx='1245.7' cy='620.7' r='1.3' fill='#140000' opacity='0.8' filter='url(#bl2)'/><circle cx='1255.1' cy='612.4' r='2.2' fill='#140000' opacity='0.8' filter='url(#bl2)'/><circle cx='1245.0' cy='627.2' r='2.3' fill='#140000' opacity='0.8' filter='url(#bl2)'/><circle cx='1260.3' cy='622.9' r='1.4' fill='#140000' opacity='0.8' filter='url(#bl2)'/><circle cx='1264.7' cy='626.9' r='2.0' fill='#140000' opacity='0.8' filter='url(#bl2)'/><circle cx='1238.6' cy='619.4' r='2.0' fill='#140000' opacity='0.8' filter='url(#bl2)'/><circle cx='1265.8' cy='623.0' r='1.4' fill='#140000' opacity='0.8' filter='url(#bl2)'/><circle cx='1261.9' cy='626.0' r='1.7' fill='#140000' opacity='0.8' filter='url(#bl2)'/><circle cx='1254.5' cy='628.2' r='1.9' fill='#140000' opacity='0.8' filter='url(#bl2)'/><circle cx='1253.9' cy='626.9' r='1.2' fill='#140000' opacity='0.8' filter='url(#bl2)'/><circle cx='1252.0' cy='636.9' r='1.3' fill='#140000' opacity='0.8' filter='url(#bl2)'/><circle cx='1249.0' cy='611.8' r='2.0' fill='#140000' opacity='0.8' filter='url(#bl2)'/><circle cx='1240.6' cy='621.0' r='2.1' fill='#140000' opacity='0.8' filter='url(#bl2)'/><circle cx='1256.0' cy='616.4' r='2.0' fill='#140000' opacity='0.8' filter='url(#bl2)'/><g filter='url(#bl2)'><circle cx='1256.3' cy='611.8' r='1.5' fill='#ffb060'/><circle cx='1263.8' cy='621.8' r='1.5' fill='#ffb060'/><circle cx='1259.0' cy='633.3' r='1.5' fill='#ffb060'/><circle cx='1246.6' cy='634.9' r='1.5' fill='#ffb060'/><circle cx='1239.0' cy='624.9' r='1.5' fill='#ffb060'/><circle cx='1243.9' cy='613.4' r='1.5' fill='#ffb060'/><circle cx='1261.5' cy='615.1' r='1.5' fill='#ffb060'/><circle cx='1238.7' cy='621.8' r='1.5' fill='#ffb060'/><circle cx='1250.4' cy='613.3' r='1.5' fill='#ffb060'/><circle cx='1261.9' cy='625.2' r='1.5' fill='#ffb060'/><circle cx='1255.7' cy='636.1' r='1.5' fill='#ffb060'/><circle cx='1242.1' cy='626.2' r='1.5' fill='#ffb060'/><circle cx='1247.7' cy='621.3' r='1.5' fill='#ffb060'/><circle cx='1255.6' cy='613.4' r='1.5' fill='#ffb060'/><circle cx='1247.6' cy='633.6' r='1.5' fill='#ffb060'/><circle cx='1261.6' cy='620.7' r='1.5' fill='#ffb060'/></g></svg><svg x='1297.8' y='589.6' width='66' height='65.5' viewBox='1297.8 589.6 66 65.5'><rect x='1297.75' y='589.6' width='66' height='65.5' fill='#1a0200'/><circle cx='1297.75' cy='589.6' r='9' fill='#ff7a00' filter='url(#bl3)'/><circle cx='1363.75' cy='589.6' r='9' fill='#ff7a00' filter='url(#bl3)'/><circle cx='1297.75' cy='655.1' r='9' fill='#ff7a00' filter='url(#bl3)'/><circle cx='1363.75' cy='655.1' r='9' fill='#ff7a00' filter='url(#bl3)'/><circle cx='1330.75' cy='623.35' r='17' fill='#4a0c00' filter='url(#bl2)'/><circle cx='1322.6' cy='634.8' r='2.1' fill='#140000' opacity='0.8' filter='url(#bl2)'/><circle cx='1325.2' cy='636.9' r='2.1' fill='#140000' opacity='0.8' filter='url(#bl2)'/><circle cx='1335.2' cy='630.8' r='1.6' fill='#140000' opacity='0.8' filter='url(#bl2)'/><circle cx='1338.6' cy='633.8' r='2.0' fill='#140000' opacity='0.8' filter='url(#bl2)'/><circle cx='1335.1' cy='631.1' r='1.7' fill='#140000' opacity='0.8' filter='url(#bl2)'/><circle cx='1321.7' cy='625.6' r='2.3' fill='#140000' opacity='0.8' filter='url(#bl2)'/><circle cx='1332.8' cy='637.6' r='2.4' fill='#140000' opacity='0.8' filter='url(#bl2)'/><circle cx='1342.1' cy='620.4' r='2.2' fill='#140000' opacity='0.8' filter='url(#bl2)'/><circle cx='1330.7' cy='634.2' r='2.3' fill='#140000' opacity='0.8' filter='url(#bl2)'/><circle cx='1320.1' cy='612.8' r='1.3' fill='#140000' opacity='0.8' filter='url(#bl2)'/><circle cx='1332.1' cy='609.8' r='2.3' fill='#140000' opacity='0.8' filter='url(#bl2)'/><circle cx='1345.4' cy='621.1' r='2.1' fill='#140000' opacity='0.8' filter='url(#bl2)'/><circle cx='1321.5' cy='621.5' r='1.8' fill='#140000' opacity='0.8' filter='url(#bl2)'/><circle cx='1321.6' cy='614.0' r='2.2' fill='#140000' opacity='0.8' filter='url(#bl2)'/><circle cx='1321.7' cy='617.6' r='2.4' fill='#140000' opacity='0.8' filter='url(#bl2)'/><circle cx='1342.9' cy='617.8' r='2.0' fill='#140000' opacity='0.8' filter='url(#bl2)'/><circle cx='1326.1' cy='625.9' r='1.5' fill='#140000' opacity='0.8' filter='url(#bl2)'/><circle cx='1336.1' cy='628.9' r='1.3' fill='#140000' opacity='0.8' filter='url(#bl2)'/><circle cx='1332.9' cy='613.2' r='2.2' fill='#140000' opacity='0.8' filter='url(#bl2)'/><circle cx='1317.9' cy='616.1' r='1.2' fill='#140000' opacity='0.8' filter='url(#bl2)'/><circle cx='1336.9' cy='625.7' r='2.2' fill='#140000' opacity='0.8' filter='url(#bl2)'/><circle cx='1329.3' cy='615.0' r='1.7' fill='#140000' opacity='0.8' filter='url(#bl2)'/><g filter='url(#bl2)'><circle cx='1335.6' cy='611.8' r='1.5' fill='#ff8a30'/><circle cx='1343.2' cy='621.8' r='1.5' fill='#ff8a30'/><circle cx='1338.3' cy='633.3' r='1.5' fill='#ff8a30'/><circle cx='1325.9' cy='634.9' r='1.5' fill='#ff8a30'/><circle cx='1318.3' cy='624.9' r='1.5' fill='#ff8a30'/><circle cx='1323.2' cy='613.4' r='1.5' fill='#ff8a30'/><circle cx='1337.1' cy='614.8' r='1.5' fill='#ff8a30'/><circle cx='1340.9' cy='628.5' r='1.5' fill='#ff8a30'/><circle cx='1323.9' cy='632.1' r='1.5' fill='#ff8a30'/><circle cx='1329.2' cy='637.1' r='1.5' fill='#ff8a30'/><circle cx='1336.8' cy='620.1' r='1.5' fill='#ff8a30'/><circle cx='1338.6' cy='627.8' r='1.5' fill='#ff8a30'/><circle cx='1341.7' cy='617.3' r='1.5' fill='#ff8a30'/><circle cx='1335.6' cy='631.9' r='1.5' fill='#ff8a30'/><circle cx='1323.8' cy='634.4' r='1.5' fill='#ff8a30'/><circle cx='1337.4' cy='625.2' r='1.5' fill='#ff8a30'/></g></svg><svg x='1377.1' y='589.6' width='66' height='65.5' viewBox='1377.1 589.6 66 65.5'><rect x='1377.06' y='589.6' width='66' height='65.5' fill='#200200'/><circle cx='1410.06' cy='623.35' r='17' fill='#400800' filter='url(#bl2)'/><circle cx='1420.3' cy='616.0' r='1.2' fill='#140000' opacity='0.8' filter='url(#bl2)'/><circle cx='1416.3' cy='610.2' r='1.3' fill='#140000' opacity='0.8' filter='url(#bl2)'/><circle cx='1414.6' cy='610.7' r='1.4' fill='#140000' opacity='0.8' filter='url(#bl2)'/><circle cx='1400.4' cy='634.5' r='1.7' fill='#140000' opacity='0.8' filter='url(#bl2)'/><circle cx='1405.6' cy='612.1' r='2.1' fill='#140000' opacity='0.8' filter='url(#bl2)'/><circle cx='1402.2' cy='624.1' r='1.4' fill='#140000' opacity='0.8' filter='url(#bl2)'/><circle cx='1402.2' cy='623.8' r='1.3' fill='#140000' opacity='0.8' filter='url(#bl2)'/><circle cx='1413.6' cy='615.2' r='1.4' fill='#140000' opacity='0.8' filter='url(#bl2)'/><circle cx='1419.7' cy='625.7' r='2.1' fill='#140000' opacity='0.8' filter='url(#bl2)'/><circle cx='1412.0' cy='627.7' r='2.1' fill='#140000' opacity='0.8' filter='url(#bl2)'/><circle cx='1400.6' cy='620.1' r='1.9' fill='#140000' opacity='0.8' filter='url(#bl2)'/><circle cx='1400.7' cy='628.2' r='1.4' fill='#140000' opacity='0.8' filter='url(#bl2)'/><circle cx='1411.7' cy='628.8' r='1.5' fill='#140000' opacity='0.8' filter='url(#bl2)'/><circle cx='1416.7' cy='618.0' r='1.5' fill='#140000' opacity='0.8' filter='url(#bl2)'/><circle cx='1409.4' cy='628.7' r='1.4' fill='#140000' opacity='0.8' filter='url(#bl2)'/><circle cx='1423.1' cy='619.4' r='2.1' fill='#140000' opacity='0.8' filter='url(#bl2)'/><circle cx='1396.1' cy='618.8' r='1.7' fill='#140000' opacity='0.8' filter='url(#bl2)'/><circle cx='1404.7' cy='615.7' r='1.5' fill='#140000' opacity='0.8' filter='url(#bl2)'/><circle cx='1401.7' cy='630.3' r='2.0' fill='#140000' opacity='0.8' filter='url(#bl2)'/><circle cx='1402.4' cy='611.6' r='1.4' fill='#140000' opacity='0.8' filter='url(#bl2)'/><circle cx='1408.7' cy='611.9' r='1.8' fill='#140000' opacity='0.8' filter='url(#bl2)'/><circle cx='1413.3' cy='625.5' r='1.8' fill='#140000' opacity='0.8' filter='url(#bl2)'/><g filter='url(#bl2)'><circle cx='1414.9' cy='611.8' r='1.5' fill='#ff7a20'/><circle cx='1422.5' cy='621.8' r='1.5' fill='#ff7a20'/><circle cx='1417.6' cy='633.3' r='1.5' fill='#ff7a20'/><circle cx='1405.2' cy='634.9' r='1.5' fill='#ff7a20'/><circle cx='1397.7' cy='624.9' r='1.5' fill='#ff7a20'/><circle cx='1402.5' cy='613.4' r='1.5' fill='#ff7a20'/><circle cx='1398.2' cy='623.7' r='1.5' fill='#ff7a20'/><circle cx='1398.7' cy='619.7' r='1.5' fill='#ff7a20'/><circle cx='1412.8' cy='635.8' r='1.5' fill='#ff7a20'/><circle cx='1409.9' cy='610.6' r='1.5' fill='#ff7a20'/><circle cx='1410.8' cy='628.0' r='1.5' fill='#ff7a20'/><circle cx='1411.8' cy='616.0' r='1.5' fill='#ff7a20'/><circle cx='1420.2' cy='628.0' r='1.5' fill='#ff7a20'/><circle cx='1405.8' cy='634.6' r='1.5' fill='#ff7a20'/><circle cx='1407.8' cy='636.2' r='1.5' fill='#ff7a20'/><circle cx='1407.9' cy='627.2' r='1.5' fill='#ff7a20'/></g></svg><svg x='1456.4' y='589.6' width='66' height='65.5' viewBox='1456.4 589.6 66 65.5'><rect x='1456.3700000000001' y='589.6' width='66' height='65.5' fill='#e05a10'/><circle cx='1472.6' cy='627.7' r='3' fill='#ff8a30' opacity='0.5' filter='url(#bl2)'/><circle cx='1520.5' cy='632.7' r='3' fill='#ff8a30' opacity='0.5' filter='url(#bl2)'/><circle cx='1488.2' cy='609.8' r='3' fill='#ff8a30' opacity='0.5' filter='url(#bl2)'/><circle cx='1465.5' cy='655.0' r='3' fill='#ff8a30' opacity='0.5' filter='url(#bl2)'/><circle cx='1506.2' cy='606.0' r='3' fill='#ff8a30' opacity='0.5' filter='url(#bl2)'/><circle cx='1495.6' cy='636.0' r='3' fill='#ff8a30' opacity='0.5' filter='url(#bl2)'/><circle cx='1516.2' cy='608.0' r='3' fill='#ff8a30' opacity='0.5' filter='url(#bl2)'/><circle cx='1477.1' cy='601.9' r='3' fill='#ff8a30' opacity='0.5' filter='url(#bl2)'/><circle cx='1495.3' cy='650.0' r='3' fill='#ff8a30' opacity='0.5' filter='url(#bl2)'/><circle cx='1504.8' cy='598.7' r='3' fill='#ff8a30' opacity='0.5' filter='url(#bl2)'/><circle cx='1480.9' cy='594.6' r='3' fill='#ff8a30' opacity='0.5' filter='url(#bl2)'/><circle cx='1467.0' cy='621.9' r='3' fill='#ff8a30' opacity='0.5' filter='url(#bl2)'/><circle cx='1466.5' cy='607.3' r='3' fill='#ff8a30' opacity='0.5' filter='url(#bl2)'/><circle cx='1472.4' cy='617.3' r='3' fill='#ff8a30' opacity='0.5' filter='url(#bl2)'/><circle cx='1512.8' cy='605.0' r='3' fill='#ff8a30' opacity='0.5' filter='url(#bl2)'/><circle cx='1496.8' cy='615.8' r='3' fill='#ff8a30' opacity='0.5' filter='url(#bl2)'/><circle cx='1475.6' cy='609.1' r='3' fill='#ff8a30' opacity='0.5' filter='url(#bl2)'/><circle cx='1507.8' cy='644.8' r='3' fill='#ff8a30' opacity='0.5' filter='url(#bl2)'/><circle cx='1504.7' cy='647.8' r='3' fill='#ff8a30' opacity='0.5' filter='url(#bl2)'/><circle cx='1504.4' cy='609.2' r='3' fill='#ff8a30' opacity='0.5' filter='url(#bl2)'/><circle cx='1471.8' cy='626.7' r='3' fill='#ff8a30' opacity='0.5' filter='url(#bl2)'/><circle cx='1496.6' cy='641.0' r='3' fill='#ff8a30' opacity='0.5' filter='url(#bl2)'/><circle cx='1516.2' cy='641.9' r='3' fill='#ff8a30' opacity='0.5' filter='url(#bl2)'/><circle cx='1520.8' cy='633.8' r='3' fill='#ff8a30' opacity='0.5' filter='url(#bl2)'/><circle cx='1501.4' cy='642.0' r='3' fill='#ff8a30' opacity='0.5' filter='url(#bl2)'/><circle cx='1489.2' cy='641.9' r='3' fill='#ff8a30' opacity='0.5' filter='url(#bl2)'/><circle cx='1514.1' cy='623.2' r='3' fill='#ff8a30' opacity='0.5' filter='url(#bl2)'/><circle cx='1479.0' cy='614.6' r='3' fill='#ff8a30' opacity='0.5' filter='url(#bl2)'/><circle cx='1496.8' cy='626.7' r='3' fill='#ff8a30' opacity='0.5' filter='url(#bl2)'/><circle cx='1489.0' cy='615.1' r='3' fill='#ff8a30' opacity='0.5' filter='url(#bl2)'/><circle cx='1505.1' cy='634.5' r='3' fill='#ff8a30' opacity='0.5' filter='url(#bl2)'/><circle cx='1518.2' cy='652.6' r='3' fill='#ff8a30' opacity='0.5' filter='url(#bl2)'/><circle cx='1457.3' cy='615.8' r='3' fill='#ff8a30' opacity='0.5' filter='url(#bl2)'/><circle cx='1505.4' cy='624.7' r='3' fill='#ff8a30' opacity='0.5' filter='url(#bl2)'/><circle cx='1497.2' cy='606.4' r='3' fill='#ff8a30' opacity='0.5' filter='url(#bl2)'/><circle cx='1481.8' cy='646.0' r='3' fill='#ff8a30' opacity='0.5' filter='url(#bl2)'/><circle cx='1500.6' cy='647.1' r='3' fill='#ff8a30' opacity='0.5' filter='url(#bl2)'/><circle cx='1517.0' cy='649.9' r='3' fill='#ff8a30' opacity='0.5' filter='url(#bl2)'/><circle cx='1513.5' cy='649.6' r='3' fill='#ff8a30' opacity='0.5' filter='url(#bl2)'/><circle cx='1515.6' cy='650.5' r='3' fill='#ff8a30' opacity='0.5' filter='url(#bl2)'/><circle cx='1489.3700000000001' cy='623.35' r='17' fill='#c84010' filter='url(#bl2)'/><circle cx='1481.3' cy='628.6' r='1.7' fill='#140000' opacity='0.8' filter='url(#bl2)'/><circle cx='1502.4' cy='621.5' r='2.0' fill='#140000' opacity='0.8' filter='url(#bl2)'/><circle cx='1497.9' cy='628.2' r='1.4' fill='#140000' opacity='0.8' filter='url(#bl2)'/><circle cx='1491.7' cy='626.5' r='1.2' fill='#140000' opacity='0.8' filter='url(#bl2)'/><circle cx='1486.2' cy='632.3' r='2.3' fill='#140000' opacity='0.8' filter='url(#bl2)'/><circle cx='1494.3' cy='626.6' r='2.3' fill='#140000' opacity='0.8' filter='url(#bl2)'/><circle cx='1475.0' cy='622.2' r='1.8' fill='#140000' opacity='0.8' filter='url(#bl2)'/><circle cx='1482.4' cy='628.6' r='1.5' fill='#140000' opacity='0.8' filter='url(#bl2)'/><circle cx='1494.1' cy='622.6' r='2.2' fill='#140000' opacity='0.8' filter='url(#bl2)'/><circle cx='1497.7' cy='634.5' r='2.0' fill='#140000' opacity='0.8' filter='url(#bl2)'/><circle cx='1488.6' cy='619.7' r='1.3' fill='#140000' opacity='0.8' filter='url(#bl2)'/><circle cx='1495.7' cy='633.2' r='2.4' fill='#140000' opacity='0.8' filter='url(#bl2)'/><circle cx='1476.6' cy='629.8' r='2.3' fill='#140000' opacity='0.8' filter='url(#bl2)'/><circle cx='1495.2' cy='635.3' r='2.2' fill='#140000' opacity='0.8' filter='url(#bl2)'/><circle cx='1489.0' cy='637.4' r='2.0' fill='#140000' opacity='0.8' filter='url(#bl2)'/><circle cx='1497.5' cy='624.7' r='1.8' fill='#140000' opacity='0.8' filter='url(#bl2)'/><circle cx='1491.6' cy='618.3' r='2.0' fill='#140000' opacity='0.8' filter='url(#bl2)'/><circle cx='1483.3' cy='627.5' r='1.3' fill='#140000' opacity='0.8' filter='url(#bl2)'/><circle cx='1482.2' cy='618.0' r='2.2' fill='#140000' opacity='0.8' filter='url(#bl2)'/><circle cx='1478.7' cy='613.1' r='1.7' fill='#140000' opacity='0.8' filter='url(#bl2)'/><circle cx='1477.2' cy='616.4' r='2.2' fill='#140000' opacity='0.8' filter='url(#bl2)'/><circle cx='1496.2' cy='617.6' r='1.4' fill='#140000' opacity='0.8' filter='url(#bl2)'/><g filter='url(#bl2)'><circle cx='1494.2' cy='611.8' r='1.5' fill='#fff0d0'/><circle cx='1501.8' cy='621.8' r='1.5' fill='#fff0d0'/><circle cx='1496.9' cy='633.3' r='1.5' fill='#fff0d0'/><circle cx='1484.5' cy='634.9' r='1.5' fill='#fff0d0'/><circle cx='1477.0' cy='624.9' r='1.5' fill='#fff0d0'/><circle cx='1481.8' cy='613.4' r='1.5' fill='#fff0d0'/><circle cx='1490.6' cy='632.1' r='1.5' fill='#fff0d0'/><circle cx='1483.0' cy='617.6' r='1.5' fill='#fff0d0'/><circle cx='1502.5' cy='626.7' r='1.5' fill='#fff0d0'/><circle cx='1491.5' cy='633.8' r='1.5' fill='#fff0d0'/><circle cx='1488.8' cy='610.7' r='1.5' fill='#fff0d0'/><circle cx='1502.8' cy='620.3' r='1.5' fill='#fff0d0'/><circle cx='1488.7' cy='634.6' r='1.5' fill='#fff0d0'/><circle cx='1478.0' cy='626.6' r='1.5' fill='#fff0d0'/><circle cx='1495.0' cy='627.9' r='1.5' fill='#fff0d0'/><circle cx='1477.2' cy='628.5' r='1.5' fill='#fff0d0'/></g><g filter='url(#bl2)'><circle cx='1483.4' cy='621.4' r='3.2' fill='#200000'/><circle cx='1495.4' cy='621.4' r='3.2' fill='#200000'/><circle cx='1489.4' cy='629.4' r='3.2' fill='#200000'/></g><g filter='url(#bl2)'><circle cx='1480.4' cy='618.4' r='1.8' fill='#fff4e0'/><circle cx='1498.4' cy='618.4' r='1.8' fill='#fff4e0'/></g></svg><svg x='1535.7' y='589.6' width='66' height='65.5' viewBox='1535.7 589.6 66 65.5'><rect x='1535.68' y='589.6' width='66' height='65.5' fill='#160200'/><circle cx='1568.68' cy='623.35' r='17' fill='#300400' filter='url(#bl2)'/><circle cx='1570.9' cy='618.4' r='2.3' fill='#140000' opacity='0.8' filter='url(#bl2)'/><circle cx='1567.1' cy='632.5' r='1.4' fill='#140000' opacity='0.8' filter='url(#bl2)'/><circle cx='1569.6' cy='627.5' r='1.4' fill='#140000' opacity='0.8' filter='url(#bl2)'/><circle cx='1573.7' cy='636.3' r='1.4' fill='#140000' opacity='0.8' filter='url(#bl2)'/><circle cx='1581.2' cy='616.2' r='1.3' fill='#140000' opacity='0.8' filter='url(#bl2)'/><circle cx='1577.2' cy='622.7' r='1.7' fill='#140000' opacity='0.8' filter='url(#bl2)'/><circle cx='1564.4' cy='612.3' r='2.0' fill='#140000' opacity='0.8' filter='url(#bl2)'/><circle cx='1568.1' cy='619.9' r='2.2' fill='#140000' opacity='0.8' filter='url(#bl2)'/><g filter='url(#bl2)'><circle cx='1573.5' cy='611.8' r='1.5' fill='#ffb060'/><circle cx='1581.1' cy='621.8' r='1.5' fill='#ffb060'/><circle cx='1576.2' cy='633.3' r='1.5' fill='#ffb060'/><circle cx='1563.8' cy='634.9' r='1.5' fill='#ffb060'/><circle cx='1556.3' cy='624.9' r='1.5' fill='#ffb060'/><circle cx='1561.1' cy='613.4' r='1.5' fill='#ffb060'/><circle cx='1563.4' cy='631.1' r='1.5' fill='#ffb060'/><circle cx='1580.6' cy='622.5' r='1.5' fill='#ffb060'/><circle cx='1572.8' cy='636.3' r='1.5' fill='#ffb060'/><circle cx='1556.5' cy='624.1' r='1.5' fill='#ffb060'/><circle cx='1582.4' cy='620.8' r='1.5' fill='#ffb060'/><circle cx='1576.6' cy='617.7' r='1.5' fill='#ffb060'/><circle cx='1578.7' cy='631.8' r='1.5' fill='#ffb060'/><circle cx='1577.1' cy='620.4' r='1.5' fill='#ffb060'/><circle cx='1562.4' cy='625.9' r='1.5' fill='#ffb060'/><circle cx='1562.0' cy='632.2' r='1.5' fill='#ffb060'/></g><circle cx='1568.68' cy='623.35' r='13.5' fill='none' stroke='#ff7a20' stroke-width='3' stroke-dasharray='5 2.5' filter='url(#bl2)'/><ellipse cx='1562.2' cy='619.4' rx='3' ry='3.6' transform='rotate(0 1562.2 619.4)' fill='#fff0e0' filter='url(#bl2)'/><ellipse cx='1575.2' cy='619.4' rx='3' ry='3.6' transform='rotate(0 1575.2 619.4)' fill='#fff0e0' filter='url(#bl2)'/><ellipse cx='1562.7' cy='619.4' rx='1.6' ry='2.2' transform='rotate(0 1562.7 619.4)' fill='#ff8030' filter='url(#bl2)'/><ellipse cx='1575.7' cy='619.4' rx='1.6' ry='2.2' transform='rotate(0 1575.7 619.4)' fill='#ff8030' filter='url(#bl2)'/><ellipse cx='1568.7' cy='630.4' rx='4' ry='2.4' transform='rotate(0 1568.7 630.4)' fill='#fff0e0' filter='url(#bl2)'/></svg><svg x='1615.0' y='589.6' width='66' height='65.5' viewBox='1615.0 589.6 66 65.5'><rect x='1614.99' y='589.6' width='66' height='65.5' fill='#120000'/><circle cx='1647.99' cy='623.35' r='17' fill='#300200' filter='url(#bl2)'/><circle cx='1640.3' cy='625.4' r='1.9' fill='#140000' opacity='0.8' filter='url(#bl2)'/><circle cx='1643.2' cy='623.3' r='2.3' fill='#140000' opacity='0.8' filter='url(#bl2)'/><circle cx='1636.8' cy='622.0' r='2.1' fill='#140000' opacity='0.8' filter='url(#bl2)'/><circle cx='1646.4' cy='633.3' r='2.2' fill='#140000' opacity='0.8' filter='url(#bl2)'/><circle cx='1652.7' cy='619.4' r='2.3' fill='#140000' opacity='0.8' filter='url(#bl2)'/><circle cx='1636.9' cy='622.2' r='1.3' fill='#140000' opacity='0.8' filter='url(#bl2)'/><circle cx='1648.9' cy='617.2' r='2.1' fill='#140000' opacity='0.8' filter='url(#bl2)'/><circle cx='1655.7' cy='632.3' r='2.1' fill='#140000' opacity='0.8' filter='url(#bl2)'/><g filter='url(#bl2)'><circle cx='1652.9' cy='611.8' r='1.5' fill='#ffb060'/><circle cx='1660.4' cy='621.8' r='1.5' fill='#ffb060'/><circle cx='1655.5' cy='633.3' r='1.5' fill='#ffb060'/><circle cx='1643.1' cy='634.9' r='1.5' fill='#ffb060'/><circle cx='1635.6' cy='624.9' r='1.5' fill='#ffb060'/><circle cx='1640.5' cy='613.4' r='1.5' fill='#ffb060'/><circle cx='1657.6' cy='613.3' r='1.5' fill='#ffb060'/><circle cx='1637.2' cy='627.2' r='1.5' fill='#ffb060'/><circle cx='1653.2' cy='630.8' r='1.5' fill='#ffb060'/><circle cx='1650.8' cy='622.8' r='1.5' fill='#ffb060'/><circle cx='1641.2' cy='629.0' r='1.5' fill='#ffb060'/><circle cx='1657.7' cy='622.3' r='1.5' fill='#ffb060'/><circle cx='1643.1' cy='610.9' r='1.5' fill='#ffb060'/><circle cx='1635.8' cy='621.3' r='1.5' fill='#ffb060'/><circle cx='1651.2' cy='612.5' r='1.5' fill='#ffb060'/><circle cx='1658.9' cy='626.8' r='1.5' fill='#ffb060'/></g><circle cx='1647.99' cy='623.35' r='14' fill='none' stroke='#ff8a20' stroke-width='4' stroke-dasharray='6 3' filter='url(#bl2)'/><circle cx='1647.99' cy='623.35' r='8.5' fill='#200000' filter='url(#bl2)'/><g filter='url(#bl2)'><circle cx='1648.0' cy='635.4' r='2' fill='#fff0c0'/></g></svg><svg x='901.2' y='668.0' width='66' height='65.5' viewBox='901.2 668.0 66 65.5'><rect x='901.2' y='668.0' width='66' height='65.5' fill='#000'/><circle cx='934.2' cy='701.75' r='13' fill='#4a0600' filter='url(#bl1)'/><g filter='url(#bl2)'><circle cx='926.2' cy='694.8' r='1.5' fill='#ffa030'/><circle cx='924.2' cy='698.8' r='1.5' fill='#ffa030'/><circle cx='942.2' cy='694.8' r='1.5' fill='#ffa030'/><circle cx='944.2' cy='698.8' r='1.5' fill='#ffa030'/><circle cx='932.0' cy='709.2' r='1.5' fill='#ffa030'/><circle cx='936.4' cy='709.2' r='1.5' fill='#ffa030'/></g></svg><svg x='980.5' y='668.0' width='66' height='65.5' viewBox='980.5 668.0 66 65.5'><rect x='980.51' y='668.0' width='66' height='65.5' fill='#000'/><circle cx='1013.51' cy='701.75' r='13' fill='#3a0400' filter='url(#bl1)'/><g filter='url(#bl2)'><circle cx='1005.5' cy='694.8' r='1.5' fill='#ffa030'/><circle cx='1003.5' cy='698.8' r='1.5' fill='#ffa030'/><circle cx='1021.5' cy='694.8' r='1.5' fill='#ffa030'/><circle cx='1023.5' cy='698.8' r='1.5' fill='#ffa030'/><circle cx='1011.3' cy='709.2' r='1.5' fill='#ffa030'/><circle cx='1015.7' cy='709.2' r='1.5' fill='#ffa030'/></g></svg><svg x='1059.8' y='668.0' width='66' height='65.5' viewBox='1059.8 668.0 66 65.5'><rect x='1059.8200000000002' y='668.0' width='66' height='65.5' fill='#000'/><circle cx='1092.8200000000002' cy='701.75' r='13' fill='#3a0400' filter='url(#bl1)'/><g filter='url(#bl2)'><circle cx='1084.8' cy='694.8' r='1.5' fill='#ffa030'/><circle cx='1082.8' cy='698.8' r='1.5' fill='#ffa030'/><circle cx='1100.8' cy='694.8' r='1.5' fill='#ffa030'/><circle cx='1102.8' cy='698.8' r='1.5' fill='#ffa030'/><circle cx='1090.6' cy='709.2' r='1.5' fill='#ffa030'/><circle cx='1095.0' cy='709.2' r='1.5' fill='#ffa030'/></g></svg><svg x='1139.1' y='668.0' width='66' height='65.5' viewBox='1139.1 668.0 66 65.5'><rect x='1139.13' y='668.0' width='66' height='65.5' fill='#000'/><circle cx='1172.13' cy='701.75' r='13' fill='#901800' filter='url(#bl1)'/><ellipse cx='1164.6' cy='698.8' rx='2' ry='3.5' transform='rotate(20 1164.6 698.8)' fill='#ff8a10' filter='url(#bl2)'/><ellipse cx='1179.6' cy='698.8' rx='2' ry='3.5' transform='rotate(-20 1179.6 698.8)' fill='#ff8a10' filter='url(#bl2)'/><ellipse cx='1172.1' cy='709.8' rx='3.5' ry='2' transform='rotate(0 1172.1 709.8)' fill='#ffc060' filter='url(#bl2)'/></svg><svg x='1218.4' y='668.0' width='66' height='65.5' viewBox='1218.4 668.0 66 65.5'><rect x='1218.44' y='668.0' width='66' height='65.5' fill='#000'/><circle cx='1251.44' cy='701.75' r='13' fill='#6a0c00' filter='url(#bl1)'/><g filter='url(#bl2)'><circle cx='1244.4' cy='697.8' r='2.2' fill='#b02800'/><circle cx='1258.4' cy='697.8' r='2.2' fill='#b02800'/></g><g filter='url(#bl2)'><circle cx='1251.4' cy='709.8' r='1.8' fill='#ffb040'/></g></svg><svg x='1297.8' y='668.0' width='66' height='65.5' viewBox='1297.8 668.0 66 65.5'><rect x='1297.75' y='668.0' width='66' height='65.5' fill='#000'/><circle cx='1330.75' cy='701.75' r='13' fill='#a01c00' filter='url(#bl1)'/><g filter='url(#bl2)' opacity='1'><circle cx='1340.8' cy='700.8' r='2.8' fill='#e04400'/><circle cx='1337.8' cy='707.8' r='2.8' fill='#e04400'/><circle cx='1330.8' cy='710.8' r='2.8' fill='#e04400'/><circle cx='1323.7' cy='707.8' r='2.8' fill='#e04400'/><circle cx='1320.8' cy='700.8' r='2.8' fill='#e04400'/><circle cx='1323.7' cy='693.7' r='2.8' fill='#e04400'/><circle cx='1330.8' cy='690.8' r='2.8' fill='#e04400'/><circle cx='1337.8' cy='693.7' r='2.8' fill='#e04400'/></g><g filter='url(#bl2)'><circle cx='1322.8' cy='695.8' r='1.8' fill='#ffa030'/><circle cx='1338.8' cy='695.8' r='1.8' fill='#ffa030'/><circle cx='1330.8' cy='709.8' r='1.8' fill='#ffa030'/><circle cx='1323.8' cy='704.8' r='1.8' fill='#ffa030'/><circle cx='1337.8' cy='704.8' r='1.8' fill='#ffa030'/></g></svg><svg x='1377.1' y='668.0' width='66' height='65.5' viewBox='1377.1 668.0 66 65.5'><rect x='1377.06' y='668.0' width='66' height='65.5' fill='#000'/><circle cx='1410.06' cy='701.75' r='13' fill='#901800' filter='url(#bl1)'/><g filter='url(#bl2)' opacity='1'><circle cx='1420.1' cy='700.8' r='2.8' fill='#e04400'/><circle cx='1417.1' cy='707.8' r='2.8' fill='#e04400'/><circle cx='1410.1' cy='710.8' r='2.8' fill='#e04400'/><circle cx='1403.0' cy='707.8' r='2.8' fill='#e04400'/><circle cx='1400.1' cy='700.8' r='2.8' fill='#e04400'/><circle cx='1403.0' cy='693.7' r='2.8' fill='#e04400'/><circle cx='1410.1' cy='690.8' r='2.8' fill='#e04400'/><circle cx='1417.1' cy='693.7' r='2.8' fill='#e04400'/></g><g filter='url(#bl2)'><circle cx='1402.1' cy='695.8' r='1.8' fill='#ffa030'/><circle cx='1418.1' cy='695.8' r='1.8' fill='#ffa030'/><circle cx='1410.1' cy='709.8' r='1.8' fill='#ffa030'/><circle cx='1403.1' cy='704.8' r='1.8' fill='#ffa030'/><circle cx='1417.1' cy='704.8' r='1.8' fill='#ffa030'/></g></svg><svg x='1456.4' y='668.0' width='66' height='65.5' viewBox='1456.4 668.0 66 65.5'><rect x='1456.3700000000001' y='668.0' width='66' height='65.5' fill='#000'/><circle cx='1489.3700000000001' cy='701.75' r='13' fill='#a01c00' filter='url(#bl1)'/><g filter='url(#bl2)' opacity='1'><circle cx='1499.4' cy='700.8' r='2.8' fill='#e04400'/><circle cx='1496.4' cy='707.8' r='2.8' fill='#e04400'/><circle cx='1489.4' cy='710.8' r='2.8' fill='#e04400'/><circle cx='1482.3' cy='707.8' r='2.8' fill='#e04400'/><circle cx='1479.4' cy='700.8' r='2.8' fill='#e04400'/><circle cx='1482.3' cy='693.7' r='2.8' fill='#e04400'/><circle cx='1489.4' cy='690.8' r='2.8' fill='#e04400'/><circle cx='1496.4' cy='693.7' r='2.8' fill='#e04400'/></g><g filter='url(#bl2)'><circle cx='1481.4' cy='695.8' r='1.8' fill='#ffa030'/><circle cx='1497.4' cy='695.8' r='1.8' fill='#ffa030'/><circle cx='1489.4' cy='709.8' r='1.8' fill='#ffa030'/><circle cx='1482.4' cy='704.8' r='1.8' fill='#ffa030'/><circle cx='1496.4' cy='704.8' r='1.8' fill='#ffa030'/></g></svg><svg x='1535.7' y='668.0' width='66' height='65.5' viewBox='1535.7 668.0 66 65.5'><rect x='1535.68' y='668.0' width='66' height='65.5' fill='#000'/><circle cx='1568.68' cy='701.75' r='13' fill='#2a0200' filter='url(#bl1)'/><ellipse cx='1562.2' cy='698.2' rx='1.6' ry='3.5' transform='rotate(30 1562.2 698.2)' fill='#ffa020' filter='url(#bl2)'/><ellipse cx='1575.2' cy='698.2' rx='1.6' ry='3.5' transform='rotate(-30 1575.2 698.2)' fill='#ffa020' filter='url(#bl2)'/><ellipse cx='1568.7' cy='707.8' rx='3.5' ry='1.6' transform='rotate(0 1568.7 707.8)' fill='#ff9010' filter='url(#bl2)'/></svg><svg x='1615.0' y='668.0' width='66' height='65.5' viewBox='1615.0 668.0 66 65.5'><rect x='1614.99' y='668.0' width='66' height='65.5' fill='#000'/><circle cx='1647.99' cy='701.75' r='13' fill='#2a0200' filter='url(#bl1)'/><ellipse cx='1641.5' cy='698.2' rx='1.6' ry='3.5' transform='rotate(30 1641.5 698.2)' fill='#ffa020' filter='url(#bl2)'/><ellipse cx='1654.5' cy='698.2' rx='1.6' ry='3.5' transform='rotate(-30 1654.5 698.2)' fill='#ffa020' filter='url(#bl2)'/><ellipse cx='1648.0' cy='707.8' rx='3.5' ry='1.6' transform='rotate(0 1648.0 707.8)' fill='#ff9010' filter='url(#bl2)'/></svg><svg x='901.2' y='746.4' width='66' height='65.5' viewBox='901.2 746.4 66 65.5'><rect x='901.2' y='746.4' width='66' height='65.5' fill='#000048'/><g filter='url(#bl2)' opacity='0.5'><circle cx='947.2' cy='779.1' r='2.2' fill='#1818e8'/><circle cx='945.5' cy='785.6' r='2.2' fill='#1818e8'/><circle cx='940.7' cy='790.4' r='2.2' fill='#1818e8'/><circle cx='934.2' cy='792.1' r='2.2' fill='#1818e8'/><circle cx='927.7' cy='790.4' r='2.2' fill='#1818e8'/><circle cx='922.9' cy='785.6' r='2.2' fill='#1818e8'/><circle cx='921.2' cy='779.1' r='2.2' fill='#1818e8'/><circle cx='922.9' cy='772.6' r='2.2' fill='#1818e8'/><circle cx='927.7' cy='767.9' r='2.2' fill='#1818e8'/><circle cx='934.2' cy='766.1' r='2.2' fill='#1818e8'/><circle cx='940.7' cy='767.9' r='2.2' fill='#1818e8'/><circle cx='945.5' cy='772.6' r='2.2' fill='#1818e8'/></g><circle cx='934.2' cy='779.15' r='12' fill='#0000a0' opacity='0.5' filter='url(#bl1)'/><ellipse cx='927.2' cy='776.1' rx='3.2' ry='5.5' transform='rotate(25 927.2 776.1)' fill='#ffffff' filter='url(#bl2)'/><ellipse cx='927.2' cy='776.1' rx='2.2' ry='4.5' transform='rotate(25 927.2 776.1)' fill='#e00000' filter='url(#bl2)'/><ellipse cx='941.2' cy='776.1' rx='3.2' ry='5.5' transform='rotate(-25 941.2 776.1)' fill='#ffffff' filter='url(#bl2)'/><ellipse cx='941.2' cy='776.1' rx='2.2' ry='4.5' transform='rotate(-25 941.2 776.1)' fill='#e00000' filter='url(#bl2)'/><ellipse cx='934.2' cy='786.6' rx='5.5' ry='3' transform='rotate(0 934.2 786.6)' fill='#ffffff' filter='url(#bl2)'/><ellipse cx='934.2' cy='786.6' rx='4.5' ry='2' transform='rotate(0 934.2 786.6)' fill='#e00000' filter='url(#bl2)'/></svg><svg x='980.5' y='746.4' width='66' height='65.5' viewBox='980.5 746.4 66 65.5'><rect x='980.51' y='746.4' width='66' height='65.5' fill='#000048'/><g filter='url(#bl2)' opacity='0.5'><circle cx='1026.5' cy='779.1' r='2.2' fill='#1818e8'/><circle cx='1024.8' cy='785.6' r='2.2' fill='#1818e8'/><circle cx='1020.0' cy='790.4' r='2.2' fill='#1818e8'/><circle cx='1013.5' cy='792.1' r='2.2' fill='#1818e8'/><circle cx='1007.0' cy='790.4' r='2.2' fill='#1818e8'/><circle cx='1002.3' cy='785.6' r='2.2' fill='#1818e8'/><circle cx='1000.5' cy='779.1' r='2.2' fill='#1818e8'/><circle cx='1002.3' cy='772.6' r='2.2' fill='#1818e8'/><circle cx='1007.0' cy='767.9' r='2.2' fill='#1818e8'/><circle cx='1013.5' cy='766.1' r='2.2' fill='#1818e8'/><circle cx='1020.0' cy='767.9' r='2.2' fill='#1818e8'/><circle cx='1024.8' cy='772.6' r='2.2' fill='#1818e8'/></g><circle cx='1013.51' cy='779.15' r='12' fill='#0000a0' opacity='0.5' filter='url(#bl1)'/><ellipse cx='1005.5' cy='776.1' rx='3' ry='2.6' transform='rotate(0 1005.5 776.1)' fill='#ffffff' filter='url(#bl2)'/><ellipse cx='1005.5' cy='776.1' rx='2.1' ry='1.8' transform='rotate(0 1005.5 776.1)' fill='#e00000' filter='url(#bl2)'/><ellipse cx='1021.5' cy='776.1' rx='3' ry='2.6' transform='rotate(0 1021.5 776.1)' fill='#ffffff' filter='url(#bl2)'/><ellipse cx='1021.5' cy='776.1' rx='2.1' ry='1.8' transform='rotate(0 1021.5 776.1)' fill='#e00000' filter='url(#bl2)'/><ellipse cx='1013.5' cy='787.1' rx='3' ry='2.6' transform='rotate(0 1013.5 787.1)' fill='#ffffff' filter='url(#bl2)'/><ellipse cx='1013.5' cy='787.1' rx='2.1' ry='1.8' transform='rotate(0 1013.5 787.1)' fill='#e00000' filter='url(#bl2)'/></svg><svg x='1059.8' y='746.4' width='66' height='65.5' viewBox='1059.8 746.4 66 65.5'><rect x='1059.8200000000002' y='746.4' width='66' height='65.5' fill='#000048'/><g filter='url(#bl2)' opacity='0.5'><circle cx='1105.8' cy='779.1' r='2.2' fill='#1818e8'/><circle cx='1104.1' cy='785.6' r='2.2' fill='#1818e8'/><circle cx='1099.3' cy='790.4' r='2.2' fill='#1818e8'/><circle cx='1092.8' cy='792.1' r='2.2' fill='#1818e8'/><circle cx='1086.3' cy='790.4' r='2.2' fill='#1818e8'/><circle cx='1081.6' cy='785.6' r='2.2' fill='#1818e8'/><circle cx='1079.8' cy='779.1' r='2.2' fill='#1818e8'/><circle cx='1081.6' cy='772.6' r='2.2' fill='#1818e8'/><circle cx='1086.3' cy='767.9' r='2.2' fill='#1818e8'/><circle cx='1092.8' cy='766.1' r='2.2' fill='#1818e8'/><circle cx='1099.3' cy='767.9' r='2.2' fill='#1818e8'/><circle cx='1104.1' cy='772.6' r='2.2' fill='#1818e8'/></g><circle cx='1092.8200000000002' cy='779.15' r='12' fill='#0000a0' opacity='0.5' filter='url(#bl1)'/><ellipse cx='1086.8' cy='774.1' rx='1.9' ry='1.9' transform='rotate(0 1086.8 774.1)' fill='#ffffff' filter='url(#bl2)'/><ellipse cx='1086.8' cy='774.1' rx='1.2' ry='1.2' transform='rotate(0 1086.8 774.1)' fill='#e00000' filter='url(#bl2)'/><ellipse cx='1098.8' cy='774.1' rx='1.9' ry='1.9' transform='rotate(0 1098.8 774.1)' fill='#ffffff' filter='url(#bl2)'/><ellipse cx='1098.8' cy='774.1' rx='1.2' ry='1.2' transform='rotate(0 1098.8 774.1)' fill='#e00000' filter='url(#bl2)'/><ellipse cx='1084.8' cy='778.1' rx='1.9' ry='1.9' transform='rotate(0 1084.8 778.1)' fill='#ffffff' filter='url(#bl2)'/><ellipse cx='1084.8' cy='778.1' rx='1.2' ry='1.2' transform='rotate(0 1084.8 778.1)' fill='#e00000' filter='url(#bl2)'/><ellipse cx='1100.8' cy='778.1' rx='1.9' ry='1.9' transform='rotate(0 1100.8 778.1)' fill='#ffffff' filter='url(#bl2)'/><ellipse cx='1100.8' cy='778.1' rx='1.2' ry='1.2' transform='rotate(0 1100.8 778.1)' fill='#e00000' filter='url(#bl2)'/><ellipse cx='1090.8' cy='787.1' rx='1.9' ry='1.9' transform='rotate(0 1090.8 787.1)' fill='#ffffff' filter='url(#bl2)'/><ellipse cx='1090.8' cy='787.1' rx='1.2' ry='1.2' transform='rotate(0 1090.8 787.1)' fill='#e00000' filter='url(#bl2)'/><ellipse cx='1094.8' cy='787.1' rx='1.9' ry='1.9' transform='rotate(0 1094.8 787.1)' fill='#ffffff' filter='url(#bl2)'/><ellipse cx='1094.8' cy='787.1' rx='1.2' ry='1.2' transform='rotate(0 1094.8 787.1)' fill='#e00000' filter='url(#bl2)'/></svg><svg x='1139.1' y='746.4' width='66' height='65.5' viewBox='1139.1 746.4 66 65.5'><rect x='1139.13' y='746.4' width='66' height='65.5' fill='#000048'/><g filter='url(#bl2)' opacity='0.5'><circle cx='1185.1' cy='779.1' r='2.2' fill='#1818e8'/><circle cx='1183.4' cy='785.6' r='2.2' fill='#1818e8'/><circle cx='1178.6' cy='790.4' r='2.2' fill='#1818e8'/><circle cx='1172.1' cy='792.1' r='2.2' fill='#1818e8'/><circle cx='1165.6' cy='790.4' r='2.2' fill='#1818e8'/><circle cx='1160.9' cy='785.6' r='2.2' fill='#1818e8'/><circle cx='1159.1' cy='779.1' r='2.2' fill='#1818e8'/><circle cx='1160.9' cy='772.6' r='2.2' fill='#1818e8'/><circle cx='1165.6' cy='767.9' r='2.2' fill='#1818e8'/><circle cx='1172.1' cy='766.1' r='2.2' fill='#1818e8'/><circle cx='1178.6' cy='767.9' r='2.2' fill='#1818e8'/><circle cx='1183.4' cy='772.6' r='2.2' fill='#1818e8'/></g><circle cx='1172.13' cy='779.15' r='12' fill='#0000a0' opacity='0.5' filter='url(#bl1)'/><ellipse cx='1167.1' cy='775.1' rx='2' ry='2' transform='rotate(0 1167.1 775.1)' fill='#ffffff' filter='url(#bl2)'/><ellipse cx='1167.1' cy='775.1' rx='1.3' ry='1.3' transform='rotate(0 1167.1 775.1)' fill='#e00000' filter='url(#bl2)'/><ellipse cx='1177.1' cy='775.1' rx='2' ry='2' transform='rotate(0 1177.1 775.1)' fill='#ffffff' filter='url(#bl2)'/><ellipse cx='1177.1' cy='775.1' rx='1.3' ry='1.3' transform='rotate(0 1177.1 775.1)' fill='#e00000' filter='url(#bl2)'/><ellipse cx='1170.1' cy='787.1' rx='2' ry='2' transform='rotate(0 1170.1 787.1)' fill='#ffffff' filter='url(#bl2)'/><ellipse cx='1170.1' cy='787.1' rx='1.3' ry='1.3' transform='rotate(0 1170.1 787.1)' fill='#e00000' filter='url(#bl2)'/><ellipse cx='1174.1' cy='787.1' rx='2' ry='2' transform='rotate(0 1174.1 787.1)' fill='#ffffff' filter='url(#bl2)'/><ellipse cx='1174.1' cy='787.1' rx='1.3' ry='1.3' transform='rotate(0 1174.1 787.1)' fill='#e00000' filter='url(#bl2)'/><g filter='url(#bl2)'><circle cx='1166.1' cy='778.6' r='1.6' fill='#ffffff'/><circle cx='1178.1' cy='778.6' r='1.6' fill='#ffffff'/></g></svg><svg x='1218.4' y='746.4' width='66' height='65.5' viewBox='1218.4 746.4 66 65.5'><rect x='1218.44' y='746.4' width='66' height='65.5' fill='#000048'/><g filter='url(#bl2)' opacity='0.5'><circle cx='1264.4' cy='779.1' r='2.2' fill='#1818e8'/><circle cx='1262.7' cy='785.6' r='2.2' fill='#1818e8'/><circle cx='1257.9' cy='790.4' r='2.2' fill='#1818e8'/><circle cx='1251.4' cy='792.1' r='2.2' fill='#1818e8'/><circle cx='1244.9' cy='790.4' r='2.2' fill='#1818e8'/><circle cx='1240.2' cy='785.6' r='2.2' fill='#1818e8'/><circle cx='1238.4' cy='779.1' r='2.2' fill='#1818e8'/><circle cx='1240.2' cy='772.6' r='2.2' fill='#1818e8'/><circle cx='1244.9' cy='767.9' r='2.2' fill='#1818e8'/><circle cx='1251.4' cy='766.1' r='2.2' fill='#1818e8'/><circle cx='1257.9' cy='767.9' r='2.2' fill='#1818e8'/><circle cx='1262.7' cy='772.6' r='2.2' fill='#1818e8'/></g><circle cx='1251.44' cy='779.15' r='12' fill='#0000a0' opacity='0.5' filter='url(#bl1)'/><g filter='url(#bl2)'><circle cx='1246.4' cy='775.1' r='1.6' fill='#ffffff'/><circle cx='1256.4' cy='775.1' r='1.6' fill='#ffffff'/></g><ellipse cx='1243.4' cy='778.6' rx='2.2' ry='2.4' transform='rotate(0 1243.4 778.6)' fill='#ffffff' filter='url(#bl2)'/><ellipse cx='1243.4' cy='778.6' rx='1.4' ry='1.6' transform='rotate(0 1243.4 778.6)' fill='#e00000' filter='url(#bl2)'/><ellipse cx='1259.4' cy='778.6' rx='2.2' ry='2.4' transform='rotate(0 1259.4 778.6)' fill='#ffffff' filter='url(#bl2)'/><ellipse cx='1259.4' cy='778.6' rx='1.4' ry='1.6' transform='rotate(0 1259.4 778.6)' fill='#e00000' filter='url(#bl2)'/><ellipse cx='1251.4' cy='788.1' rx='2.2' ry='2.4' transform='rotate(0 1251.4 788.1)' fill='#ffffff' filter='url(#bl2)'/><ellipse cx='1251.4' cy='788.1' rx='1.4' ry='1.6' transform='rotate(0 1251.4 788.1)' fill='#e00000' filter='url(#bl2)'/></svg><svg x='1297.8' y='746.4' width='66' height='65.5' viewBox='1297.8 746.4 66 65.5'><rect x='1297.75' y='746.4' width='66' height='65.5' fill='#000048'/><g filter='url(#bl2)' opacity='0.5'><circle cx='1343.8' cy='779.1' r='2.2' fill='#1818e8'/><circle cx='1342.0' cy='785.6' r='2.2' fill='#1818e8'/><circle cx='1337.2' cy='790.4' r='2.2' fill='#1818e8'/><circle cx='1330.8' cy='792.1' r='2.2' fill='#1818e8'/><circle cx='1324.2' cy='790.4' r='2.2' fill='#1818e8'/><circle cx='1319.5' cy='785.6' r='2.2' fill='#1818e8'/><circle cx='1317.8' cy='779.1' r='2.2' fill='#1818e8'/><circle cx='1319.5' cy='772.6' r='2.2' fill='#1818e8'/><circle cx='1324.2' cy='767.9' r='2.2' fill='#1818e8'/><circle cx='1330.8' cy='766.1' r='2.2' fill='#1818e8'/><circle cx='1337.2' cy='767.9' r='2.2' fill='#1818e8'/><circle cx='1342.0' cy='772.6' r='2.2' fill='#1818e8'/></g><circle cx='1330.75' cy='779.15' r='12' fill='#0000a0' opacity='0.5' filter='url(#bl1)'/><circle cx='1330.75' cy='779.15' r='13' fill='#1a1ae0' filter='url(#bl1)'/><g filter='url(#bl2)' opacity='0.8'><circle cx='1341.2' cy='779.1' r='2.6' fill='#c8c8ff'/><circle cx='1338.8' cy='785.9' r='2.6' fill='#c8c8ff'/><circle cx='1332.6' cy='789.5' r='2.6' fill='#c8c8ff'/><circle cx='1325.5' cy='788.2' r='2.6' fill='#c8c8ff'/><circle cx='1320.9' cy='782.7' r='2.6' fill='#c8c8ff'/><circle cx='1320.9' cy='775.6' r='2.6' fill='#c8c8ff'/><circle cx='1325.5' cy='770.1' r='2.6' fill='#c8c8ff'/><circle cx='1332.6' cy='768.8' r='2.6' fill='#c8c8ff'/><circle cx='1338.8' cy='772.4' r='2.6' fill='#c8c8ff'/></g><circle cx='1330.75' cy='779.15' r='12' fill='none' stroke='#f0f0ff' stroke-width='2' filter='url(#bl2)' opacity='0.35'/><circle cx='1330.75' cy='779.15' r='5' fill='#2020d0' filter='url(#bl2)'/><ellipse cx='1322.8' cy='775.1' rx='2.3' ry='3.5' transform='rotate(0 1322.8 775.1)' fill='#e00000' filter='url(#bl2)'/><ellipse cx='1338.8' cy='775.1' rx='2.3' ry='3.5' transform='rotate(0 1338.8 775.1)' fill='#e00000' filter='url(#bl2)'/></svg><svg x='1377.1' y='746.4' width='66' height='65.5' viewBox='1377.1 746.4 66 65.5'><rect x='1377.06' y='746.4' width='66' height='65.5' fill='#000048'/><g filter='url(#bl2)' opacity='0.5'><circle cx='1423.1' cy='779.1' r='2.2' fill='#1818e8'/><circle cx='1421.3' cy='785.6' r='2.2' fill='#1818e8'/><circle cx='1416.6' cy='790.4' r='2.2' fill='#1818e8'/><circle cx='1410.1' cy='792.1' r='2.2' fill='#1818e8'/><circle cx='1403.6' cy='790.4' r='2.2' fill='#1818e8'/><circle cx='1398.8' cy='785.6' r='2.2' fill='#1818e8'/><circle cx='1397.1' cy='779.1' r='2.2' fill='#1818e8'/><circle cx='1398.8' cy='772.6' r='2.2' fill='#1818e8'/><circle cx='1403.6' cy='767.9' r='2.2' fill='#1818e8'/><circle cx='1410.1' cy='766.1' r='2.2' fill='#1818e8'/><circle cx='1416.6' cy='767.9' r='2.2' fill='#1818e8'/><circle cx='1421.3' cy='772.6' r='2.2' fill='#1818e8'/></g><circle cx='1410.06' cy='779.15' r='12' fill='#0000a0' opacity='0.5' filter='url(#bl1)'/><circle cx='1410.06' cy='779.15' r='13' fill='#1a1ae0' filter='url(#bl1)'/><g filter='url(#bl2)' opacity='0.8'><circle cx='1420.6' cy='779.1' r='2.6' fill='#c8c8ff'/><circle cx='1418.1' cy='785.9' r='2.6' fill='#c8c8ff'/><circle cx='1411.9' cy='789.5' r='2.6' fill='#c8c8ff'/><circle cx='1404.8' cy='788.2' r='2.6' fill='#c8c8ff'/><circle cx='1400.2' cy='782.7' r='2.6' fill='#c8c8ff'/><circle cx='1400.2' cy='775.6' r='2.6' fill='#c8c8ff'/><circle cx='1404.8' cy='770.1' r='2.6' fill='#c8c8ff'/><circle cx='1411.9' cy='768.8' r='2.6' fill='#c8c8ff'/><circle cx='1418.1' cy='772.4' r='2.6' fill='#c8c8ff'/></g><circle cx='1410.06' cy='779.15' r='12' fill='none' stroke='#f0f0ff' stroke-width='2' filter='url(#bl2)' opacity='0.6'/><circle cx='1410.06' cy='779.15' r='5' fill='#2020d0' filter='url(#bl2)'/><ellipse cx='1402.1' cy='777.1' rx='2.6' ry='4' transform='rotate(15 1402.1 777.1)' fill='#e00000' filter='url(#bl2)'/><ellipse cx='1418.1' cy='777.1' rx='2.6' ry='4' transform='rotate(-15 1418.1 777.1)' fill='#e00000' filter='url(#bl2)'/><ellipse cx='1410.1' cy='788.1' rx='4.5' ry='2.2' transform='rotate(0 1410.1 788.1)' fill='#e00000' filter='url(#bl2)'/></svg><svg x='1456.4' y='746.4' width='66' height='65.5' viewBox='1456.4 746.4 66 65.5'><rect x='1456.3700000000001' y='746.4' width='66' height='65.5' fill='#000048'/><g filter='url(#bl2)' opacity='0.5'><circle cx='1502.4' cy='779.1' r='2.2' fill='#1818e8'/><circle cx='1500.6' cy='785.6' r='2.2' fill='#1818e8'/><circle cx='1495.9' cy='790.4' r='2.2' fill='#1818e8'/><circle cx='1489.4' cy='792.1' r='2.2' fill='#1818e8'/><circle cx='1482.9' cy='790.4' r='2.2' fill='#1818e8'/><circle cx='1478.1' cy='785.6' r='2.2' fill='#1818e8'/><circle cx='1476.4' cy='779.1' r='2.2' fill='#1818e8'/><circle cx='1478.1' cy='772.6' r='2.2' fill='#1818e8'/><circle cx='1482.9' cy='767.9' r='2.2' fill='#1818e8'/><circle cx='1489.4' cy='766.1' r='2.2' fill='#1818e8'/><circle cx='1495.9' cy='767.9' r='2.2' fill='#1818e8'/><circle cx='1500.6' cy='772.6' r='2.2' fill='#1818e8'/></g><circle cx='1489.3700000000001' cy='779.15' r='12' fill='#0000a0' opacity='0.5' filter='url(#bl1)'/><circle cx='1489.3700000000001' cy='779.15' r='13' fill='#1a1ae0' filter='url(#bl1)'/><g filter='url(#bl2)' opacity='0.8'><circle cx='1499.9' cy='779.1' r='2.6' fill='#c8c8ff'/><circle cx='1497.4' cy='785.9' r='2.6' fill='#c8c8ff'/><circle cx='1491.2' cy='789.5' r='2.6' fill='#c8c8ff'/><circle cx='1484.1' cy='788.2' r='2.6' fill='#c8c8ff'/><circle cx='1479.5' cy='782.7' r='2.6' fill='#c8c8ff'/><circle cx='1479.5' cy='775.6' r='2.6' fill='#c8c8ff'/><circle cx='1484.1' cy='770.1' r='2.6' fill='#c8c8ff'/><circle cx='1491.2' cy='768.8' r='2.6' fill='#c8c8ff'/><circle cx='1497.4' cy='772.4' r='2.6' fill='#c8c8ff'/></g><circle cx='1489.3700000000001' cy='779.15' r='12' fill='none' stroke='#f0f0ff' stroke-width='2' filter='url(#bl2)' opacity='1'/><circle cx='1489.3700000000001' cy='779.15' r='5' fill='#2020d0' filter='url(#bl2)'/><ellipse cx='1482.4' cy='776.1' rx='2' ry='3.2' transform='rotate(30 1482.4 776.1)' fill='#e00000' filter='url(#bl2)'/><ellipse cx='1496.4' cy='776.1' rx='2' ry='3.2' transform='rotate(-30 1496.4 776.1)' fill='#e00000' filter='url(#bl2)'/><ellipse cx='1489.4' cy='772.6' rx='1.8' ry='1.8' transform='rotate(0 1489.4 772.6)' fill='#e00000' filter='url(#bl2)'/><ellipse cx='1483.4' cy='784.1' rx='1.8' ry='1.8' transform='rotate(0 1483.4 784.1)' fill='#e00000' filter='url(#bl2)'/><ellipse cx='1495.4' cy='784.1' rx='1.8' ry='1.8' transform='rotate(0 1495.4 784.1)' fill='#e00000' filter='url(#bl2)'/><ellipse cx='1489.4' cy='789.1' rx='3.5' ry='1.8' transform='rotate(0 1489.4 789.1)' fill='#e00000' filter='url(#bl2)'/></svg><svg x='1535.7' y='746.4' width='66' height='65.5' viewBox='1535.7 746.4 66 65.5'><rect x='1535.68' y='746.4' width='66' height='65.5' fill='#000048'/><g filter='url(#bl2)' opacity='0.5'><circle cx='1581.7' cy='779.1' r='2.2' fill='#1818e8'/><circle cx='1579.9' cy='785.6' r='2.2' fill='#1818e8'/><circle cx='1575.2' cy='790.4' r='2.2' fill='#1818e8'/><circle cx='1568.7' cy='792.1' r='2.2' fill='#1818e8'/><circle cx='1562.2' cy='790.4' r='2.2' fill='#1818e8'/><circle cx='1557.4' cy='785.6' r='2.2' fill='#1818e8'/><circle cx='1555.7' cy='779.1' r='2.2' fill='#1818e8'/><circle cx='1557.4' cy='772.6' r='2.2' fill='#1818e8'/><circle cx='1562.2' cy='767.9' r='2.2' fill='#1818e8'/><circle cx='1568.7' cy='766.1' r='2.2' fill='#1818e8'/><circle cx='1575.2' cy='767.9' r='2.2' fill='#1818e8'/><circle cx='1579.9' cy='772.6' r='2.2' fill='#1818e8'/></g><circle cx='1568.68' cy='779.15' r='12' fill='#0000a0' opacity='0.5' filter='url(#bl1)'/><ellipse cx='1562.2' cy='776.1' rx='2.7' ry='4.9' transform='rotate(25 1562.2 776.1)' fill='#ffffff' filter='url(#bl2)'/><ellipse cx='1562.2' cy='776.1' rx='1.8' ry='4' transform='rotate(25 1562.2 776.1)' fill='#e00000' filter='url(#bl2)'/><ellipse cx='1575.2' cy='776.1' rx='2.7' ry='4.9' transform='rotate(-25 1575.2 776.1)' fill='#ffffff' filter='url(#bl2)'/><ellipse cx='1575.2' cy='776.1' rx='1.8' ry='4' transform='rotate(-25 1575.2 776.1)' fill='#e00000' filter='url(#bl2)'/><ellipse cx='1568.7' cy='785.6' rx='4.9' ry='2.6' transform='rotate(0 1568.7 785.6)' fill='#ffffff' filter='url(#bl2)'/><ellipse cx='1568.7' cy='785.6' rx='4' ry='1.7' transform='rotate(0 1568.7 785.6)' fill='#e00000' filter='url(#bl2)'/></svg><svg x='1615.0' y='746.4' width='66' height='65.5' viewBox='1615.0 746.4 66 65.5'><rect x='1614.99' y='746.4' width='66' height='65.5' fill='#000048'/><g filter='url(#bl2)' opacity='0.5'><circle cx='1661.0' cy='779.1' r='2.2' fill='#1818e8'/><circle cx='1659.2' cy='785.6' r='2.2' fill='#1818e8'/><circle cx='1654.5' cy='790.4' r='2.2' fill='#1818e8'/><circle cx='1648.0' cy='792.1' r='2.2' fill='#1818e8'/><circle cx='1641.5' cy='790.4' r='2.2' fill='#1818e8'/><circle cx='1636.7' cy='785.6' r='2.2' fill='#1818e8'/><circle cx='1635.0' cy='779.1' r='2.2' fill='#1818e8'/><circle cx='1636.7' cy='772.6' r='2.2' fill='#1818e8'/><circle cx='1641.5' cy='767.9' r='2.2' fill='#1818e8'/><circle cx='1648.0' cy='766.1' r='2.2' fill='#1818e8'/><circle cx='1654.5' cy='767.9' r='2.2' fill='#1818e8'/><circle cx='1659.2' cy='772.6' r='2.2' fill='#1818e8'/></g><circle cx='1647.99' cy='779.15' r='12' fill='#0000a0' opacity='0.5' filter='url(#bl1)'/><ellipse cx='1641.0' cy='777.1' rx='2.4' ry='2' transform='rotate(0 1641.0 777.1)' fill='#ffffff' filter='url(#bl2)'/><ellipse cx='1641.0' cy='777.1' rx='1.6' ry='1.3' transform='rotate(0 1641.0 777.1)' fill='#e00000' filter='url(#bl2)'/><ellipse cx='1655.0' cy='777.1' rx='2.4' ry='2' transform='rotate(0 1655.0 777.1)' fill='#ffffff' filter='url(#bl2)'/><ellipse cx='1655.0' cy='777.1' rx='1.6' ry='1.3' transform='rotate(0 1655.0 777.1)' fill='#e00000' filter='url(#bl2)'/><ellipse cx='1648.0' cy='785.1' rx='2.4' ry='2' transform='rotate(0 1648.0 785.1)' fill='#ffffff' filter='url(#bl2)'/><ellipse cx='1648.0' cy='785.1' rx='1.6' ry='1.3' transform='rotate(0 1648.0 785.1)' fill='#e00000' filter='url(#bl2)'/></svg></svg><div class=t style='top:828px;font-size:26px;font-weight:700;color:#000;left:895px;'>Export</div><div class=t style='top:870px;font-size:14px;color:#111;left:895px;'>Export either the currently selected discrete or continuous series. The raw data is included. In the discrete case, each</div><div class=t style='top:890px;font-size:14px;color:#111;left:895px;'>plot is also exported individually and they are additionally exported in IGOR format.</div><div class=r style='left:897px;top:913px;width:148px;height:28px;background:#eeeeee;'></div><div class=t style='left:897px;width:148px;text-align:center;top:920px;font-size:13px;color:#333'>Discrete zip</div><div class=r style='left:897px;top:952px;width:148px;height:28px;background:#eeeeee;'></div><div class=t style='left:897px;width:148px;text-align:center;top:959px;font-size:13px;color:#333'>Continuous zip</div><div class=r style='left:897px;top:992px;width:148px;height:28px;background:#eeeeee;'></div><div class=t style='left:897px;width:148px;text-align:center;top:999px;font-size:13px;color:#333'>clear tmp</div><div class=t style='top:920px;font-size:13px;color:#111;right:598px;'>progress:</div><div class=r style='left:1137px;top:917px;width:212px;height:20px;background:#eeeeee;border-radius:2px;'></div><div class=t style='top:959px;font-size:13px;color:#111;right:598px;'>progress:</div><div class=r style='left:1137px;top:956px;width:212px;height:20px;background:#eeeeee;border-radius:2px;'></div><div class=t style='top:1068px;font-size:36px;color:#000;left:15.5px;letter-spacing:2px;'>c)</div><div class=t style='top:1121px;font-size:26px;font-weight:700;color:#000;left:30px;'>Select molecule</div><div class=t style='top:1160px;font-size:14px;color:#111;left:30px;'>The atoms of the molecule need to be ordered in front of the data structure.</div><div class=t style='top:1199px;font-size:13px;color:#111;right:1574px;'>Molecule selection</div><div class=r style='left:161px;top:1193px;width:370px;height:27px;background:#fff;border:1px solid #9e9e9e;box-sizing:border-box;'></div><div class=t style='top:1200px;font-size:13px;color:#333;left:169px;'>1..114</div><div class=r style='left:535px;top:1192px;width:100px;height:28px;background:#eeeeee;'></div><div class=t style='left:535px;width:100px;text-align:center;top:1199px;font-size:13px;color:#333'>highlight</div><div class=r style='left:33px;top:1235px;width:149px;height:28px;background:#eeeeee;'></div><div class=t style='left:33px;width:149px;text-align:center;top:1242px;font-size:13px;color:#333'>Add pdos selection</div><div class=t style='top:1296px;font-size:26px;font-weight:700;color:#000;left:34px;'>Orbital overlap parameters</div><div class=t style='top:1344px;font-size:13px;color:#111;right:1550px;'>num gas HOMO</div><div class=r style='left:185px;top:1337px;width:151px;height:28px;background:#fff;border:1px solid #9e9e9e;box-sizing:border-box;'></div><div class=t style='top:1344px;font-size:13px;color:#333;left:193px;'>4</div><div class=t style='top:1387px;font-size:13px;color:#111;right:1550px;'>num gas LUMO</div><div class=r style='left:185px;top:1380px;width:151px;height:28px;background:#fff;border:1px solid #9e9e9e;box-sizing:border-box;'></div><div class=t style='top:1387px;font-size:13px;color:#333;left:193px;'>4</div><div class=t style='top:1430px;font-size:13px;color:#111;right:1550px;'>Slab system Emin (eV)</div><div class=r style='left:185px;top:1423px;width:151px;height:28px;background:#fff;border:1px solid #9e9e9e;box-sizing:border-box;'></div><div class=t style='top:1430px;font-size:13px;color:#333;left:193px;'>-2</div><div class=t style='top:1474px;font-size:13px;color:#111;right:1550px;'>Slab system Emax (eV)</div><div class=r style='left:185px;top:1467px;width:151px;height:28px;background:#fff;border:1px solid #9e9e9e;box-sizing:border-box;'></div><div class=t style='top:1474px;font-size:13px;color:#333;left:193px;'>2</div><div class=r style='left:37px;top:1510px;width:148px;height:28px;background:#eeeeee;'></div><div class=t style='left:37px;width:148px;text-align:center;top:1517px;font-size:13px;color:#333'>Submit</div><div class=t style='top:1066px;font-size:36px;color:#000;left:874.5px;letter-spacing:2px;'>d)</div><div class=t style='top:1074px;font-size:13px;color:#111;right:738px;'>pk</div><div class=r style='left:996px;top:1067px;width:212px;height:28px;background:#fff;border:1px solid #9e9e9e;box-sizing:border-box;'></div><div class=t style='top:1074px;font-size:13px;color:#333;left:1004px;'>30367</div><div class=r style='left:908px;top:1103px;width:148px;height:28px;background:#eeeeee;box-shadow:0 2px 3px rgba(0,0,0,0.25);'></div><div class=t style='left:908px;width:148px;text-align:center;top:1110px;font-size:13px;color:#333'>Load pk</div><div class=t style='top:1142px;font-size:26px;font-weight:700;color:#000;left:894px;'>PDOS and overlap</div><div class=t style='top:1190px;font-size:13px;color:#111;right:690px;'>broadening fwhm (eV)</div><div class=r style='left:1050px;top:1195px;width:263px;height:4px;background:#bdbdbd;'></div><svg class=r style='left:1098.0px;top:1188.5px' width='17' height='17'><circle cx='8.5' cy='8.5' r='7.5' fill='#fff' stroke='#8c8c8c' stroke-width='1'/></svg><div class=t style='top:1190px;font-size:13px;color:#111;left:1346.5px;'>0.05</div><div class=r style='left:1427px;top:1182px;width:148px;height:28px;background:#eeeeee;'></div><div class=t style='left:1427px;width:148px;text-align:center;top:1189px;font-size:13px;color:#333'>plot</div><div class=t style='top:1233px;font-size:13px;color:#111;right:690px;'>energy range (eV)</div><div class=r style='left:1050px;top:1238px;width:263px;height:4px;background:#bdbdbd;'></div><div class=r style='left:1084.5px;top:1236px;width:228.5px;height:8px;background:#2196f3;'></div><svg class=r style='left:1076.0px;top:1231.5px' width='17' height='17'><circle cx='8.5' cy='8.5' r='7.5' fill='#fff' stroke='#8c8c8c' stroke-width='1'/></svg><svg class=r style='left:1304.5px;top:1231.5px' width='17' height='17'><circle cx='8.5' cy='8.5' r='7.5' fill='#fff' stroke='#8c8c8c' stroke-width='1'/></svg><div class=t style='top:1233px;font-size:13px;color:#111;left:1331.5px;'>-1.5 – 2.0</div><div class=r style='left:1426px;top:1219px;width:148px;height:28px;background:#eeeeee;'></div><div class=t style='left:1426px;width:148px;text-align:center;top:1226px;font-size:13px;color:#333'>clear</div><svg class=r style='left:870px;top:1254px' width='846' height='375' viewBox='870 1254 846 375'><defs><clipPath id='pc'><rect x='922.5' y='1265.5' width='669.7' height='325.5'/></clipPath></defs><g clip-path='url(#pc)'><path d='M922.50,1522.00 C924.00,1513.67 925.50,1501.12 927.00,1497.00 C928.67,1492.43 930.33,1488.00 932.00,1488.00 C933.50,1488.00 935.00,1500.66 936.50,1510.00 C938.03,1519.54 939.57,1549.50 941.10,1549.50 C942.73,1549.50 944.37,1518.44 946.00,1500.00 C947.67,1481.19 949.33,1436.00 951.00,1436.00 C952.67,1436.00 954.33,1465.72 956.00,1480.00 C958.00,1497.13 960.00,1530.00 962.00,1530.00 C964.07,1530.00 966.13,1496.56 968.20,1460.00 C969.47,1437.59 970.73,1356.20 972.00,1330.00 C973.43,1300.35 974.87,1267.00 976.30,1267.00 C977.70,1267.00 979.10,1310.22 980.50,1330.00 C982.00,1351.19 983.50,1381.69 985.00,1390.00 C986.00,1395.54 987.00,1396.36 988.00,1401.00 C989.00,1405.64 990.00,1412.88 991.00,1420.00 C992.60,1431.40 994.20,1443.06 995.80,1460.00 C997.20,1474.82 998.60,1510.87 1000.00,1520.00 C1001.33,1528.70 1002.67,1537.00 1004.00,1537.00 C1005.33,1537.00 1006.67,1530.00 1008.00,1530.00 C1009.33,1530.00 1010.67,1539.95 1012.00,1545.00 C1014.00,1552.58 1016.00,1568.00 1018.00,1568.00 C1020.33,1568.00 1022.67,1552.27 1025.00,1540.00 C1027.00,1529.48 1029.00,1506.23 1031.00,1495.00 C1033.17,1482.84 1035.33,1466.00 1037.50,1466.00 C1039.00,1466.00 1040.50,1484.51 1042.00,1495.00 C1043.57,1505.96 1045.13,1531.00 1046.70,1531.00 C1048.47,1531.00 1050.23,1517.79 1052.00,1510.00 C1054.00,1501.18 1056.00,1482.55 1058.00,1480.00 C1060.33,1477.03 1062.67,1475.00 1065.00,1475.00 C1066.67,1475.00 1068.33,1498.19 1070.00,1510.00 C1071.77,1522.51 1073.53,1540.94 1075.30,1548.00 C1077.93,1558.53 1080.57,1569.00 1083.20,1569.00 C1084.80,1569.00 1086.40,1549.83 1088.00,1540.00 C1089.87,1528.54 1091.73,1505.00 1093.60,1505.00 C1095.07,1505.00 1096.53,1516.93 1098.00,1525.00 C1099.57,1533.63 1101.13,1558.00 1102.70,1558.00 C1104.13,1558.00 1105.57,1530.33 1107.00,1520.00 C1108.83,1506.79 1110.67,1487.00 1112.50,1487.00 C1113.67,1487.00 1114.83,1496.14 1116.00,1500.00 C1117.23,1504.08 1118.47,1511.00 1119.70,1511.00 C1121.13,1511.00 1122.57,1500.50 1124.00,1495.00 C1125.60,1488.87 1127.20,1476.00 1128.80,1476.00 C1129.87,1476.00 1130.93,1488.70 1132.00,1495.00 C1133.53,1504.05 1135.07,1522.00 1136.60,1522.00 C1138.33,1522.00 1140.07,1494.19 1141.80,1490.00 C1143.83,1485.08 1145.87,1481.00 1147.90,1481.00 C1149.27,1481.00 1150.63,1495.46 1152.00,1505.00 C1153.60,1516.17 1155.20,1547.00 1156.80,1547.00 C1158.20,1547.00 1159.60,1514.96 1161.00,1500.00 C1162.77,1481.12 1164.53,1446.00 1166.30,1446.00 C1167.53,1446.00 1168.77,1465.16 1170.00,1475.00 C1171.50,1486.97 1173.00,1501.47 1174.50,1511.60 C1177.00,1528.49 1179.50,1553.80 1182.00,1553.80 C1183.33,1553.80 1184.67,1530.85 1186.00,1520.00 C1187.60,1506.98 1189.20,1482.40 1190.80,1482.40 C1192.20,1482.40 1193.60,1494.54 1195.00,1500.00 C1196.57,1506.11 1198.13,1517.10 1199.70,1517.10 C1201.13,1517.10 1202.57,1493.08 1204.00,1480.00 C1205.97,1462.06 1207.93,1422.50 1209.90,1422.50 C1211.27,1422.50 1212.63,1446.16 1214.00,1460.00 C1215.43,1474.52 1216.87,1508.90 1218.30,1508.90 C1219.53,1508.90 1220.77,1481.93 1222.00,1470.00 C1223.87,1451.95 1225.73,1420.40 1227.60,1420.40 C1228.73,1420.40 1229.87,1446.11 1231.00,1455.00 C1232.57,1467.30 1234.13,1474.85 1235.70,1484.40 C1237.13,1493.14 1238.57,1501.28 1240.00,1510.00 C1241.77,1520.75 1243.53,1543.00 1245.30,1543.00 C1246.53,1543.00 1247.77,1519.17 1249.00,1510.00 C1250.83,1496.36 1252.67,1475.60 1254.50,1475.60 C1255.67,1475.60 1256.83,1489.18 1258.00,1495.00 C1259.43,1502.16 1260.87,1514.40 1262.30,1514.40 C1263.97,1514.40 1265.63,1496.00 1267.30,1496.00 C1268.53,1496.00 1269.77,1512.04 1271.00,1520.00 C1272.40,1529.04 1273.80,1541.91 1275.20,1547.00 C1277.47,1555.25 1279.73,1557.38 1282.00,1563.40 C1283.33,1566.94 1284.67,1570.66 1286.00,1575.00 C1287.17,1578.80 1288.33,1587.90 1289.50,1587.90 C1290.67,1587.90 1291.83,1570.75 1293.00,1565.00 C1294.80,1556.13 1296.60,1546.58 1298.40,1544.30 C1300.20,1542.02 1302.00,1542.87 1303.80,1540.20 C1305.20,1538.12 1306.60,1504.41 1308.00,1490.00 C1309.57,1473.87 1311.13,1447.70 1312.70,1447.70 C1313.80,1447.70 1314.90,1468.85 1316.00,1480.00 C1317.60,1496.22 1319.20,1530.70 1320.80,1530.70 C1322.40,1530.70 1324.00,1523.20 1325.60,1523.20 C1327.07,1523.20 1328.53,1541.48 1330.00,1550.00 C1331.50,1558.72 1333.00,1575.00 1334.50,1575.00 C1336.33,1575.00 1338.17,1529.77 1340.00,1510.00 C1341.33,1495.62 1342.67,1474.99 1344.00,1470.00 C1345.60,1464.01 1347.20,1459.20 1348.80,1459.20 C1350.20,1459.20 1351.60,1468.85 1353.00,1475.00 C1354.53,1481.73 1356.07,1499.40 1357.60,1499.40 C1358.97,1499.40 1360.33,1496.70 1361.70,1496.70 C1363.13,1496.70 1364.57,1512.62 1366.00,1520.00 C1367.47,1527.56 1368.93,1541.60 1370.40,1541.60 C1372.27,1541.60 1374.13,1495.40 1376.00,1480.00 C1377.77,1465.43 1379.53,1444.90 1381.30,1444.90 C1382.53,1444.90 1383.77,1469.09 1385.00,1480.00 C1386.50,1493.26 1388.00,1517.10 1389.50,1517.10 C1390.67,1517.10 1391.83,1492.84 1393.00,1485.00 C1394.57,1474.47 1396.13,1460.60 1397.70,1460.60 C1398.80,1460.60 1399.90,1471.17 1401.00,1475.00 C1402.17,1479.06 1403.33,1485.10 1404.50,1485.10 C1406.30,1485.10 1408.10,1470.80 1409.90,1470.80 C1412.17,1470.80 1414.43,1487.80 1416.70,1487.80 C1417.83,1487.80 1418.97,1485.10 1420.10,1485.10 C1421.73,1485.10 1423.37,1504.33 1425.00,1515.00 C1426.33,1523.71 1427.67,1538.73 1429.00,1543.00 C1430.80,1548.76 1432.60,1553.80 1434.40,1553.80 C1435.60,1553.80 1436.80,1513.08 1438.00,1500.00 C1439.77,1480.74 1441.53,1455.80 1443.30,1455.80 C1444.53,1455.80 1445.77,1479.97 1447.00,1490.00 C1448.70,1503.83 1450.40,1526.60 1452.10,1526.60 C1454.17,1526.60 1456.23,1519.80 1458.30,1519.80 C1459.53,1519.80 1460.77,1539.58 1462.00,1550.00 C1463.23,1560.42 1464.47,1582.40 1465.70,1582.40 C1467.80,1582.40 1469.90,1557.14 1472.00,1545.00 C1474.67,1529.58 1477.33,1511.38 1480.00,1500.00 C1483.20,1486.35 1486.40,1467.40 1489.60,1467.40 C1491.40,1467.40 1493.20,1482.63 1495.00,1490.00 C1497.03,1498.32 1499.07,1514.40 1501.10,1514.40 C1503.40,1514.40 1505.70,1511.60 1508.00,1511.60 C1509.67,1511.60 1511.33,1519.92 1513.00,1525.00 C1514.93,1530.90 1516.87,1545.70 1518.80,1545.70 C1520.53,1545.70 1522.27,1498.71 1524.00,1480.00 C1525.90,1459.49 1527.80,1426.50 1529.70,1426.50 C1531.13,1426.50 1532.57,1449.68 1534.00,1460.00 C1535.77,1472.72 1537.53,1495.30 1539.30,1495.30 C1541.57,1495.30 1543.83,1485.66 1546.10,1479.00 C1548.80,1471.07 1551.50,1447.70 1554.20,1447.70 C1556.47,1447.70 1558.73,1465.40 1561.00,1465.40 C1563.50,1465.40 1566.00,1435.40 1568.50,1435.40 C1571.00,1435.40 1573.50,1462.60 1576.00,1462.60 C1578.07,1462.60 1580.13,1455.80 1582.20,1455.80 C1585.40,1455.80 1588.60,1463.93 1591.80,1468.00 L1591.8,1591.0 L922.5,1591.0 Z' fill='#ebebeb'/><path d='M922.50,1562.00 C925.00,1548.07 927.50,1520.20 930.00,1520.20 C931.97,1520.20 933.93,1547.19 935.90,1557.30 C938.07,1568.43 940.23,1585.40 942.40,1585.40 C945.00,1585.40 947.60,1572.81 950.20,1567.80 C952.80,1562.79 955.40,1560.59 958.00,1554.70 C961.03,1547.83 964.07,1522.10 967.10,1522.10 C968.43,1522.10 969.77,1528.91 971.10,1530.00 C972.83,1531.42 974.57,1531.25 976.30,1532.60 C978.03,1533.95 979.77,1537.74 981.50,1541.70 C983.67,1546.65 985.83,1557.55 988.00,1563.80 C991.47,1573.80 994.93,1589.30 998.40,1589.30 C1001.03,1589.30 1003.67,1581.60 1006.30,1570.40 C1007.53,1565.15 1008.77,1540.71 1010.00,1530.00 C1011.37,1518.13 1012.73,1500.60 1014.10,1500.60 C1016.27,1500.60 1018.43,1534.36 1020.60,1543.00 C1021.90,1548.18 1023.20,1554.70 1024.50,1554.70 C1025.80,1554.70 1027.10,1552.80 1028.40,1552.80 C1030.57,1552.80 1032.73,1556.00 1034.90,1556.00 C1036.63,1556.00 1038.37,1553.52 1040.10,1550.80 C1041.87,1548.03 1043.63,1537.49 1045.40,1531.30 C1046.70,1526.75 1048.00,1518.20 1049.30,1518.20 C1050.80,1518.20 1052.30,1527.42 1053.80,1531.30 C1055.10,1534.66 1056.40,1540.40 1057.70,1540.40 C1060.10,1540.40 1062.50,1516.30 1064.90,1516.30 C1067.07,1516.30 1069.23,1536.50 1071.40,1536.50 C1073.80,1536.50 1076.20,1506.50 1078.60,1506.50 C1080.57,1506.50 1082.53,1531.08 1084.50,1544.30 C1085.80,1553.04 1087.10,1571.70 1088.40,1571.70 C1089.70,1571.70 1091.00,1571.70 1092.30,1571.70 C1094.90,1571.70 1097.50,1579.39 1100.10,1583.40 C1101.20,1585.10 1102.30,1588.60 1103.40,1588.60 C1105.77,1588.60 1108.13,1582.10 1110.50,1582.10 C1112.27,1582.10 1114.03,1584.95 1115.80,1586.00 C1117.53,1587.03 1119.27,1588.60 1121.00,1588.60 C1125.33,1588.60 1129.67,1588.60 1134.00,1588.60 C1137.50,1588.60 1141.00,1581.00 1144.50,1581.00 C1148.60,1581.00 1152.70,1586.50 1156.80,1586.50 C1159.97,1586.50 1163.13,1578.40 1166.30,1578.40 C1170.87,1578.40 1175.43,1589.20 1180.00,1589.20 C1184.30,1589.20 1188.60,1584.50 1192.90,1584.50 C1196.27,1584.50 1199.63,1587.90 1203.00,1587.90 C1206.20,1587.90 1209.40,1580.40 1212.60,1580.40 C1214.87,1580.40 1217.13,1583.10 1219.40,1583.10 C1222.13,1583.10 1224.87,1577.70 1227.60,1577.70 C1231.23,1577.70 1234.87,1583.48 1238.50,1584.50 C1240.77,1585.14 1243.03,1585.80 1245.30,1585.80 C1247.80,1585.80 1250.30,1581.10 1252.80,1581.10 C1255.73,1581.10 1258.67,1585.80 1261.60,1585.80 C1264.33,1585.80 1267.07,1584.63 1269.80,1583.80 C1274.10,1582.50 1278.40,1578.40 1282.70,1578.40 C1286.10,1578.40 1289.50,1588.60 1292.90,1588.60 C1295.17,1588.60 1297.43,1587.90 1299.70,1587.90 C1303.80,1587.90 1307.90,1587.90 1312.00,1587.90 C1316.53,1587.90 1321.07,1583.80 1325.60,1583.80 C1328.77,1583.80 1331.93,1588.60 1335.10,1588.60 C1340.10,1588.60 1345.10,1572.20 1350.10,1572.20 C1352.37,1572.20 1354.63,1574.40 1356.90,1575.60 C1358.93,1576.67 1360.97,1577.51 1363.00,1579.00 C1365.47,1580.81 1367.93,1587.20 1370.40,1587.20 C1373.60,1587.20 1376.80,1574.30 1380.00,1574.30 C1382.27,1574.30 1384.53,1577.70 1386.80,1577.70 C1389.73,1577.70 1392.67,1570.20 1395.60,1570.20 C1399.93,1570.20 1404.27,1574.78 1408.60,1577.00 C1414.03,1579.79 1419.47,1585.20 1424.90,1585.20 C1428.53,1585.20 1432.17,1548.40 1435.80,1548.40 C1438.97,1548.40 1442.13,1563.92 1445.30,1564.70 C1446.90,1565.09 1448.50,1565.02 1450.10,1565.40 C1454.40,1566.42 1458.70,1585.20 1463.00,1585.20 C1466.63,1585.20 1470.27,1490.50 1473.90,1490.50 C1477.07,1490.50 1480.23,1528.00 1483.40,1528.00 C1487.27,1528.00 1491.13,1472.20 1495.00,1472.20 C1498.87,1472.20 1502.73,1525.14 1506.60,1534.80 C1508.40,1539.30 1510.20,1540.54 1512.00,1544.30 C1514.73,1550.01 1517.47,1566.10 1520.20,1566.10 C1522.70,1566.10 1525.20,1552.50 1527.70,1552.50 C1532.00,1552.50 1536.30,1581.10 1540.60,1581.10 C1545.60,1581.10 1550.60,1552.50 1555.60,1552.50 C1558.10,1552.50 1560.60,1561.30 1563.10,1561.30 C1565.37,1561.30 1567.63,1555.20 1569.90,1555.20 C1572.40,1555.20 1574.90,1561.30 1577.40,1561.30 C1580.57,1561.30 1583.73,1553.80 1586.90,1553.80 C1588.53,1553.80 1590.17,1555.67 1591.80,1556.60 L1591.8,1591.0 L922.5,1591.0 Z' fill='#999999'/><path d='M922.50,1522.00 C924.00,1513.67 925.50,1501.12 927.00,1497.00 C928.67,1492.43 930.33,1488.00 932.00,1488.00 C933.50,1488.00 935.00,1500.66 936.50,1510.00 C938.03,1519.54 939.57,1549.50 941.10,1549.50 C942.73,1549.50 944.37,1518.44 946.00,1500.00 C947.67,1481.19 949.33,1436.00 951.00,1436.00 C952.67,1436.00 954.33,1465.72 956.00,1480.00 C958.00,1497.13 960.00,1530.00 962.00,1530.00 C964.07,1530.00 966.13,1496.56 968.20,1460.00 C969.47,1437.59 970.73,1356.20 972.00,1330.00 C973.43,1300.35 974.87,1267.00 976.30,1267.00 C977.70,1267.00 979.10,1310.22 980.50,1330.00 C982.00,1351.19 983.50,1381.69 985.00,1390.00 C986.00,1395.54 987.00,1396.36 988.00,1401.00 C989.00,1405.64 990.00,1412.88 991.00,1420.00 C992.60,1431.40 994.20,1443.06 995.80,1460.00 C997.20,1474.82 998.60,1510.87 1000.00,1520.00 C1001.33,1528.70 1002.67,1537.00 1004.00,1537.00 C1005.33,1537.00 1006.67,1530.00 1008.00,1530.00 C1009.33,1530.00 1010.67,1539.95 1012.00,1545.00 C1014.00,1552.58 1016.00,1568.00 1018.00,1568.00 C1020.33,1568.00 1022.67,1552.27 1025.00,1540.00 C1027.00,1529.48 1029.00,1506.23 1031.00,1495.00 C1033.17,1482.84 1035.33,1466.00 1037.50,1466.00 C1039.00,1466.00 1040.50,1484.51 1042.00,1495.00 C1043.57,1505.96 1045.13,1531.00 1046.70,1531.00 C1048.47,1531.00 1050.23,1517.79 1052.00,1510.00 C1054.00,1501.18 1056.00,1482.55 1058.00,1480.00 C1060.33,1477.03 1062.67,1475.00 1065.00,1475.00 C1066.67,1475.00 1068.33,1498.19 1070.00,1510.00 C1071.77,1522.51 1073.53,1540.94 1075.30,1548.00 C1077.93,1558.53 1080.57,1569.00 1083.20,1569.00 C1084.80,1569.00 1086.40,1549.83 1088.00,1540.00 C1089.87,1528.54 1091.73,1505.00 1093.60,1505.00 C1095.07,1505.00 1096.53,1516.93 1098.00,1525.00 C1099.57,1533.63 1101.13,1558.00 1102.70,1558.00 C1104.13,1558.00 1105.57,1530.33 1107.00,1520.00 C1108.83,1506.79 1110.67,1487.00 1112.50,1487.00 C1113.67,1487.00 1114.83,1496.14 1116.00,1500.00 C1117.23,1504.08 1118.47,1511.00 1119.70,1511.00 C1121.13,1511.00 1122.57,1500.50 1124.00,1495.00 C1125.60,1488.87 1127.20,1476.00 1128.80,1476.00 C1129.87,1476.00 1130.93,1488.70 1132.00,1495.00 C1133.53,1504.05 1135.07,1522.00 1136.60,1522.00 C1138.33,1522.00 1140.07,1494.19 1141.80,1490.00 C1143.83,1485.08 1145.87,1481.00 1147.90,1481.00 C1149.27,1481.00 1150.63,1495.46 1152.00,1505.00 C1153.60,1516.17 1155.20,1547.00 1156.80,1547.00 C1158.20,1547.00 1159.60,1514.96 1161.00,1500.00 C1162.77,1481.12 1164.53,1446.00 1166.30,1446.00 C1167.53,1446.00 1168.77,1465.16 1170.00,1475.00 C1171.50,1486.97 1173.00,1501.47 1174.50,1511.60 C1177.00,1528.49 1179.50,1553.80 1182.00,1553.80 C1183.33,1553.80 1184.67,1530.85 1186.00,1520.00 C1187.60,1506.98 1189.20,1482.40 1190.80,1482.40 C1192.20,1482.40 1193.60,1494.54 1195.00,1500.00 C1196.57,1506.11 1198.13,1517.10 1199.70,1517.10 C1201.13,1517.10 1202.57,1493.08 1204.00,1480.00 C1205.97,1462.06 1207.93,1422.50 1209.90,1422.50 C1211.27,1422.50 1212.63,1446.16 1214.00,1460.00 C1215.43,1474.52 1216.87,1508.90 1218.30,1508.90 C1219.53,1508.90 1220.77,1481.93 1222.00,1470.00 C1223.87,1451.95 1225.73,1420.40 1227.60,1420.40 C1228.73,1420.40 1229.87,1446.11 1231.00,1455.00 C1232.57,1467.30 1234.13,1474.85 1235.70,1484.40 C1237.13,1493.14 1238.57,1501.28 1240.00,1510.00 C1241.77,1520.75 1243.53,1543.00 1245.30,1543.00 C1246.53,1543.00 1247.77,1519.17 1249.00,1510.00 C1250.83,1496.36 1252.67,1475.60 1254.50,1475.60 C1255.67,1475.60 1256.83,1489.18 1258.00,1495.00 C1259.43,1502.16 1260.87,1514.40 1262.30,1514.40 C1263.97,1514.40 1265.63,1496.00 1267.30,1496.00 C1268.53,1496.00 1269.77,1512.04 1271.00,1520.00 C1272.40,1529.04 1273.80,1541.91 1275.20,1547.00 C1277.47,1555.25 1279.73,1557.38 1282.00,1563.40 C1283.33,1566.94 1284.67,1570.66 1286.00,1575.00 C1287.17,1578.80 1288.33,1587.90 1289.50,1587.90 C1290.67,1587.90 1291.83,1570.75 1293.00,1565.00 C1294.80,1556.13 1296.60,1546.58 1298.40,1544.30 C1300.20,1542.02 1302.00,1542.87 1303.80,1540.20 C1305.20,1538.12 1306.60,1504.41 1308.00,1490.00 C1309.57,1473.87 1311.13,1447.70 1312.70,1447.70 C1313.80,1447.70 1314.90,1468.85 1316.00,1480.00 C1317.60,1496.22 1319.20,1530.70 1320.80,1530.70 C1322.40,1530.70 1324.00,1523.20 1325.60,1523.20 C1327.07,1523.20 1328.53,1541.48 1330.00,1550.00 C1331.50,1558.72 1333.00,1575.00 1334.50,1575.00 C1336.33,1575.00 1338.17,1529.77 1340.00,1510.00 C1341.33,1495.62 1342.67,1474.99 1344.00,1470.00 C1345.60,1464.01 1347.20,1459.20 1348.80,1459.20 C1350.20,1459.20 1351.60,1468.85 1353.00,1475.00 C1354.53,1481.73 1356.07,1499.40 1357.60,1499.40 C1358.97,1499.40 1360.33,1496.70 1361.70,1496.70 C1363.13,1496.70 1364.57,1512.62 1366.00,1520.00 C1367.47,1527.56 1368.93,1541.60 1370.40,1541.60 C1372.27,1541.60 1374.13,1495.40 1376.00,1480.00 C1377.77,1465.43 1379.53,1444.90 1381.30,1444.90 C1382.53,1444.90 1383.77,1469.09 1385.00,1480.00 C1386.50,1493.26 1388.00,1517.10 1389.50,1517.10 C1390.67,1517.10 1391.83,1492.84 1393.00,1485.00 C1394.57,1474.47 1396.13,1460.60 1397.70,1460.60 C1398.80,1460.60 1399.90,1471.17 1401.00,1475.00 C1402.17,1479.06 1403.33,1485.10 1404.50,1485.10 C1406.30,1485.10 1408.10,1470.80 1409.90,1470.80 C1412.17,1470.80 1414.43,1487.80 1416.70,1487.80 C1417.83,1487.80 1418.97,1485.10 1420.10,1485.10 C1421.73,1485.10 1423.37,1504.33 1425.00,1515.00 C1426.33,1523.71 1427.67,1538.73 1429.00,1543.00 C1430.80,1548.76 1432.60,1553.80 1434.40,1553.80 C1435.60,1553.80 1436.80,1513.08 1438.00,1500.00 C1439.77,1480.74 1441.53,1455.80 1443.30,1455.80 C1444.53,1455.80 1445.77,1479.97 1447.00,1490.00 C1448.70,1503.83 1450.40,1526.60 1452.10,1526.60 C1454.17,1526.60 1456.23,1519.80 1458.30,1519.80 C1459.53,1519.80 1460.77,1539.58 1462.00,1550.00 C1463.23,1560.42 1464.47,1582.40 1465.70,1582.40 C1467.80,1582.40 1469.90,1557.14 1472.00,1545.00 C1474.67,1529.58 1477.33,1511.38 1480.00,1500.00 C1483.20,1486.35 1486.40,1467.40 1489.60,1467.40 C1491.40,1467.40 1493.20,1482.63 1495.00,1490.00 C1497.03,1498.32 1499.07,1514.40 1501.10,1514.40 C1503.40,1514.40 1505.70,1511.60 1508.00,1511.60 C1509.67,1511.60 1511.33,1519.92 1513.00,1525.00 C1514.93,1530.90 1516.87,1545.70 1518.80,1545.70 C1520.53,1545.70 1522.27,1498.71 1524.00,1480.00 C1525.90,1459.49 1527.80,1426.50 1529.70,1426.50 C1531.13,1426.50 1532.57,1449.68 1534.00,1460.00 C1535.77,1472.72 1537.53,1495.30 1539.30,1495.30 C1541.57,1495.30 1543.83,1485.66 1546.10,1479.00 C1548.80,1471.07 1551.50,1447.70 1554.20,1447.70 C1556.47,1447.70 1558.73,1465.40 1561.00,1465.40 C1563.50,1465.40 1566.00,1435.40 1568.50,1435.40 C1571.00,1435.40 1573.50,1462.60 1576.00,1462.60 C1578.07,1462.60 1580.13,1455.80 1582.20,1455.80 C1585.40,1455.80 1588.60,1463.93 1591.80,1468.00' fill='none' stroke='#d2d2d2' stroke-width='1.5'/><path d='M922.50,1562.00 C925.00,1548.07 927.50,1520.20 930.00,1520.20 C931.97,1520.20 933.93,1547.19 935.90,1557.30 C938.07,1568.43 940.23,1585.40 942.40,1585.40 C945.00,1585.40 947.60,1572.81 950.20,1567.80 C952.80,1562.79 955.40,1560.59 958.00,1554.70 C961.03,1547.83 964.07,1522.10 967.10,1522.10 C968.43,1522.10 969.77,1528.91 971.10,1530.00 C972.83,1531.42 974.57,1531.25 976.30,1532.60 C978.03,1533.95 979.77,1537.74 981.50,1541.70 C983.67,1546.65 985.83,1557.55 988.00,1563.80 C991.47,1573.80 994.93,1589.30 998.40,1589.30 C1001.03,1589.30 1003.67,1581.60 1006.30,1570.40 C1007.53,1565.15 1008.77,1540.71 1010.00,1530.00 C1011.37,1518.13 1012.73,1500.60 1014.10,1500.60 C1016.27,1500.60 1018.43,1534.36 1020.60,1543.00 C1021.90,1548.18 1023.20,1554.70 1024.50,1554.70 C1025.80,1554.70 1027.10,1552.80 1028.40,1552.80 C1030.57,1552.80 1032.73,1556.00 1034.90,1556.00 C1036.63,1556.00 1038.37,1553.52 1040.10,1550.80 C1041.87,1548.03 1043.63,1537.49 1045.40,1531.30 C1046.70,1526.75 1048.00,1518.20 1049.30,1518.20 C1050.80,1518.20 1052.30,1527.42 1053.80,1531.30 C1055.10,1534.66 1056.40,1540.40 1057.70,1540.40 C1060.10,1540.40 1062.50,1516.30 1064.90,1516.30 C1067.07,1516.30 1069.23,1536.50 1071.40,1536.50 C1073.80,1536.50 1076.20,1506.50 1078.60,1506.50 C1080.57,1506.50 1082.53,1531.08 1084.50,1544.30 C1085.80,1553.04 1087.10,1571.70 1088.40,1571.70 C1089.70,1571.70 1091.00,1571.70 1092.30,1571.70 C1094.90,1571.70 1097.50,1579.39 1100.10,1583.40 C1101.20,1585.10 1102.30,1588.60 1103.40,1588.60 C1105.77,1588.60 1108.13,1582.10 1110.50,1582.10 C1112.27,1582.10 1114.03,1584.95 1115.80,1586.00 C1117.53,1587.03 1119.27,1588.60 1121.00,1588.60 C1125.33,1588.60 1129.67,1588.60 1134.00,1588.60 C1137.50,1588.60 1141.00,1581.00 1144.50,1581.00 C1148.60,1581.00 1152.70,1586.50 1156.80,1586.50 C1159.97,1586.50 1163.13,1578.40 1166.30,1578.40 C1170.87,1578.40 1175.43,1589.20 1180.00,1589.20 C1184.30,1589.20 1188.60,1584.50 1192.90,1584.50 C1196.27,1584.50 1199.63,1587.90 1203.00,1587.90 C1206.20,1587.90 1209.40,1580.40 1212.60,1580.40 C1214.87,1580.40 1217.13,1583.10 1219.40,1583.10 C1222.13,1583.10 1224.87,1577.70 1227.60,1577.70 C1231.23,1577.70 1234.87,1583.48 1238.50,1584.50 C1240.77,1585.14 1243.03,1585.80 1245.30,1585.80 C1247.80,1585.80 1250.30,1581.10 1252.80,1581.10 C1255.73,1581.10 1258.67,1585.80 1261.60,1585.80 C1264.33,1585.80 1267.07,1584.63 1269.80,1583.80 C1274.10,1582.50 1278.40,1578.40 1282.70,1578.40 C1286.10,1578.40 1289.50,1588.60 1292.90,1588.60 C1295.17,1588.60 1297.43,1587.90 1299.70,1587.90 C1303.80,1587.90 1307.90,1587.90 1312.00,1587.90 C1316.53,1587.90 1321.07,1583.80 1325.60,1583.80 C1328.77,1583.80 1331.93,1588.60 1335.10,1588.60 C1340.10,1588.60 1345.10,1572.20 1350.10,1572.20 C1352.37,1572.20 1354.63,1574.40 1356.90,1575.60 C1358.93,1576.67 1360.97,1577.51 1363.00,1579.00 C1365.47,1580.81 1367.93,1587.20 1370.40,1587.20 C1373.60,1587.20 1376.80,1574.30 1380.00,1574.30 C1382.27,1574.30 1384.53,1577.70 1386.80,1577.70 C1389.73,1577.70 1392.67,1570.20 1395.60,1570.20 C1399.93,1570.20 1404.27,1574.78 1408.60,1577.00 C1414.03,1579.79 1419.47,1585.20 1424.90,1585.20 C1428.53,1585.20 1432.17,1548.40 1435.80,1548.40 C1438.97,1548.40 1442.13,1563.92 1445.30,1564.70 C1446.90,1565.09 1448.50,1565.02 1450.10,1565.40 C1454.40,1566.42 1458.70,1585.20 1463.00,1585.20 C1466.63,1585.20 1470.27,1490.50 1473.90,1490.50 C1477.07,1490.50 1480.23,1528.00 1483.40,1528.00 C1487.27,1528.00 1491.13,1472.20 1495.00,1472.20 C1498.87,1472.20 1502.73,1525.14 1506.60,1534.80 C1508.40,1539.30 1510.20,1540.54 1512.00,1544.30 C1514.73,1550.01 1517.47,1566.10 1520.20,1566.10 C1522.70,1566.10 1525.20,1552.50 1527.70,1552.50 C1532.00,1552.50 1536.30,1581.10 1540.60,1581.10 C1545.60,1581.10 1550.60,1552.50 1555.60,1552.50 C1558.10,1552.50 1560.60,1561.30 1563.10,1561.30 C1565.37,1561.30 1567.63,1555.20 1569.90,1555.20 C1572.40,1555.20 1574.90,1561.30 1577.40,1561.30 C1580.57,1561.30 1583.73,1553.80 1586.90,1553.80 C1588.53,1553.80 1590.17,1555.67 1591.80,1556.60' fill='none' stroke='#000' stroke-width='1.6'/><path d='M922.50,1589.60 C933.33,1589.60 944.17,1589.60 955.00,1589.60 C956.87,1589.60 958.73,1584.93 960.60,1582.00 C962.73,1578.65 964.87,1574.71 967.00,1570.00 C969.43,1564.63 971.87,1550.20 974.30,1550.20 C976.20,1550.20 978.10,1564.29 980.00,1572.00 C981.37,1577.55 982.73,1589.60 984.10,1589.60 C991.50,1589.60 998.90,1589.60 1006.30,1589.60 C1007.20,1589.60 1008.10,1578.94 1009.00,1570.00 C1009.83,1561.73 1010.67,1549.42 1011.50,1531.30 C1012.33,1513.18 1013.17,1463.80 1014.00,1440.00 C1014.90,1414.30 1015.80,1377.00 1016.70,1377.00 C1017.63,1377.00 1018.57,1421.48 1019.50,1440.00 C1020.73,1464.47 1021.97,1489.19 1023.20,1505.00 C1023.87,1513.55 1024.53,1524.41 1025.20,1526.00 C1026.27,1528.54 1027.33,1527.82 1028.40,1530.00 C1029.27,1531.77 1030.13,1539.30 1031.00,1543.00 C1032.30,1548.56 1033.60,1556.91 1034.90,1557.30 C1036.43,1557.76 1037.97,1557.57 1039.50,1558.00 C1041.47,1558.55 1043.43,1575.81 1045.40,1578.20 C1047.13,1580.30 1048.87,1582.10 1050.60,1582.10 C1052.40,1582.10 1054.20,1577.91 1056.00,1576.00 C1057.67,1574.23 1059.33,1571.00 1061.00,1571.00 C1062.67,1571.00 1064.33,1577.02 1066.00,1580.00 C1067.80,1583.22 1069.60,1589.60 1071.40,1589.60 C1080.93,1589.60 1090.47,1589.60 1100.00,1589.60 C1263.93,1589.60 1427.87,1589.60 1591.80,1589.60' fill='none' stroke='#1f77b4' stroke-width='2'/><path d='M922.50,1589.60 C924.33,1588.07 926.17,1585.81 928.00,1585.00 C929.77,1584.22 931.53,1583.40 933.30,1583.40 C935.53,1583.40 937.77,1589.60 940.00,1589.60 C947.33,1589.60 954.67,1589.60 962.00,1589.60 C963.70,1589.60 965.40,1587.59 967.10,1585.40 C968.40,1583.72 969.70,1577.01 971.00,1575.00 C972.67,1572.43 974.33,1569.70 976.00,1569.70 C977.67,1569.70 979.33,1573.75 981.00,1577.00 C982.47,1579.86 983.93,1589.60 985.40,1589.60 C992.37,1589.60 999.33,1589.60 1006.30,1589.60 C1009.33,1589.60 1012.37,1585.40 1015.40,1580.80 C1016.93,1578.48 1018.47,1571.61 1020.00,1568.00 C1021.30,1564.94 1022.60,1560.00 1023.90,1560.00 C1025.27,1560.00 1026.63,1568.20 1028.00,1572.00 C1029.43,1575.99 1030.87,1583.40 1032.30,1583.40 C1033.53,1583.40 1034.77,1582.66 1036.00,1582.00 C1037.37,1581.27 1038.73,1580.51 1040.10,1578.20 C1041.07,1576.57 1042.03,1568.04 1043.00,1560.00 C1043.80,1553.35 1044.60,1542.66 1045.40,1531.30 C1046.10,1521.36 1046.80,1502.53 1047.50,1495.00 C1048.30,1486.40 1049.10,1476.50 1049.90,1476.50 C1050.93,1476.50 1051.97,1492.35 1053.00,1500.00 C1054.57,1511.60 1056.13,1533.90 1057.70,1533.90 C1058.80,1533.90 1059.90,1514.57 1061.00,1500.00 C1061.83,1488.96 1062.67,1462.62 1063.50,1455.00 C1064.40,1446.77 1065.30,1438.60 1066.20,1438.60 C1067.13,1438.60 1068.07,1449.32 1069.00,1460.00 C1070.00,1471.45 1071.00,1515.14 1072.00,1530.00 C1073.53,1552.78 1075.07,1573.45 1076.60,1578.20 C1078.80,1585.02 1081.00,1589.60 1083.20,1589.60 C1084.80,1589.60 1086.40,1582.48 1088.00,1580.00 C1089.87,1577.11 1091.73,1573.00 1093.60,1573.00 C1095.07,1573.00 1096.53,1579.35 1098.00,1582.00 C1099.57,1584.83 1101.13,1589.60 1102.70,1589.60 C1115.13,1589.60 1127.57,1589.60 1140.00,1589.60 C1141.07,1589.60 1142.13,1589.60 1143.20,1589.60 C1145.47,1589.60 1147.73,1589.60 1150.00,1589.60 C1297.27,1589.60 1444.53,1589.60 1591.80,1589.60' fill='none' stroke='#ff7f0e' stroke-width='2'/><path d='M922.50,1589.60 C924.57,1587.53 926.63,1583.40 928.70,1583.40 C930.80,1583.40 932.90,1584.20 935.00,1585.00 C937.03,1585.77 939.07,1589.60 941.10,1589.60 C945.40,1589.60 949.70,1589.60 954.00,1589.60 C956.00,1589.60 958.00,1580.00 960.00,1580.00 C962.00,1580.00 964.00,1589.60 966.00,1589.60 C969.00,1589.60 972.00,1589.60 975.00,1589.60 C976.93,1589.60 978.87,1582.80 980.80,1582.80 C982.53,1582.80 984.27,1589.60 986.00,1589.60 C987.53,1589.60 989.07,1589.60 990.60,1589.60 C995.73,1589.60 1000.87,1589.60 1006.00,1589.60 C1009.00,1589.60 1012.00,1584.83 1015.00,1582.00 C1018.60,1578.61 1022.20,1575.16 1025.80,1570.40 C1027.53,1568.11 1029.27,1564.06 1031.00,1562.00 C1033.17,1559.43 1035.33,1558.64 1037.50,1556.00 C1038.33,1554.98 1039.17,1553.68 1040.00,1552.00 C1040.93,1550.12 1041.87,1548.72 1042.80,1544.30 C1043.70,1540.04 1044.60,1511.15 1045.50,1500.00 C1046.33,1489.68 1047.17,1479.66 1048.00,1475.00 C1048.77,1470.71 1049.53,1466.00 1050.30,1466.00 C1051.20,1466.00 1052.10,1473.45 1053.00,1480.00 C1053.83,1486.07 1054.67,1502.98 1055.50,1510.00 C1056.47,1518.14 1057.43,1528.60 1058.40,1528.60 C1059.60,1528.60 1060.80,1518.85 1062.00,1515.00 C1063.33,1510.72 1064.67,1503.90 1066.00,1503.90 C1067.33,1503.90 1068.67,1512.11 1070.00,1515.00 C1071.33,1517.89 1072.67,1518.71 1074.00,1522.10 C1075.33,1525.49 1076.67,1532.85 1078.00,1540.00 C1079.73,1549.30 1081.47,1567.56 1083.20,1575.60 C1084.50,1581.63 1085.80,1589.60 1087.10,1589.60 C1089.27,1589.60 1091.43,1584.70 1093.60,1584.70 C1095.73,1584.70 1097.87,1589.60 1100.00,1589.60 C1104.40,1589.60 1108.80,1589.60 1113.20,1589.60 C1115.47,1589.60 1117.73,1589.60 1120.00,1589.60 C1277.27,1589.60 1434.53,1589.60 1591.80,1589.60' fill='none' stroke='#2ca02c' stroke-width='2'/><path d='M922.50,1589.60 C933.03,1589.60 943.57,1589.60 954.10,1589.60 C959.40,1589.60 964.70,1589.60 970.00,1589.60 C972.30,1589.60 974.60,1589.60 976.90,1589.60 C979.27,1589.60 981.63,1589.60 984.00,1589.60 C998.80,1589.60 1013.60,1589.60 1028.40,1589.60 C1029.93,1589.60 1031.47,1584.73 1033.00,1583.00 C1034.50,1581.30 1036.00,1578.80 1037.50,1578.80 C1039.70,1578.80 1041.90,1583.40 1044.10,1583.40 C1046.07,1583.40 1048.03,1573.09 1050.00,1570.00 C1051.70,1567.33 1053.40,1563.80 1055.10,1563.80 C1056.63,1563.80 1058.17,1568.40 1059.70,1568.40 C1062.10,1568.40 1064.50,1560.52 1066.90,1557.30 C1067.97,1555.87 1069.03,1555.48 1070.10,1553.40 C1071.07,1551.52 1072.03,1548.07 1073.00,1540.00 C1073.83,1533.04 1074.67,1484.29 1075.50,1450.00 C1076.33,1415.71 1077.17,1352.14 1078.00,1330.00 C1078.77,1309.63 1079.53,1287.40 1080.30,1287.40 C1081.03,1287.40 1081.77,1309.94 1082.50,1330.00 C1083.33,1352.79 1084.17,1415.71 1085.00,1450.00 C1085.83,1484.29 1086.67,1523.00 1087.50,1540.00 C1088.23,1554.96 1088.97,1567.03 1089.70,1571.70 C1090.57,1577.21 1091.43,1580.04 1092.30,1582.10 C1093.87,1585.83 1095.43,1589.60 1097.00,1589.60 C1098.90,1589.60 1100.80,1589.60 1102.70,1589.60 C1104.13,1589.60 1105.57,1583.91 1107.00,1582.00 C1108.40,1580.13 1109.80,1577.50 1111.20,1577.50 C1112.47,1577.50 1113.73,1581.19 1115.00,1583.00 C1116.57,1585.23 1118.13,1589.60 1119.70,1589.60 C1133.13,1589.60 1146.57,1589.60 1160.00,1589.60 C1162.10,1589.60 1164.20,1585.20 1166.30,1585.20 C1168.20,1585.20 1170.10,1589.60 1172.00,1589.60 C1311.93,1589.60 1451.87,1589.60 1591.80,1589.60' fill='none' stroke='#ff0000' stroke-width='2'/><path d='M922.50,1589.60 C1025.00,1589.60 1127.50,1589.60 1230.00,1589.60 C1232.83,1589.60 1235.67,1589.60 1238.50,1589.60 C1240.67,1589.60 1242.83,1589.60 1245.00,1589.60 C1255.53,1589.60 1266.07,1589.60 1276.60,1589.60 C1277.73,1589.60 1278.87,1583.64 1280.00,1582.00 C1281.60,1579.68 1283.20,1577.00 1284.80,1577.00 C1286.20,1577.00 1287.60,1579.95 1289.00,1582.00 C1290.33,1583.96 1291.67,1589.60 1293.00,1589.60 C1309.33,1589.60 1325.67,1589.60 1342.00,1589.60 C1343.67,1589.60 1345.33,1580.01 1347.00,1578.00 C1348.50,1576.19 1350.00,1574.30 1351.50,1574.30 C1353.33,1574.30 1355.17,1577.00 1357.00,1577.00 C1358.33,1577.00 1359.67,1574.30 1361.00,1574.30 C1362.33,1574.30 1363.67,1576.78 1365.00,1578.40 C1366.37,1580.06 1367.73,1584.50 1369.10,1584.50 C1370.73,1584.50 1372.37,1574.09 1374.00,1570.00 C1375.53,1566.16 1377.07,1560.00 1378.60,1560.00 C1379.73,1560.00 1380.87,1565.97 1382.00,1568.00 C1383.13,1570.03 1384.27,1572.90 1385.40,1572.90 C1386.60,1572.90 1387.80,1563.36 1389.00,1560.00 C1390.30,1556.36 1391.60,1551.10 1392.90,1551.10 C1394.27,1551.10 1395.63,1560.04 1397.00,1565.00 C1398.60,1570.80 1400.20,1580.46 1401.80,1583.80 C1403.13,1586.58 1404.47,1589.60 1405.80,1589.60 C1409.43,1589.60 1413.07,1583.10 1416.70,1583.10 C1419.43,1583.10 1422.17,1584.50 1424.90,1584.50 C1425.93,1584.50 1426.97,1577.86 1428.00,1570.00 C1429.00,1562.39 1430.00,1528.92 1431.00,1510.00 C1431.83,1494.24 1432.67,1473.31 1433.50,1465.00 C1434.27,1457.35 1435.03,1449.00 1435.80,1449.00 C1436.70,1449.00 1437.60,1459.86 1438.50,1470.00 C1439.33,1479.39 1440.17,1509.07 1441.00,1520.00 C1442.43,1538.81 1443.87,1560.00 1445.30,1560.00 C1446.53,1560.00 1447.77,1549.93 1449.00,1545.00 C1450.27,1539.93 1451.53,1530.00 1452.80,1530.00 C1454.20,1530.00 1455.60,1542.33 1457.00,1550.00 C1459.00,1560.96 1461.00,1589.60 1463.00,1589.60 C1466.20,1589.60 1469.40,1589.60 1472.60,1589.60 C1475.73,1589.60 1478.87,1584.74 1482.00,1582.00 C1485.43,1579.00 1488.87,1572.20 1492.30,1572.20 C1494.87,1572.20 1497.43,1578.49 1500.00,1582.00 C1501.73,1584.37 1503.47,1589.60 1505.20,1589.60 C1508.17,1589.60 1511.13,1585.20 1514.10,1585.20 C1516.73,1585.20 1519.37,1589.60 1522.00,1589.60 C1526.40,1589.60 1530.80,1589.60 1535.20,1589.60 C1546.53,1589.60 1557.87,1589.60 1569.20,1589.60 C1576.73,1589.60 1584.27,1589.60 1591.80,1589.60' fill='none' stroke='#0000ff' stroke-width='2'/><path d='M922.50,1589.60 C1093.33,1589.60 1264.17,1589.60 1435.00,1589.60 C1436.67,1589.60 1438.33,1583.40 1440.00,1580.00 C1441.10,1577.76 1442.20,1572.90 1443.30,1572.90 C1444.87,1572.90 1446.43,1578.95 1448.00,1580.00 C1451.20,1582.15 1454.40,1582.09 1457.60,1583.80 C1460.07,1585.12 1462.53,1589.60 1465.00,1589.60 C1466.33,1589.60 1467.67,1576.30 1469.00,1560.00 C1470.00,1547.78 1471.00,1490.35 1472.00,1470.00 C1473.00,1449.65 1474.00,1423.80 1475.00,1423.80 C1476.33,1423.80 1477.67,1439.53 1479.00,1450.00 C1480.67,1463.09 1482.33,1488.15 1484.00,1500.00 C1485.17,1508.30 1486.33,1519.80 1487.50,1519.80 C1488.67,1519.80 1489.83,1510.24 1491.00,1505.00 C1492.33,1499.01 1493.67,1485.80 1495.00,1485.80 C1496.33,1485.80 1497.67,1507.05 1499.00,1520.00 C1500.33,1532.95 1501.67,1556.53 1503.00,1565.00 C1504.20,1572.62 1505.40,1580.27 1506.60,1581.10 C1508.40,1582.35 1510.20,1582.13 1512.00,1583.00 C1514.67,1584.28 1517.33,1589.60 1520.00,1589.60 C1530.00,1589.60 1540.00,1589.60 1550.00,1589.60 C1551.87,1589.60 1553.73,1585.20 1555.60,1585.20 C1557.73,1585.20 1559.87,1589.60 1562.00,1589.60 C1571.93,1589.60 1581.87,1589.60 1591.80,1589.60' fill='none' stroke='#8c564b' stroke-width='2'/><path d='M922.50,1589.60 C1092.67,1589.60 1262.83,1589.60 1433.00,1589.60 C1435.33,1589.60 1437.67,1583.13 1440.00,1582.00 C1442.47,1580.80 1444.93,1579.70 1447.40,1579.70 C1449.93,1579.70 1452.47,1589.60 1455.00,1589.60 C1458.13,1589.60 1461.27,1589.60 1464.40,1589.60 C1465.60,1589.60 1466.80,1575.76 1468.00,1560.00 C1469.00,1546.87 1470.00,1491.01 1471.00,1470.00 C1472.33,1441.99 1473.67,1406.80 1475.00,1406.80 C1476.33,1406.80 1477.67,1427.45 1479.00,1440.00 C1480.67,1455.69 1482.33,1483.25 1484.00,1495.00 C1485.17,1503.22 1486.33,1513.70 1487.50,1513.70 C1488.67,1513.70 1489.83,1504.30 1491.00,1500.00 C1492.10,1495.95 1493.20,1488.50 1494.30,1488.50 C1495.53,1488.50 1496.77,1508.87 1498.00,1520.00 C1499.50,1533.54 1501.00,1556.05 1502.50,1563.40 C1503.87,1570.10 1505.23,1576.25 1506.60,1577.00 C1508.20,1577.88 1509.80,1577.66 1511.40,1578.40 C1512.60,1578.96 1513.80,1580.90 1515.00,1582.00 C1516.27,1583.16 1517.53,1585.20 1518.80,1585.20 C1521.10,1585.20 1523.40,1582.40 1525.70,1582.40 C1527.80,1582.40 1529.90,1589.60 1532.00,1589.60 C1534.87,1589.60 1537.73,1589.60 1540.60,1589.60 C1543.07,1589.60 1545.53,1589.60 1548.00,1589.60 C1550.53,1589.60 1553.07,1583.10 1555.60,1583.10 C1557.73,1583.10 1559.87,1589.60 1562.00,1589.60 C1564.40,1589.60 1566.80,1589.60 1569.20,1589.60 C1576.73,1589.60 1584.27,1589.60 1591.80,1589.60' fill='none' stroke='#e377c2' stroke-width='2'/><path d='M922.50,1589.60 C1073.33,1589.60 1224.17,1589.60 1375.00,1589.60 C1377.10,1589.60 1379.20,1589.60 1381.30,1589.60 C1383.53,1589.60 1385.77,1589.60 1388.00,1589.60 C1403.67,1589.60 1419.33,1589.60 1435.00,1589.60 C1437.07,1589.60 1439.13,1581.00 1441.20,1581.00 C1443.13,1581.00 1445.07,1589.60 1447.00,1589.60 C1452.80,1589.60 1458.60,1589.60 1464.40,1589.60 C1466.27,1589.60 1468.13,1574.97 1470.00,1570.00 C1471.53,1565.92 1473.07,1560.00 1474.60,1560.00 C1475.73,1560.00 1476.87,1565.64 1478.00,1568.00 C1479.37,1570.84 1480.73,1575.60 1482.10,1575.60 C1483.73,1575.60 1485.37,1561.87 1487.00,1550.00 C1488.67,1537.88 1490.33,1501.99 1492.00,1490.00 C1494.13,1474.65 1496.27,1457.90 1498.40,1457.90 C1499.93,1457.90 1501.47,1472.06 1503.00,1480.00 C1505.10,1490.87 1507.20,1508.53 1509.30,1515.70 C1511.13,1521.96 1512.97,1522.47 1514.80,1529.30 C1515.87,1533.27 1516.93,1543.96 1518.00,1550.00 C1519.40,1557.92 1520.80,1570.90 1522.20,1570.90 C1523.47,1570.90 1524.73,1564.45 1526.00,1562.00 C1527.23,1559.62 1528.47,1555.90 1529.70,1555.90 C1531.13,1555.90 1532.57,1566.28 1534.00,1570.00 C1536.20,1575.71 1538.40,1583.80 1540.60,1583.80 C1543.73,1583.80 1546.87,1580.94 1550.00,1580.00 C1553.23,1579.03 1556.47,1577.70 1559.70,1577.70 C1564.23,1577.70 1568.77,1580.75 1573.30,1582.40 C1579.47,1584.65 1585.63,1587.20 1591.80,1589.60' fill='none' stroke='#9467bd' stroke-width='2'/></g><rect x='922.5' y='1265.5' width='669.7' height='325.5' fill='none' stroke='#000' stroke-width='1.1'/><g font-family='Liberation Sans, sans-serif' font-size='11' fill='#111'><line x1='919.0' y1='1591.0' x2='922.5' y2='1591.0' stroke='#000' stroke-width='1'/><text x='916.5' y='1594.7' text-anchor='end'>0.0</text><line x1='919.0' y1='1534.3' x2='922.5' y2='1534.3' stroke='#000' stroke-width='1'/><text x='916.5' y='1538.0' text-anchor='end'>0.5</text><line x1='919.0' y1='1477.6' x2='922.5' y2='1477.6' stroke='#000' stroke-width='1'/><text x='916.5' y='1481.3' text-anchor='end'>1.0</text><line x1='919.0' y1='1420.9' x2='922.5' y2='1420.9' stroke='#000' stroke-width='1'/><text x='916.5' y='1424.6' text-anchor='end'>1.5</text><line x1='919.0' y1='1364.2' x2='922.5' y2='1364.2' stroke='#000' stroke-width='1'/><text x='916.5' y='1367.9' text-anchor='end'>2.0</text><line x1='919.0' y1='1307.5' x2='922.5' y2='1307.5' stroke='#000' stroke-width='1'/><text x='916.5' y='1311.2' text-anchor='end'>2.5</text><line x1='1592.2' y1='1591.0' x2='1595.7' y2='1591.0' stroke='#000' stroke-width='1'/><text x='1598.7' y='1594.7'>0.0</text><line x1='1592.2' y1='1544.5' x2='1595.7' y2='1544.5' stroke='#000' stroke-width='1'/><text x='1598.7' y='1548.2'>0.1</text><line x1='1592.2' y1='1498.0' x2='1595.7' y2='1498.0' stroke='#000' stroke-width='1'/><text x='1598.7' y='1501.7'>0.2</text><line x1='1592.2' y1='1451.5' x2='1595.7' y2='1451.5' stroke='#000' stroke-width='1'/><text x='1598.7' y='1455.2'>0.3</text><line x1='1592.2' y1='1405.0' x2='1595.7' y2='1405.0' stroke='#000' stroke-width='1'/><text x='1598.7' y='1408.7'>0.4</text><line x1='1592.2' y1='1358.5' x2='1595.7' y2='1358.5' stroke='#000' stroke-width='1'/><text x='1598.7' y='1362.2'>0.5</text><line x1='1592.2' y1='1312.0' x2='1595.7' y2='1312.0' stroke='#000' stroke-width='1'/><text x='1598.7' y='1315.7'>0.6</text><line x1='1592.2' y1='1265.5' x2='1595.7' y2='1265.5' stroke='#000' stroke-width='1'/><text x='1598.7' y='1269.2'>0.7</text><line x1='922.5' y1='1591.0' x2='922.5' y2='1594.5' stroke='#000' stroke-width='1'/><text x='922.5' y='1605.5' text-anchor='middle'>−1.5</text><line x1='1018.2' y1='1591.0' x2='1018.2' y2='1594.5' stroke='#000' stroke-width='1'/><text x='1018.2' y='1605.5' text-anchor='middle'>−1.0</text><line x1='1113.8' y1='1591.0' x2='1113.8' y2='1594.5' stroke='#000' stroke-width='1'/><text x='1113.8' y='1605.5' text-anchor='middle'>−0.5</text><line x1='1209.5' y1='1591.0' x2='1209.5' y2='1594.5' stroke='#000' stroke-width='1'/><text x='1209.5' y='1605.5' text-anchor='middle'>0.0</text><line x1='1305.2' y1='1591.0' x2='1305.2' y2='1594.5' stroke='#000' stroke-width='1'/><text x='1305.2' y='1605.5' text-anchor='middle'>0.5</text><line x1='1400.8' y1='1591.0' x2='1400.8' y2='1594.5' stroke='#000' stroke-width='1'/><text x='1400.8' y='1605.5' text-anchor='middle'>1.0</text><line x1='1496.5' y1='1591.0' x2='1496.5' y2='1594.5' stroke='#000' stroke-width='1'/><text x='1496.5' y='1605.5' text-anchor='middle'>1.5</text><line x1='1592.2' y1='1591.0' x2='1592.2' y2='1594.5' stroke='#000' stroke-width='1'/><text x='1592.2' y='1605.5' text-anchor='middle'>2.0</text><text x='1231' y='1621' font-style='italic'>E</text><text x='1240' y='1621'>−</text><text x='1250' y='1621' font-style='italic'>E</text><text x='1257' y='1623' font-size='7' font-style='italic'>F</text><text x='1264' y='1621'>[eV]</text><text transform='translate(893.5,1429) rotate(-90)' text-anchor='middle'>DOS [a.u.]</text><text transform='translate(1626,1428) rotate(-90)' text-anchor='middle'>Overlap of orbitals</text></g><rect x='927.5' y='1270.5' width='92' height='35' rx='2.5' fill='#fff' fill-opacity='0.8' stroke='#d6d6d6' stroke-width='1'/><line x1='930.5' y1='1280' x2='951.5' y2='1280' stroke='#cfcfcf' stroke-width='1.6'/><line x1='930.5' y1='1295' x2='951.5' y2='1295' stroke='#111' stroke-width='1.6'/><g font-family='Liberation Sans, sans-serif' font-size='10.5' fill='#111'><text x='960' y='1284'>0.1 ·  TDOS</text><text x='960' y='1299'>molecule</text></g><rect x='1473.5' y='1270.5' width='114' height='122' rx='2.5' fill='#fff' fill-opacity='0.8' stroke='#d6d6d6' stroke-width='1'/><g font-family='Liberation Sans, sans-serif' font-size='10.5' fill='#111'><line x1='1476.3' y1='1279.2' x2='1498' y2='1279.2' stroke='#1f77b4' stroke-width='1.8'/><text x='1505.5' y='1283.0'>HOMO-3 (-0.35)</text><line x1='1476.3' y1='1294.1' x2='1498' y2='1294.1' stroke='#ff7f0e' stroke-width='1.8'/><text x='1505.5' y='1297.9'>HOMO-2 (-0.13)</text><line x1='1476.3' y1='1309.1' x2='1498' y2='1309.1' stroke='#2ca02c' stroke-width='1.8'/><text x='1505.5' y='1312.9'>HOMO-1 (-0.13)</text><line x1='1476.3' y1='1324.0' x2='1498' y2='1324.0' stroke='#ff0000' stroke-width='1.8'/><text x='1505.5' y='1327.8'>HOMO (0.00)</text><line x1='1476.3' y1='1339.0' x2='1498' y2='1339.0' stroke='#0000ff' stroke-width='1.8'/><text x='1505.5' y='1342.8'>LUMO (1.83)</text><line x1='1476.3' y1='1353.9' x2='1498' y2='1353.9' stroke='#8c564b' stroke-width='1.8'/><text x='1505.5' y='1357.7'>LUMO+1 (2.12)</text><line x1='1476.3' y1='1368.8' x2='1498' y2='1368.8' stroke='#e377c2' stroke-width='1.8'/><text x='1505.5' y='1372.6'>LUMO+2 (2.12)</text><line x1='1476.3' y1='1383.8' x2='1498' y2='1383.8' stroke='#9467bd' stroke-width='1.8'/><text x='1505.5' y='1387.6'>LUMO+3 (2.20)</text></g></svg><div class=r style='left:0px;top:0px;width:3px;height:1035px;background:#e2e2e2;'></div><div class=r style='left:3px;top:0px;width:1720px;height:4px;background:#000;'></div><div class=r style='left:3px;top:0px;width:5px;height:1635px;background:#000;'></div><div class=r style='left:1718px;top:0px;width:5px;height:1635px;background:#000;'></div><div class=r style='left:3px;top:1630px;width:1720px;height:5px;background:#000;'></div><div class=r style='left:863px;top:0px;width:5px;height:1635px;background:#000;'></div><div class=r style='left:3px;top:1056px;width:860px;height:6px;background:#000;'></div><div class=r style='left:868px;top:1056px;width:855px;height:5px;background:#000;'></div>
</body></html>
